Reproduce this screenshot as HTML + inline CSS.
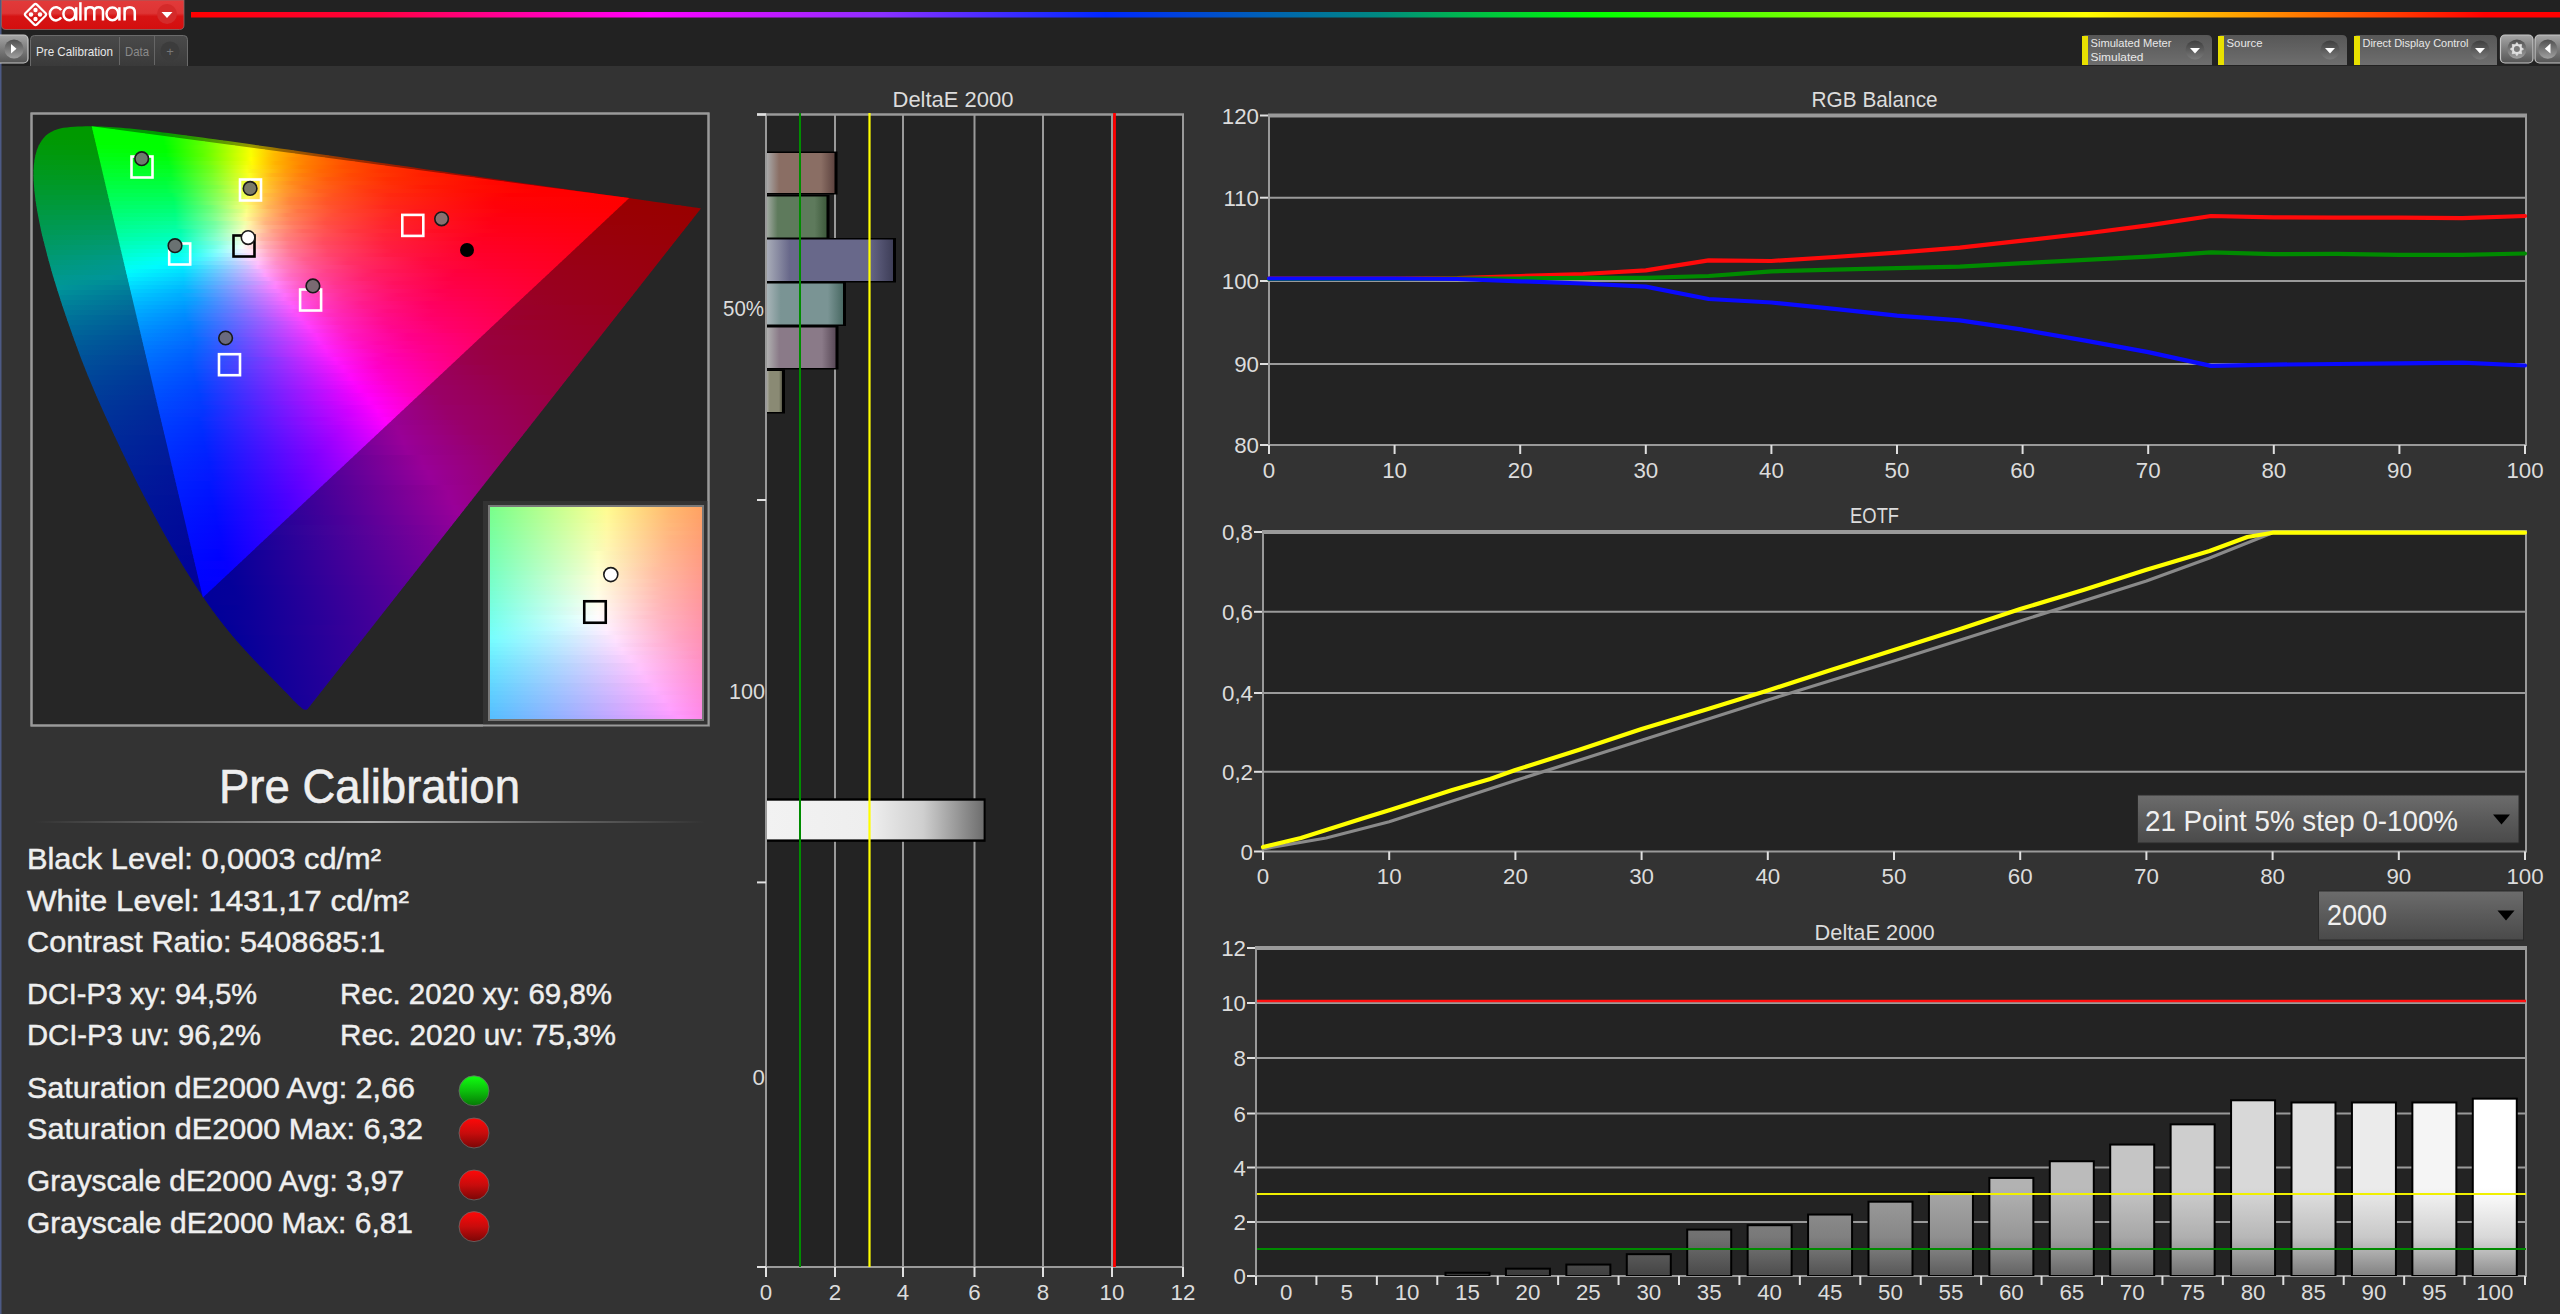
<!DOCTYPE html>
<html><head><meta charset="utf-8"><title>Calman</title>
<style>
html,body{margin:0;padding:0;background:#333;overflow:hidden;width:2560px;height:1314px}
svg{position:absolute;left:0;top:0;display:block}
text{font-family:"Liberation Sans", sans-serif}
</style></head><body>
<svg width="2560" height="1314" viewBox="0 0 2560 1314">
<defs><linearGradient id="rainbow" x1="0" x2="1" y1="0" y2="0">
<stop offset="0" stop-color="#ff0000"/><stop offset="0.08" stop-color="#ff0040"/><stop offset="0.194" stop-color="#ff00ff"/>
<stop offset="0.292" stop-color="#8a30ff"/><stop offset="0.386" stop-color="#0028ff"/><stop offset="0.502" stop-color="#008a80"/>
<stop offset="0.592" stop-color="#00ff00"/><stop offset="0.70" stop-color="#90ff00"/><stop offset="0.80" stop-color="#ffff00"/>
<stop offset="0.869" stop-color="#ff9a00"/><stop offset="0.968" stop-color="#ff0000"/><stop offset="1" stop-color="#ff0000"/></linearGradient><linearGradient id="redbtn" x1="0" x2="0" y1="0" y2="1">
<stop offset="0" stop-color="#e23a3a"/><stop offset="0.45" stop-color="#de3434"/><stop offset="0.55" stop-color="#d61414"/><stop offset="1" stop-color="#d40e0e"/></linearGradient><linearGradient id="btn" x1="0" x2="0" y1="0" y2="1">
<stop offset="0" stop-color="#a6a6a6"/><stop offset="0.5" stop-color="#7c7c7c"/><stop offset="1" stop-color="#555555"/></linearGradient>
<linearGradient id="btnc" x1="0" x2="0" y1="0" y2="1">
<stop offset="0" stop-color="#505050"/><stop offset="1" stop-color="#a0a0a0"/></linearGradient><linearGradient id="tabg" x1="0" x2="0" y1="0" y2="1">
<stop offset="0" stop-color="#4a4a4a"/><stop offset="1" stop-color="#3a3a3a"/></linearGradient><linearGradient id="dd" x1="0" x2="0" y1="0" y2="1">
<stop offset="0" stop-color="#575757"/><stop offset="1" stop-color="#6e6e6e"/></linearGradient><linearGradient id="ddc" x1="0" x2="0" y1="0" y2="1">
<stop offset="0" stop-color="#3e3e3e"/><stop offset="1" stop-color="#7a7a7a"/></linearGradient><linearGradient id="sep" x1="0" x2="1" y1="0" y2="0">
<stop offset="0" stop-color="#333" /><stop offset="0.5" stop-color="#a8a8a8"/><stop offset="1" stop-color="#333"/></linearGradient><linearGradient id="ballg" x1="0" x2="0" y1="0" y2="1">
<stop offset="0" stop-color="#10ff10"/><stop offset="0.5" stop-color="#0cc00c"/><stop offset="1" stop-color="#067806"/></linearGradient><linearGradient id="ballr" x1="0" x2="0" y1="0" y2="1">
<stop offset="0" stop-color="#ff0808"/><stop offset="0.5" stop-color="#c80c0c"/><stop offset="1" stop-color="#7a0606"/></linearGradient><linearGradient id="hb0" x1="0" x2="1" y1="0" y2="0">
<stop offset="0" stop-color="#a8a8a8"/><stop offset="0.18" stop-color="#8a6e64"/><stop offset="0.8" stop-color="#8a6e64"/><stop offset="1" stop-color="#5e4440"/></linearGradient><linearGradient id="hb1" x1="0" x2="1" y1="0" y2="0">
<stop offset="0" stop-color="#a0a8a0"/><stop offset="0.18" stop-color="#5e7a5c"/><stop offset="0.8" stop-color="#5e7a5c"/><stop offset="1" stop-color="#3e5a3c"/></linearGradient><linearGradient id="hb2" x1="0" x2="1" y1="0" y2="0">
<stop offset="0" stop-color="#a8acb8"/><stop offset="0.18" stop-color="#68688a"/><stop offset="0.8" stop-color="#68688a"/><stop offset="1" stop-color="#3e3e58"/></linearGradient><linearGradient id="hb3" x1="0" x2="1" y1="0" y2="0">
<stop offset="0" stop-color="#a8b4b8"/><stop offset="0.18" stop-color="#7a9494"/><stop offset="0.8" stop-color="#7a9494"/><stop offset="1" stop-color="#4a6a64"/></linearGradient><linearGradient id="hb4" x1="0" x2="1" y1="0" y2="0">
<stop offset="0" stop-color="#b0b0b0"/><stop offset="0.18" stop-color="#8a7a88"/><stop offset="0.8" stop-color="#8a7a88"/><stop offset="1" stop-color="#5a4a58"/></linearGradient><linearGradient id="hb5" x1="0" x2="1" y1="0" y2="0">
<stop offset="0" stop-color="#a8a8a0"/><stop offset="0.18" stop-color="#8a8a74"/><stop offset="0.8" stop-color="#8a8a74"/><stop offset="1" stop-color="#5a5a48"/></linearGradient><linearGradient id="hbw" x1="0" x2="1" y1="0" y2="0">
<stop offset="0" stop-color="#f2f2f2"/><stop offset="0.48" stop-color="#eeeeee"/><stop offset="0.72" stop-color="#cfcfcf"/><stop offset="1" stop-color="#6e6e6e"/></linearGradient><linearGradient id="sel" x1="0" x2="0" y1="0" y2="1">
<stop offset="0" stop-color="#6c6c6c"/><stop offset="0.5" stop-color="#5a5a5a"/><stop offset="1" stop-color="#4a4a4a"/></linearGradient><linearGradient id="vb3" gradientUnits="userSpaceOnUse" x1="0" x2="0" y1="1100" y2="1276">
<stop offset="0" stop-color="#626262"/><stop offset="0.5" stop-color="#626262"/><stop offset="0.78" stop-color="#535353"/><stop offset="1" stop-color="#363636"/></linearGradient><linearGradient id="vb4" gradientUnits="userSpaceOnUse" x1="0" x2="0" y1="1100" y2="1276">
<stop offset="0" stop-color="#6a6a6a"/><stop offset="0.5" stop-color="#6a6a6a"/><stop offset="0.78" stop-color="#5a5a5a"/><stop offset="1" stop-color="#3a3a3a"/></linearGradient><linearGradient id="vb5" gradientUnits="userSpaceOnUse" x1="0" x2="0" y1="1100" y2="1276">
<stop offset="0" stop-color="#737373"/><stop offset="0.5" stop-color="#737373"/><stop offset="0.78" stop-color="#626262"/><stop offset="1" stop-color="#3f3f3f"/></linearGradient><linearGradient id="vb6" gradientUnits="userSpaceOnUse" x1="0" x2="0" y1="1100" y2="1276">
<stop offset="0" stop-color="#7b7b7b"/><stop offset="0.5" stop-color="#7b7b7b"/><stop offset="0.78" stop-color="#696969"/><stop offset="1" stop-color="#444444"/></linearGradient><linearGradient id="vb7" gradientUnits="userSpaceOnUse" x1="0" x2="0" y1="1100" y2="1276">
<stop offset="0" stop-color="#848484"/><stop offset="0.5" stop-color="#848484"/><stop offset="0.78" stop-color="#707070"/><stop offset="1" stop-color="#494949"/></linearGradient><linearGradient id="vb8" gradientUnits="userSpaceOnUse" x1="0" x2="0" y1="1100" y2="1276">
<stop offset="0" stop-color="#8d8d8d"/><stop offset="0.5" stop-color="#8d8d8d"/><stop offset="0.78" stop-color="#787878"/><stop offset="1" stop-color="#4d4d4d"/></linearGradient><linearGradient id="vb9" gradientUnits="userSpaceOnUse" x1="0" x2="0" y1="1100" y2="1276">
<stop offset="0" stop-color="#969696"/><stop offset="0.5" stop-color="#969696"/><stop offset="0.78" stop-color="#808080"/><stop offset="1" stop-color="#525252"/></linearGradient><linearGradient id="vb10" gradientUnits="userSpaceOnUse" x1="0" x2="0" y1="1100" y2="1276">
<stop offset="0" stop-color="#9f9f9f"/><stop offset="0.5" stop-color="#9f9f9f"/><stop offset="0.78" stop-color="#878787"/><stop offset="1" stop-color="#575757"/></linearGradient><linearGradient id="vb11" gradientUnits="userSpaceOnUse" x1="0" x2="0" y1="1100" y2="1276">
<stop offset="0" stop-color="#a8a8a8"/><stop offset="0.5" stop-color="#a8a8a8"/><stop offset="0.78" stop-color="#8f8f8f"/><stop offset="1" stop-color="#5c5c5c"/></linearGradient><linearGradient id="vb12" gradientUnits="userSpaceOnUse" x1="0" x2="0" y1="1100" y2="1276">
<stop offset="0" stop-color="#b2b2b2"/><stop offset="0.5" stop-color="#b2b2b2"/><stop offset="0.78" stop-color="#979797"/><stop offset="1" stop-color="#626262"/></linearGradient><linearGradient id="vb13" gradientUnits="userSpaceOnUse" x1="0" x2="0" y1="1100" y2="1276">
<stop offset="0" stop-color="#bbbbbb"/><stop offset="0.5" stop-color="#bbbbbb"/><stop offset="0.78" stop-color="#9f9f9f"/><stop offset="1" stop-color="#676767"/></linearGradient><linearGradient id="vb14" gradientUnits="userSpaceOnUse" x1="0" x2="0" y1="1100" y2="1276">
<stop offset="0" stop-color="#c5c5c5"/><stop offset="0.5" stop-color="#c5c5c5"/><stop offset="0.78" stop-color="#a7a7a7"/><stop offset="1" stop-color="#6c6c6c"/></linearGradient><linearGradient id="vb15" gradientUnits="userSpaceOnUse" x1="0" x2="0" y1="1100" y2="1276">
<stop offset="0" stop-color="#cecece"/><stop offset="0.5" stop-color="#cecece"/><stop offset="0.78" stop-color="#afafaf"/><stop offset="1" stop-color="#717171"/></linearGradient><linearGradient id="vb16" gradientUnits="userSpaceOnUse" x1="0" x2="0" y1="1100" y2="1276">
<stop offset="0" stop-color="#d8d8d8"/><stop offset="0.5" stop-color="#d8d8d8"/><stop offset="0.78" stop-color="#b7b7b7"/><stop offset="1" stop-color="#767676"/></linearGradient><linearGradient id="vb17" gradientUnits="userSpaceOnUse" x1="0" x2="0" y1="1100" y2="1276">
<stop offset="0" stop-color="#e1e1e1"/><stop offset="0.5" stop-color="#e1e1e1"/><stop offset="0.78" stop-color="#bfbfbf"/><stop offset="1" stop-color="#7c7c7c"/></linearGradient><linearGradient id="vb18" gradientUnits="userSpaceOnUse" x1="0" x2="0" y1="1100" y2="1276">
<stop offset="0" stop-color="#ebebeb"/><stop offset="0.5" stop-color="#ebebeb"/><stop offset="0.78" stop-color="#c8c8c8"/><stop offset="1" stop-color="#818181"/></linearGradient><linearGradient id="vb19" gradientUnits="userSpaceOnUse" x1="0" x2="0" y1="1100" y2="1276">
<stop offset="0" stop-color="#f5f5f5"/><stop offset="0.5" stop-color="#f5f5f5"/><stop offset="0.78" stop-color="#d0d0d0"/><stop offset="1" stop-color="#868686"/></linearGradient><linearGradient id="vb20" gradientUnits="userSpaceOnUse" x1="0" x2="0" y1="1100" y2="1276">
<stop offset="0" stop-color="#ffffff"/><stop offset="0.5" stop-color="#ffffff"/><stop offset="0.78" stop-color="#d8d8d8"/><stop offset="1" stop-color="#8c8c8c"/></linearGradient><clipPath id="locus"><path d="M307.6,709.0 L307.3,709.2 L307.0,709.4 L306.7,709.6 L306.4,709.7 L306.1,709.8 L305.8,709.8 L305.5,709.8 L305.1,709.7 L304.7,709.7 L304.2,709.6 L303.6,709.4 L302.6,708.7 L301.4,707.8 L300.0,706.5 L298.2,704.9 L296.1,702.9 L293.6,700.4 L290.8,697.5 L287.6,694.1 L283.8,690.2 L279.2,685.5 L273.9,680.1 L268.6,674.7 L263.8,669.8 L260.0,666.0 L256.8,662.7 L253.7,659.4 L250.2,655.7 L246.3,651.5 L242.2,647.0 L237.9,642.2 L233.4,637.0 L228.8,631.4 L224.0,625.6 L218.9,619.1 L213.3,611.6 L207.2,603.0 L200.7,593.5 L193.8,583.0 L186.6,571.7 L179.1,559.4 L171.3,546.2 L163.2,532.1 L155.1,517.1 L146.7,501.2 L138.0,484.4 L129.4,466.9 L120.9,449.2 L112.4,431.2 L103.9,412.7 L95.6,394.1 L87.9,375.8 L80.8,357.7 L74.1,339.6 L67.9,322.0 L62.2,305.3 L57.1,289.3 L52.4,273.9 L48.3,259.3 L44.8,245.8 L41.7,233.4 L39.3,221.9 L37.3,211.4 L35.7,201.6 L34.6,192.8 L33.9,184.8 L33.5,177.6 L33.5,170.9 L33.9,164.7 L34.6,159.2 L35.7,154.3 L37.0,149.8 L38.6,145.7 L40.6,142.2 L42.8,139.0 L45.2,136.3 L47.8,134.1 L50.6,132.2 L53.7,130.7 L56.8,129.5 L60.1,128.5 L63.5,127.8 L67.0,127.4 L70.6,127.0 L74.3,126.7 L78.1,126.5 L81.9,126.4 L85.7,126.3 L89.5,126.3 L93.3,126.4 L97.2,126.4 L101.0,126.6 L105.0,126.7 L108.9,127.0 L112.9,127.2 L117.0,127.5 L121.2,127.8 L125.4,128.2 L129.8,128.6 L134.2,129.0 L138.8,129.5 L143.4,130.0 L148.1,130.6 L152.9,131.1 L157.9,131.7 L163.0,132.4 L168.1,133.0 L173.5,133.7 L179.0,134.4 L184.6,135.2 L190.4,135.9 L196.3,136.7 L202.3,137.6 L208.6,138.4 L214.9,139.3 L221.5,140.2 L228.2,141.1 L235.1,142.1 L242.2,143.1 L249.4,144.1 L256.8,145.2 L264.4,146.2 L272.1,147.3 L280.0,148.5 L288.2,149.6 L296.4,150.8 L304.9,152.0 L313.5,153.2 L322.3,154.5 L331.2,155.8 L340.3,157.1 L349.6,158.4 L358.9,159.7 L368.5,161.0 L378.1,162.4 L387.7,163.8 L397.5,165.2 L407.3,166.6 L417.2,168.0 L426.9,169.4 L436.5,170.8 L446.1,172.1 L455.5,173.5 L464.9,174.8 L474.3,176.1 L483.7,177.5 L492.9,178.8 L501.9,180.1 L510.6,181.3 L519.1,182.5 L527.4,183.7 L535.4,184.8 L543.2,185.9 L550.7,187.0 L558.0,188.0 L565.0,189.0 L571.7,190.0 L578.2,190.9 L584.3,191.8 L590.2,192.6 L595.9,193.4 L601.2,194.2 L606.4,194.9 L611.3,195.6 L616.1,196.3 L620.6,196.9 L624.9,197.5 L629.1,198.1 L633.2,198.7 L637.1,199.3 L640.9,199.8 L644.6,200.4 L647.8,200.8 L650.9,201.3 L654.0,201.7 L657.6,202.2 L662.1,202.8 L667.1,203.6 L672.0,204.3 L676.3,204.9 L679.7,205.3 L682.5,205.7 L685.0,206.1 L687.5,206.4 L690.1,206.8 L692.8,207.2 L695.2,207.5 L697.1,207.8 L698.6,208.0 L699.6,208.2 L700.4,208.3 L700.9,208.4 Z"/></clipPath><clipPath id="tri"><path d="M91.7,126.3 L629.2,198.1 L202.9,597.4 Z"/></clipPath><linearGradient id="c1" gradientUnits="userSpaceOnUse" x1="52" x2="147" y1="0" y2="0"><stop offset="0" stop-color="#009900"/><stop offset="1" stop-color="#009900"/></linearGradient><linearGradient id="c2" gradientUnits="userSpaceOnUse" x1="43" x2="187" y1="0" y2="0"><stop offset="0" stop-color="#009900"/><stop offset="0.83" stop-color="#009900"/><stop offset="1" stop-color="#219900"/></linearGradient><linearGradient id="c3" gradientUnits="userSpaceOnUse" x1="39" x2="223" y1="0" y2="0"><stop offset="0" stop-color="#009901"/><stop offset="0.65" stop-color="#009900"/><stop offset="0.76" stop-color="#149900"/><stop offset="1" stop-color="#5d9900"/></linearGradient><linearGradient id="c4" gradientUnits="userSpaceOnUse" x1="36" x2="259" y1="0" y2="0"><stop offset="0" stop-color="#009905"/><stop offset="0.58" stop-color="#019900"/><stop offset="0.85" stop-color="#629900"/><stop offset="0.94" stop-color="#8b9900"/><stop offset="1" stop-color="#998b00"/></linearGradient><linearGradient id="c5" gradientUnits="userSpaceOnUse" x1="33" x2="294" y1="0" y2="0"><stop offset="0" stop-color="#009909"/><stop offset="0.5" stop-color="#009900"/><stop offset="0.61" stop-color="#299900"/><stop offset="0.8" stop-color="#859900"/><stop offset="0.84" stop-color="#999600"/><stop offset="0.96" stop-color="#996500"/><stop offset="1" stop-color="#995800"/></linearGradient><linearGradient id="c6" gradientUnits="userSpaceOnUse" x1="32" x2="329" y1="0" y2="0"><stop offset="0" stop-color="#00990d"/><stop offset="0.44" stop-color="#009902"/><stop offset="0.51" stop-color="#179900"/><stop offset="0.67" stop-color="#6f9900"/><stop offset="0.74" stop-color="#999800"/><stop offset="0.84" stop-color="#996500"/><stop offset="1" stop-color="#993b00"/></linearGradient><linearGradient id="c7" gradientUnits="userSpaceOnUse" x1="31" x2="364" y1="0" y2="0"><stop offset="0" stop-color="#009911"/><stop offset="0.39" stop-color="#009907"/><stop offset="0.42" stop-color="#069906"/><stop offset="0.57" stop-color="#599900"/><stop offset="0.66" stop-color="#999900"/><stop offset="0.75" stop-color="#996500"/><stop offset="0.9" stop-color="#993900"/><stop offset="1" stop-color="#992800"/></linearGradient><linearGradient id="c8" gradientUnits="userSpaceOnUse" x1="30" x2="400" y1="0" y2="0"><stop offset="0" stop-color="#009915"/><stop offset="0.38" stop-color="#03990c"/><stop offset="0.51" stop-color="#579906"/><stop offset="0.59" stop-color="#979902"/><stop offset="0.68" stop-color="#996600"/><stop offset="0.81" stop-color="#993900"/><stop offset="1" stop-color="#991a00"/></linearGradient><linearGradient id="c9" gradientUnits="userSpaceOnUse" x1="30" x2="435" y1="0" y2="0"><stop offset="0" stop-color="#009919"/><stop offset="0.35" stop-color="#039911"/><stop offset="0.47" stop-color="#57990d"/><stop offset="0.54" stop-color="#989909"/><stop offset="0.62" stop-color="#996503"/><stop offset="0.74" stop-color="#993800"/><stop offset="0.96" stop-color="#991400"/><stop offset="1" stop-color="#991100"/></linearGradient><linearGradient id="c10" gradientUnits="userSpaceOnUse" x1="30" x2="470" y1="0" y2="0"><stop offset="0" stop-color="#00991e"/><stop offset="0.32" stop-color="#029917"/><stop offset="0.43" stop-color="#579913"/><stop offset="0.5" stop-color="#999911"/><stop offset="0.55" stop-color="#99720b"/><stop offset="0.64" stop-color="#994504"/><stop offset="0.77" stop-color="#992300"/><stop offset="1" stop-color="#990900"/></linearGradient><linearGradient id="c11" gradientUnits="userSpaceOnUse" x1="30" x2="505" y1="0" y2="0"><stop offset="0" stop-color="#009922"/><stop offset="0.29" stop-color="#01991d"/><stop offset="0.4" stop-color="#57991a"/><stop offset="0.46" stop-color="#999818"/><stop offset="0.51" stop-color="#997110"/><stop offset="0.59" stop-color="#994408"/><stop offset="0.72" stop-color="#992302"/><stop offset="0.97" stop-color="#990500"/><stop offset="1" stop-color="#990300"/></linearGradient><linearGradient id="c12" gradientUnits="userSpaceOnUse" x1="30" x2="540" y1="0" y2="0"><stop offset="0" stop-color="#009926"/><stop offset="0.27" stop-color="#009923"/><stop offset="0.37" stop-color="#579921"/><stop offset="0.43" stop-color="#99971f"/><stop offset="0.47" stop-color="#997016"/><stop offset="0.55" stop-color="#99430c"/><stop offset="0.69" stop-color="#991e04"/><stop offset="0.96" stop-color="#990000"/><stop offset="1" stop-color="#990000"/></linearGradient><linearGradient id="c13" gradientUnits="userSpaceOnUse" x1="30" x2="575" y1="0" y2="0"><stop offset="0" stop-color="#00992b"/><stop offset="0.26" stop-color="#009929"/><stop offset="0.33" stop-color="#439928"/><stop offset="0.4" stop-color="#999627"/><stop offset="0.44" stop-color="#996f1c"/><stop offset="0.51" stop-color="#994210"/><stop offset="0.66" stop-color="#991a05"/><stop offset="0.9" stop-color="#990000"/><stop offset="1" stop-color="#990000"/></linearGradient><linearGradient id="c14" gradientUnits="userSpaceOnUse" x1="31" x2="610" y1="0" y2="0"><stop offset="0" stop-color="#00992f"/><stop offset="0.24" stop-color="#00992f"/><stop offset="0.33" stop-color="#599930"/><stop offset="0.38" stop-color="#99932e"/><stop offset="0.41" stop-color="#996c22"/><stop offset="0.48" stop-color="#994114"/><stop offset="0.59" stop-color="#99200a"/><stop offset="0.79" stop-color="#990301"/><stop offset="1" stop-color="#990000"/></linearGradient><linearGradient id="c15" gradientUnits="userSpaceOnUse" x1="31" x2="646" y1="0" y2="0"><stop offset="0" stop-color="#009934"/><stop offset="0.23" stop-color="#009936"/><stop offset="0.29" stop-color="#459937"/><stop offset="0.34" stop-color="#879938"/><stop offset="0.36" stop-color="#999235"/><stop offset="0.39" stop-color="#996b28"/><stop offset="0.46" stop-color="#994019"/><stop offset="0.55" stop-color="#991f0d"/><stop offset="0.76" stop-color="#990103"/><stop offset="1" stop-color="#990000"/></linearGradient><linearGradient id="c16" gradientUnits="userSpaceOnUse" x1="32" x2="681" y1="0" y2="0"><stop offset="0" stop-color="#009938"/><stop offset="0.22" stop-color="#00993c"/><stop offset="0.28" stop-color="#46993e"/><stop offset="0.32" stop-color="#8a9940"/><stop offset="0.34" stop-color="#998e3c"/><stop offset="0.39" stop-color="#995b28"/><stop offset="0.45" stop-color="#99371a"/><stop offset="0.57" stop-color="#99140c"/><stop offset="0.76" stop-color="#990003"/><stop offset="1" stop-color="#990000"/></linearGradient><linearGradient id="c17" gradientUnits="userSpaceOnUse" x1="33" x2="703" y1="0" y2="0"><stop offset="0" stop-color="#00993d"/><stop offset="0.21" stop-color="#009943"/><stop offset="0.27" stop-color="#489946"/><stop offset="0.31" stop-color="#8e9949"/><stop offset="0.33" stop-color="#998b43"/><stop offset="0.36" stop-color="#996633"/><stop offset="0.42" stop-color="#993c20"/><stop offset="0.54" stop-color="#991610"/><stop offset="0.72" stop-color="#990005"/><stop offset="1" stop-color="#990000"/></linearGradient><linearGradient id="c18" gradientUnits="userSpaceOnUse" x1="34" x2="703" y1="0" y2="0"><stop offset="0" stop-color="#009942"/><stop offset="0.21" stop-color="#00994a"/><stop offset="0.27" stop-color="#4a994e"/><stop offset="0.31" stop-color="#919952"/><stop offset="0.34" stop-color="#997440"/><stop offset="0.39" stop-color="#994c2d"/><stop offset="0.46" stop-color="#99281c"/><stop offset="0.63" stop-color="#99070c"/><stop offset="0.79" stop-color="#990005"/><stop offset="1" stop-color="#990000"/></linearGradient><linearGradient id="c19" gradientUnits="userSpaceOnUse" x1="34" x2="699" y1="0" y2="0"><stop offset="0" stop-color="#009947"/><stop offset="0.21" stop-color="#009951"/><stop offset="0.27" stop-color="#4a9956"/><stop offset="0.32" stop-color="#92995b"/><stop offset="0.35" stop-color="#997247"/><stop offset="0.39" stop-color="#994b32"/><stop offset="0.47" stop-color="#99271f"/><stop offset="0.62" stop-color="#99080f"/><stop offset="0.77" stop-color="#990007"/><stop offset="1" stop-color="#990001"/></linearGradient><linearGradient id="c20" gradientUnits="userSpaceOnUse" x1="35" x2="695" y1="0" y2="0"><stop offset="0" stop-color="#00994c"/><stop offset="0.21" stop-color="#009959"/><stop offset="0.27" stop-color="#4c995f"/><stop offset="0.32" stop-color="#969965"/><stop offset="0.36" stop-color="#996044"/><stop offset="0.42" stop-color="#99382d"/><stop offset="0.53" stop-color="#991619"/><stop offset="0.71" stop-color="#99000b"/><stop offset="1" stop-color="#990002"/></linearGradient><linearGradient id="c21" gradientUnits="userSpaceOnUse" x1="36" x2="691" y1="0" y2="0"><stop offset="0" stop-color="#009951"/><stop offset="0.21" stop-color="#009960"/><stop offset="0.27" stop-color="#4e9968"/><stop offset="0.32" stop-color="#99986f"/><stop offset="0.35" stop-color="#996d53"/><stop offset="0.4" stop-color="#99463b"/><stop offset="0.49" stop-color="#992023"/><stop offset="0.67" stop-color="#990210"/><stop offset="1" stop-color="#990003"/></linearGradient><linearGradient id="c22" gradientUnits="userSpaceOnUse" x1="38" x2="687" y1="0" y2="0"><stop offset="0" stop-color="#009956"/><stop offset="0.22" stop-color="#029968"/><stop offset="0.28" stop-color="#529971"/><stop offset="0.31" stop-color="#849977"/><stop offset="0.32" stop-color="#999274"/><stop offset="0.35" stop-color="#996858"/><stop offset="0.42" stop-color="#993b39"/><stop offset="0.52" stop-color="#991720"/><stop offset="0.71" stop-color="#99000f"/><stop offset="1" stop-color="#990005"/></linearGradient><linearGradient id="c23" gradientUnits="userSpaceOnUse" x1="39" x2="683" y1="0" y2="0"><stop offset="0" stop-color="#00995c"/><stop offset="0.22" stop-color="#039971"/><stop offset="0.28" stop-color="#55997b"/><stop offset="0.31" stop-color="#889981"/><stop offset="0.33" stop-color="#998e7b"/><stop offset="0.36" stop-color="#99655e"/><stop offset="0.42" stop-color="#99393d"/><stop offset="0.53" stop-color="#991623"/><stop offset="0.7" stop-color="#990012"/><stop offset="1" stop-color="#990006"/></linearGradient><linearGradient id="c24" gradientUnits="userSpaceOnUse" x1="40" x2="680" y1="0" y2="0"><stop offset="0" stop-color="#009961"/><stop offset="0.22" stop-color="#039979"/><stop offset="0.28" stop-color="#579985"/><stop offset="0.31" stop-color="#8b998c"/><stop offset="0.33" stop-color="#998a83"/><stop offset="0.36" stop-color="#996363"/><stop offset="0.42" stop-color="#993741"/><stop offset="0.53" stop-color="#991526"/><stop offset="0.7" stop-color="#990014"/><stop offset="1" stop-color="#990007"/></linearGradient><linearGradient id="c25" gradientUnits="userSpaceOnUse" x1="41" x2="676" y1="0" y2="0"><stop offset="0" stop-color="#009967"/><stop offset="0.22" stop-color="#049982"/><stop offset="0.28" stop-color="#59998f"/><stop offset="0.31" stop-color="#8f9998"/><stop offset="0.33" stop-color="#99878a"/><stop offset="0.36" stop-color="#996069"/><stop offset="0.43" stop-color="#993645"/><stop offset="0.52" stop-color="#99172b"/><stop offset="0.69" stop-color="#990017"/><stop offset="1" stop-color="#990009"/></linearGradient><linearGradient id="c26" gradientUnits="userSpaceOnUse" x1="42" x2="672" y1="0" y2="0"><stop offset="0" stop-color="#00996c"/><stop offset="0.21" stop-color="#009988"/><stop offset="0.22" stop-color="#05998b"/><stop offset="0.3" stop-color="#729399"/><stop offset="0.32" stop-color="#8a8f99"/><stop offset="0.33" stop-color="#998391"/><stop offset="0.38" stop-color="#995063"/><stop offset="0.44" stop-color="#992d43"/><stop offset="0.57" stop-color="#990d26"/><stop offset="0.71" stop-color="#990017"/><stop offset="1" stop-color="#99000a"/></linearGradient><linearGradient id="c27" gradientUnits="userSpaceOnUse" x1="44" x2="668" y1="0" y2="0"><stop offset="0" stop-color="#009973"/><stop offset="0.21" stop-color="#009991"/><stop offset="0.22" stop-color="#079995"/><stop offset="0.34" stop-color="#997d96"/><stop offset="0.37" stop-color="#995973"/><stop offset="0.43" stop-color="#99314d"/><stop offset="0.54" stop-color="#99112e"/><stop offset="0.71" stop-color="#99001a"/><stop offset="1" stop-color="#99000b"/></linearGradient><linearGradient id="c28" gradientUnits="userSpaceOnUse" x1="45" x2="664" y1="0" y2="0"><stop offset="0" stop-color="#009979"/><stop offset="0.21" stop-color="#009799"/><stop offset="0.23" stop-color="#089499"/><stop offset="0.34" stop-color="#967799"/><stop offset="0.39" stop-color="#994a6c"/><stop offset="0.45" stop-color="#99294a"/><stop offset="0.58" stop-color="#990b2b"/><stop offset="0.71" stop-color="#99001c"/><stop offset="1" stop-color="#99000d"/></linearGradient><linearGradient id="c29" gradientUnits="userSpaceOnUse" x1="46" x2="660" y1="0" y2="0"><stop offset="0" stop-color="#00997f"/><stop offset="0.18" stop-color="#009699"/><stop offset="0.21" stop-color="#008e99"/><stop offset="0.23" stop-color="#088b99"/><stop offset="0.34" stop-color="#8f6f99"/><stop offset="0.36" stop-color="#99638e"/><stop offset="0.42" stop-color="#99355c"/><stop offset="0.54" stop-color="#991236"/><stop offset="0.68" stop-color="#990021"/><stop offset="1" stop-color="#99000e"/></linearGradient><linearGradient id="c30" gradientUnits="userSpaceOnUse" x1="48" x2="656" y1="0" y2="0"><stop offset="0" stop-color="#009985"/><stop offset="0.15" stop-color="#009499"/><stop offset="0.21" stop-color="#008699"/><stop offset="0.25" stop-color="#1c7f99"/><stop offset="0.35" stop-color="#8c6799"/><stop offset="0.36" stop-color="#995e93"/><stop offset="0.41" stop-color="#993a69"/><stop offset="0.51" stop-color="#991741"/><stop offset="0.67" stop-color="#990025"/><stop offset="1" stop-color="#990010"/></linearGradient><linearGradient id="c31" gradientUnits="userSpaceOnUse" x1="49" x2="652" y1="0" y2="0"><stop offset="0" stop-color="#00998c"/><stop offset="0.1" stop-color="#009599"/><stop offset="0.22" stop-color="#007e99"/><stop offset="0.25" stop-color="#1b7799"/><stop offset="0.36" stop-color="#995b99"/><stop offset="0.41" stop-color="#99386e"/><stop offset="0.51" stop-color="#991644"/><stop offset="0.68" stop-color="#990026"/><stop offset="1" stop-color="#990011"/></linearGradient><linearGradient id="c32" gradientUnits="userSpaceOnUse" x1="51" x2="648" y1="0" y2="0"><stop offset="0" stop-color="#009993"/><stop offset="0.12" stop-color="#008b99"/><stop offset="0.22" stop-color="#007799"/><stop offset="0.32" stop-color="#606199"/><stop offset="0.37" stop-color="#965599"/><stop offset="0.44" stop-color="#992e67"/><stop offset="0.54" stop-color="#991142"/><stop offset="0.69" stop-color="#990028"/><stop offset="1" stop-color="#990013"/></linearGradient><linearGradient id="c33" gradientUnits="userSpaceOnUse" x1="52" x2="644" y1="0" y2="0"><stop offset="0" stop-color="#009899"/><stop offset="0.22" stop-color="#007099"/><stop offset="0.37" stop-color="#904f99"/><stop offset="0.39" stop-color="#994790"/><stop offset="0.46" stop-color="#992663"/><stop offset="0.56" stop-color="#990d41"/><stop offset="0.69" stop-color="#99002a"/><stop offset="1" stop-color="#990014"/></linearGradient><linearGradient id="c34" gradientUnits="userSpaceOnUse" x1="54" x2="640" y1="0" y2="0"><stop offset="0" stop-color="#009199"/><stop offset="0.22" stop-color="#006a99"/><stop offset="0.38" stop-color="#8d4a99"/><stop offset="0.39" stop-color="#994394"/><stop offset="0.46" stop-color="#992366"/><stop offset="0.56" stop-color="#990b43"/><stop offset="0.68" stop-color="#99002e"/><stop offset="1" stop-color="#990016"/></linearGradient><linearGradient id="c35" gradientUnits="userSpaceOnUse" x1="55" x2="636" y1="0" y2="0"><stop offset="0" stop-color="#008b99"/><stop offset="0.22" stop-color="#006499"/><stop offset="0.4" stop-color="#994199"/><stop offset="0.46" stop-color="#992269"/><stop offset="0.57" stop-color="#990a46"/><stop offset="0.71" stop-color="#99002e"/><stop offset="1" stop-color="#990017"/></linearGradient><linearGradient id="c36" gradientUnits="userSpaceOnUse" x1="57" x2="632" y1="0" y2="0"><stop offset="0" stop-color="#008599"/><stop offset="0.23" stop-color="#015f99"/><stop offset="0.4" stop-color="#963c99"/><stop offset="0.49" stop-color="#991b64"/><stop offset="0.61" stop-color="#990440"/><stop offset="0.89" stop-color="#990020"/><stop offset="1" stop-color="#990019"/></linearGradient><linearGradient id="c37" gradientUnits="userSpaceOnUse" x1="59" x2="628" y1="0" y2="0"><stop offset="0" stop-color="#007f99"/><stop offset="0.23" stop-color="#035a99"/><stop offset="0.4" stop-color="#933899"/><stop offset="0.46" stop-color="#992378"/><stop offset="0.56" stop-color="#990a4f"/><stop offset="0.7" stop-color="#990034"/><stop offset="1" stop-color="#99001b"/></linearGradient><linearGradient id="c38" gradientUnits="userSpaceOnUse" x1="60" x2="625" y1="0" y2="0"><stop offset="0" stop-color="#007a99"/><stop offset="0.23" stop-color="#045599"/><stop offset="0.42" stop-color="#992f95"/><stop offset="0.5" stop-color="#99176a"/><stop offset="0.64" stop-color="#990041"/><stop offset="0.92" stop-color="#990021"/><stop offset="1" stop-color="#99001c"/></linearGradient><linearGradient id="c39" gradientUnits="userSpaceOnUse" x1="62" x2="621" y1="0" y2="0"><stop offset="0" stop-color="#007499"/><stop offset="0.21" stop-color="#005399"/><stop offset="0.25" stop-color="#124d99"/><stop offset="0.43" stop-color="#992c98"/><stop offset="0.5" stop-color="#99156d"/><stop offset="0.63" stop-color="#990147"/><stop offset="0.84" stop-color="#990029"/><stop offset="1" stop-color="#99001e"/></linearGradient><linearGradient id="c40" gradientUnits="userSpaceOnUse" x1="64" x2="617" y1="0" y2="0"><stop offset="0" stop-color="#007099"/><stop offset="0.22" stop-color="#004f99"/><stop offset="0.29" stop-color="#2c4399"/><stop offset="0.43" stop-color="#972999"/><stop offset="0.52" stop-color="#990f68"/><stop offset="0.67" stop-color="#990042"/><stop offset="0.94" stop-color="#990024"/><stop offset="1" stop-color="#990020"/></linearGradient><linearGradient id="c41" gradientUnits="userSpaceOnUse" x1="65" x2="613" y1="0" y2="0"><stop offset="0" stop-color="#006b99"/><stop offset="0.22" stop-color="#004b99"/><stop offset="0.31" stop-color="#373c99"/><stop offset="0.44" stop-color="#932699"/><stop offset="0.49" stop-color="#99167c"/><stop offset="0.6" stop-color="#990354"/><stop offset="0.82" stop-color="#990030"/><stop offset="1" stop-color="#990022"/></linearGradient><linearGradient id="c42" gradientUnits="userSpaceOnUse" x1="67" x2="609" y1="0" y2="0"><stop offset="0" stop-color="#006799"/><stop offset="0.22" stop-color="#004799"/><stop offset="0.39" stop-color="#692c99"/><stop offset="0.46" stop-color="#991e94"/><stop offset="0.55" stop-color="#990967"/><stop offset="0.68" stop-color="#990046"/><stop offset="0.94" stop-color="#990028"/><stop offset="1" stop-color="#990024"/></linearGradient><linearGradient id="c43" gradientUnits="userSpaceOnUse" x1="69" x2="605" y1="0" y2="0"><stop offset="0" stop-color="#006299"/><stop offset="0.22" stop-color="#004399"/><stop offset="0.43" stop-color="#812399"/><stop offset="0.47" stop-color="#991c97"/><stop offset="0.56" stop-color="#990869"/><stop offset="0.67" stop-color="#99004b"/><stop offset="0.93" stop-color="#99002a"/><stop offset="1" stop-color="#990026"/></linearGradient><linearGradient id="c44" gradientUnits="userSpaceOnUse" x1="71" x2="601" y1="0" y2="0"><stop offset="0" stop-color="#005e99"/><stop offset="0.23" stop-color="#004099"/><stop offset="0.47" stop-color="#981999"/><stop offset="0.57" stop-color="#99066b"/><stop offset="0.72" stop-color="#990046"/><stop offset="1" stop-color="#990028"/></linearGradient><linearGradient id="c45" gradientUnits="userSpaceOnUse" x1="73" x2="597" y1="0" y2="0"><stop offset="0" stop-color="#005a99"/><stop offset="0.23" stop-color="#013d99"/><stop offset="0.48" stop-color="#961799"/><stop offset="0.61" stop-color="#990061"/><stop offset="0.8" stop-color="#99003d"/><stop offset="1" stop-color="#99002a"/></linearGradient><linearGradient id="c46" gradientUnits="userSpaceOnUse" x1="74" x2="593" y1="0" y2="0"><stop offset="0" stop-color="#005799"/><stop offset="0.23" stop-color="#023a99"/><stop offset="0.48" stop-color="#921599"/><stop offset="0.52" stop-color="#990d89"/><stop offset="0.64" stop-color="#99005f"/><stop offset="0.83" stop-color="#99003c"/><stop offset="1" stop-color="#99002c"/></linearGradient><linearGradient id="c47" gradientUnits="userSpaceOnUse" x1="76" x2="589" y1="0" y2="0"><stop offset="0" stop-color="#005399"/><stop offset="0.23" stop-color="#033699"/><stop offset="0.51" stop-color="#990f96"/><stop offset="0.62" stop-color="#990066"/><stop offset="0.82" stop-color="#990040"/><stop offset="1" stop-color="#99002e"/></linearGradient><linearGradient id="c48" gradientUnits="userSpaceOnUse" x1="78" x2="585" y1="0" y2="0"><stop offset="0" stop-color="#005099"/><stop offset="0.24" stop-color="#043499"/><stop offset="0.51" stop-color="#990d99"/><stop offset="0.61" stop-color="#99006e"/><stop offset="0.79" stop-color="#990047"/><stop offset="1" stop-color="#990030"/></linearGradient><linearGradient id="c49" gradientUnits="userSpaceOnUse" x1="80" x2="581" y1="0" y2="0"><stop offset="0" stop-color="#004d99"/><stop offset="0.22" stop-color="#003399"/><stop offset="0.32" stop-color="#2d2799"/><stop offset="0.52" stop-color="#970b99"/><stop offset="0.64" stop-color="#99006a"/><stop offset="0.84" stop-color="#990043"/><stop offset="1" stop-color="#990032"/></linearGradient><linearGradient id="c50" gradientUnits="userSpaceOnUse" x1="82" x2="577" y1="0" y2="0"><stop offset="0" stop-color="#004a99"/><stop offset="0.22" stop-color="#003099"/><stop offset="0.46" stop-color="#741199"/><stop offset="0.53" stop-color="#950999"/><stop offset="0.63" stop-color="#990072"/><stop offset="0.81" stop-color="#99004a"/><stop offset="1" stop-color="#990034"/></linearGradient><linearGradient id="c51" gradientUnits="userSpaceOnUse" x1="84" x2="573" y1="0" y2="0"><stop offset="0" stop-color="#004799"/><stop offset="0.22" stop-color="#002e99"/><stop offset="0.51" stop-color="#880a99"/><stop offset="0.55" stop-color="#990495"/><stop offset="0.67" stop-color="#990068"/><stop offset="0.88" stop-color="#990043"/><stop offset="1" stop-color="#990037"/></linearGradient><linearGradient id="c52" gradientUnits="userSpaceOnUse" x1="86" x2="570" y1="0" y2="0"><stop offset="0" stop-color="#004499"/><stop offset="0.23" stop-color="#002b99"/><stop offset="0.56" stop-color="#990297"/><stop offset="0.68" stop-color="#99006a"/><stop offset="0.89" stop-color="#990045"/><stop offset="1" stop-color="#990039"/></linearGradient><linearGradient id="c53" gradientUnits="userSpaceOnUse" x1="88" x2="566" y1="0" y2="0"><stop offset="0" stop-color="#004199"/><stop offset="0.23" stop-color="#012999"/><stop offset="0.56" stop-color="#990199"/><stop offset="0.69" stop-color="#99006c"/><stop offset="0.9" stop-color="#990046"/><stop offset="1" stop-color="#99003b"/></linearGradient><linearGradient id="c54" gradientUnits="userSpaceOnUse" x1="90" x2="562" y1="0" y2="0"><stop offset="0" stop-color="#003f99"/><stop offset="0.23" stop-color="#022799"/><stop offset="0.57" stop-color="#970099"/><stop offset="0.72" stop-color="#990068"/><stop offset="0.97" stop-color="#990040"/><stop offset="1" stop-color="#99003e"/></linearGradient><linearGradient id="c55" gradientUnits="userSpaceOnUse" x1="93" x2="558" y1="0" y2="0"><stop offset="0" stop-color="#003c99"/><stop offset="0.24" stop-color="#042499"/><stop offset="0.58" stop-color="#960099"/><stop offset="0.75" stop-color="#990065"/><stop offset="1" stop-color="#990040"/></linearGradient><linearGradient id="c56" gradientUnits="userSpaceOnUse" x1="95" x2="554" y1="0" y2="0"><stop offset="0" stop-color="#003999"/><stop offset="0.22" stop-color="#002499"/><stop offset="0.52" stop-color="#770399"/><stop offset="0.61" stop-color="#990095"/><stop offset="0.76" stop-color="#990066"/><stop offset="1" stop-color="#990043"/></linearGradient><linearGradient id="c57" gradientUnits="userSpaceOnUse" x1="97" x2="550" y1="0" y2="0"><stop offset="0" stop-color="#003799"/><stop offset="0.22" stop-color="#002299"/><stop offset="0.55" stop-color="#7f0099"/><stop offset="0.62" stop-color="#990097"/><stop offset="0.75" stop-color="#99006d"/><stop offset="0.99" stop-color="#990046"/><stop offset="1" stop-color="#990046"/></linearGradient><linearGradient id="c58" gradientUnits="userSpaceOnUse" x1="99" x2="546" y1="0" y2="0"><stop offset="0" stop-color="#003599"/><stop offset="0.22" stop-color="#002099"/><stop offset="0.58" stop-color="#870099"/><stop offset="0.63" stop-color="#990098"/><stop offset="0.78" stop-color="#99006a"/><stop offset="1" stop-color="#990048"/></linearGradient><linearGradient id="c59" gradientUnits="userSpaceOnUse" x1="101" x2="542" y1="0" y2="0"><stop offset="0" stop-color="#003399"/><stop offset="0.23" stop-color="#001e99"/><stop offset="0.57" stop-color="#7d0099"/><stop offset="0.63" stop-color="#980099"/><stop offset="0.79" stop-color="#99006b"/><stop offset="1" stop-color="#99004b"/></linearGradient><linearGradient id="c60" gradientUnits="userSpaceOnUse" x1="104" x2="538" y1="0" y2="0"><stop offset="0" stop-color="#003099"/><stop offset="0.23" stop-color="#021c99"/><stop offset="0.58" stop-color="#7c0099"/><stop offset="0.65" stop-color="#970099"/><stop offset="0.83" stop-color="#990068"/><stop offset="1" stop-color="#99004e"/></linearGradient><linearGradient id="c61" gradientUnits="userSpaceOnUse" x1="106" x2="534" y1="0" y2="0"><stop offset="0" stop-color="#002e99"/><stop offset="0.23" stop-color="#031b99"/><stop offset="0.56" stop-color="#720099"/><stop offset="0.68" stop-color="#990094"/><stop offset="0.86" stop-color="#990065"/><stop offset="1" stop-color="#990051"/></linearGradient><linearGradient id="c62" gradientUnits="userSpaceOnUse" x1="108" x2="530" y1="0" y2="0"><stop offset="0" stop-color="#002c99"/><stop offset="0.24" stop-color="#041999"/><stop offset="0.57" stop-color="#710099"/><stop offset="0.69" stop-color="#990096"/><stop offset="0.85" stop-color="#99006b"/><stop offset="1" stop-color="#990054"/></linearGradient><linearGradient id="c63" gradientUnits="userSpaceOnUse" x1="111" x2="526" y1="0" y2="0"><stop offset="0" stop-color="#002a99"/><stop offset="0.22" stop-color="#001999"/><stop offset="0.55" stop-color="#690099"/><stop offset="0.7" stop-color="#990097"/><stop offset="0.87" stop-color="#99006c"/><stop offset="1" stop-color="#990057"/></linearGradient><linearGradient id="c64" gradientUnits="userSpaceOnUse" x1="113" x2="522" y1="0" y2="0"><stop offset="0" stop-color="#002899"/><stop offset="0.22" stop-color="#001799"/><stop offset="0.56" stop-color="#680099"/><stop offset="0.71" stop-color="#990099"/><stop offset="0.9" stop-color="#990069"/><stop offset="1" stop-color="#99005b"/></linearGradient><linearGradient id="c65" gradientUnits="userSpaceOnUse" x1="115" x2="518" y1="0" y2="0"><stop offset="0" stop-color="#002699"/><stop offset="0.22" stop-color="#001699"/><stop offset="0.55" stop-color="#600099"/><stop offset="0.72" stop-color="#970099"/><stop offset="0.94" stop-color="#990066"/><stop offset="1" stop-color="#99005e"/></linearGradient><linearGradient id="c66" gradientUnits="userSpaceOnUse" x1="118" x2="515" y1="0" y2="0"><stop offset="0" stop-color="#002599"/><stop offset="0.23" stop-color="#021499"/><stop offset="0.53" stop-color="#580099"/><stop offset="0.73" stop-color="#970099"/><stop offset="0.96" stop-color="#990067"/><stop offset="1" stop-color="#990061"/></linearGradient><linearGradient id="c67" gradientUnits="userSpaceOnUse" x1="120" x2="511" y1="0" y2="0"><stop offset="0" stop-color="#002399"/><stop offset="0.23" stop-color="#031399"/><stop offset="0.54" stop-color="#580099"/><stop offset="0.77" stop-color="#990095"/><stop offset="0.97" stop-color="#990069"/><stop offset="1" stop-color="#990065"/></linearGradient><linearGradient id="c68" gradientUnits="userSpaceOnUse" x1="123" x2="507" y1="0" y2="0"><stop offset="0" stop-color="#002199"/><stop offset="0.23" stop-color="#041199"/><stop offset="0.52" stop-color="#510099"/><stop offset="0.78" stop-color="#990096"/><stop offset="0.99" stop-color="#99006a"/><stop offset="1" stop-color="#990068"/></linearGradient><linearGradient id="c69" gradientUnits="userSpaceOnUse" x1="125" x2="503" y1="0" y2="0"><stop offset="0" stop-color="#001f99"/><stop offset="0.21" stop-color="#001199"/><stop offset="0.5" stop-color="#490099"/><stop offset="0.79" stop-color="#990098"/><stop offset="1" stop-color="#99006c"/></linearGradient><linearGradient id="c70" gradientUnits="userSpaceOnUse" x1="127" x2="499" y1="0" y2="0"><stop offset="0" stop-color="#001e99"/><stop offset="0.22" stop-color="#001099"/><stop offset="0.51" stop-color="#490099"/><stop offset="0.81" stop-color="#990099"/><stop offset="1" stop-color="#990070"/></linearGradient><linearGradient id="c71" gradientUnits="userSpaceOnUse" x1="130" x2="495" y1="0" y2="0"><stop offset="0" stop-color="#001c99"/><stop offset="0.22" stop-color="#010e99"/><stop offset="0.52" stop-color="#490099"/><stop offset="0.82" stop-color="#980099"/><stop offset="1" stop-color="#990074"/></linearGradient><linearGradient id="c72" gradientUnits="userSpaceOnUse" x1="132" x2="491" y1="0" y2="0"><stop offset="0" stop-color="#001b99"/><stop offset="0.22" stop-color="#020d99"/><stop offset="0.53" stop-color="#490099"/><stop offset="0.84" stop-color="#970099"/><stop offset="1" stop-color="#990078"/></linearGradient><linearGradient id="c73" gradientUnits="userSpaceOnUse" x1="135" x2="487" y1="0" y2="0"><stop offset="0" stop-color="#001999"/><stop offset="0.23" stop-color="#030c99"/><stop offset="0.51" stop-color="#430099"/><stop offset="0.88" stop-color="#990095"/><stop offset="1" stop-color="#99007c"/></linearGradient><linearGradient id="c74" gradientUnits="userSpaceOnUse" x1="137" x2="483" y1="0" y2="0"><stop offset="0" stop-color="#001899"/><stop offset="0.23" stop-color="#040b99"/><stop offset="0.49" stop-color="#3c0099"/><stop offset="0.9" stop-color="#990096"/><stop offset="1" stop-color="#990081"/></linearGradient><linearGradient id="c75" gradientUnits="userSpaceOnUse" x1="140" x2="479" y1="0" y2="0"><stop offset="0" stop-color="#001699"/><stop offset="0.21" stop-color="#000b99"/><stop offset="0.53" stop-color="#430099"/><stop offset="0.91" stop-color="#990097"/><stop offset="1" stop-color="#990085"/></linearGradient><linearGradient id="c76" gradientUnits="userSpaceOnUse" x1="143" x2="475" y1="0" y2="0"><stop offset="0" stop-color="#001599"/><stop offset="0.21" stop-color="#010a99"/><stop offset="0.51" stop-color="#3d0099"/><stop offset="0.93" stop-color="#990098"/><stop offset="1" stop-color="#99008a"/></linearGradient><linearGradient id="c77" gradientUnits="userSpaceOnUse" x1="145" x2="471" y1="0" y2="0"><stop offset="0" stop-color="#001499"/><stop offset="0.21" stop-color="#010899"/><stop offset="0.52" stop-color="#3d0099"/><stop offset="0.95" stop-color="#990099"/><stop offset="1" stop-color="#99008f"/></linearGradient><linearGradient id="c78" gradientUnits="userSpaceOnUse" x1="148" x2="467" y1="0" y2="0"><stop offset="0" stop-color="#001299"/><stop offset="0.22" stop-color="#030799"/><stop offset="0.56" stop-color="#440099"/><stop offset="0.97" stop-color="#980099"/><stop offset="1" stop-color="#990094"/></linearGradient><linearGradient id="c79" gradientUnits="userSpaceOnUse" x1="150" x2="463" y1="0" y2="0"><stop offset="0" stop-color="#001199"/><stop offset="0.22" stop-color="#030699"/><stop offset="0.61" stop-color="#4a0099"/><stop offset="1" stop-color="#990099"/></linearGradient><linearGradient id="c80" gradientUnits="userSpaceOnUse" x1="153" x2="460" y1="0" y2="0"><stop offset="0" stop-color="#001099"/><stop offset="0.2" stop-color="#000799"/><stop offset="0.49" stop-color="#330099"/><stop offset="1" stop-color="#940099"/></linearGradient><linearGradient id="c81" gradientUnits="userSpaceOnUse" x1="156" x2="456" y1="0" y2="0"><stop offset="0" stop-color="#000f99"/><stop offset="0.2" stop-color="#000599"/><stop offset="0.87" stop-color="#750099"/><stop offset="1" stop-color="#8f0099"/></linearGradient><linearGradient id="c82" gradientUnits="userSpaceOnUse" x1="159" x2="452" y1="0" y2="0"><stop offset="0" stop-color="#000d99"/><stop offset="0.2" stop-color="#020499"/><stop offset="1" stop-color="#8a0099"/></linearGradient><linearGradient id="c83" gradientUnits="userSpaceOnUse" x1="161" x2="448" y1="0" y2="0"><stop offset="0" stop-color="#000c99"/><stop offset="0.21" stop-color="#020399"/><stop offset="1" stop-color="#850099"/></linearGradient><linearGradient id="c84" gradientUnits="userSpaceOnUse" x1="164" x2="444" y1="0" y2="0"><stop offset="0" stop-color="#000b99"/><stop offset="0.21" stop-color="#040299"/><stop offset="1" stop-color="#800099"/></linearGradient><linearGradient id="c85" gradientUnits="userSpaceOnUse" x1="167" x2="440" y1="0" y2="0"><stop offset="0" stop-color="#000a99"/><stop offset="0.18" stop-color="#000399"/><stop offset="1" stop-color="#7c0099"/></linearGradient><linearGradient id="c86" gradientUnits="userSpaceOnUse" x1="170" x2="436" y1="0" y2="0"><stop offset="0" stop-color="#000999"/><stop offset="0.23" stop-color="#060099"/><stop offset="1" stop-color="#770099"/></linearGradient><linearGradient id="c87" gradientUnits="userSpaceOnUse" x1="173" x2="432" y1="0" y2="0"><stop offset="0" stop-color="#000899"/><stop offset="0.19" stop-color="#020099"/><stop offset="1" stop-color="#730099"/></linearGradient><linearGradient id="c88" gradientUnits="userSpaceOnUse" x1="176" x2="428" y1="0" y2="0"><stop offset="0" stop-color="#000799"/><stop offset="0.2" stop-color="#030099"/><stop offset="1" stop-color="#6f0099"/></linearGradient><linearGradient id="c89" gradientUnits="userSpaceOnUse" x1="179" x2="424" y1="0" y2="0"><stop offset="0" stop-color="#000699"/><stop offset="0.2" stop-color="#040099"/><stop offset="1" stop-color="#6b0099"/></linearGradient><linearGradient id="c90" gradientUnits="userSpaceOnUse" x1="182" x2="420" y1="0" y2="0"><stop offset="0" stop-color="#000499"/><stop offset="0.21" stop-color="#050099"/><stop offset="1" stop-color="#670099"/></linearGradient><linearGradient id="c91" gradientUnits="userSpaceOnUse" x1="185" x2="416" y1="0" y2="0"><stop offset="0" stop-color="#000399"/><stop offset="0.22" stop-color="#060099"/><stop offset="1" stop-color="#630099"/></linearGradient><linearGradient id="c92" gradientUnits="userSpaceOnUse" x1="188" x2="412" y1="0" y2="0"><stop offset="0" stop-color="#000299"/><stop offset="0.18" stop-color="#030099"/><stop offset="1" stop-color="#600099"/></linearGradient><linearGradient id="c93" gradientUnits="userSpaceOnUse" x1="192" x2="408" y1="0" y2="0"><stop offset="0" stop-color="#000199"/><stop offset="0.19" stop-color="#040099"/><stop offset="1" stop-color="#5c0099"/></linearGradient><linearGradient id="c94" gradientUnits="userSpaceOnUse" x1="195" x2="405" y1="0" y2="0"><stop offset="0" stop-color="#000099"/><stop offset="0.19" stop-color="#050099"/><stop offset="1" stop-color="#590099"/></linearGradient><linearGradient id="c95" gradientUnits="userSpaceOnUse" x1="198" x2="401" y1="0" y2="0"><stop offset="0" stop-color="#000099"/><stop offset="0.2" stop-color="#060099"/><stop offset="1" stop-color="#560099"/></linearGradient><linearGradient id="c96" gradientUnits="userSpaceOnUse" x1="202" x2="397" y1="0" y2="0"><stop offset="0" stop-color="#000099"/><stop offset="0.21" stop-color="#080099"/><stop offset="1" stop-color="#520099"/></linearGradient><linearGradient id="c97" gradientUnits="userSpaceOnUse" x1="205" x2="393" y1="0" y2="0"><stop offset="0" stop-color="#000099"/><stop offset="0.16" stop-color="#040099"/><stop offset="1" stop-color="#4f0099"/></linearGradient><linearGradient id="c98" gradientUnits="userSpaceOnUse" x1="209" x2="389" y1="0" y2="0"><stop offset="0" stop-color="#000099"/><stop offset="0.22" stop-color="#0a0099"/><stop offset="1" stop-color="#4c0099"/></linearGradient><linearGradient id="c99" gradientUnits="userSpaceOnUse" x1="212" x2="385" y1="0" y2="0"><stop offset="0" stop-color="#000099"/><stop offset="0.23" stop-color="#0b0099"/><stop offset="1" stop-color="#490099"/></linearGradient><linearGradient id="c100" gradientUnits="userSpaceOnUse" x1="216" x2="381" y1="0" y2="0"><stop offset="0" stop-color="#000099"/><stop offset="0.67" stop-color="#2c0099"/><stop offset="1" stop-color="#460099"/></linearGradient><linearGradient id="c101" gradientUnits="userSpaceOnUse" x1="220" x2="377" y1="0" y2="0"><stop offset="0" stop-color="#000099"/><stop offset="1" stop-color="#430099"/></linearGradient><linearGradient id="c102" gradientUnits="userSpaceOnUse" x1="224" x2="373" y1="0" y2="0"><stop offset="0" stop-color="#000099"/><stop offset="1" stop-color="#400099"/></linearGradient><linearGradient id="c103" gradientUnits="userSpaceOnUse" x1="228" x2="369" y1="0" y2="0"><stop offset="0" stop-color="#000099"/><stop offset="1" stop-color="#3d0099"/></linearGradient><linearGradient id="c104" gradientUnits="userSpaceOnUse" x1="233" x2="365" y1="0" y2="0"><stop offset="0" stop-color="#010099"/><stop offset="1" stop-color="#3a0099"/></linearGradient><linearGradient id="c105" gradientUnits="userSpaceOnUse" x1="237" x2="361" y1="0" y2="0"><stop offset="0" stop-color="#020099"/><stop offset="1" stop-color="#380099"/></linearGradient><linearGradient id="c106" gradientUnits="userSpaceOnUse" x1="241" x2="357" y1="0" y2="0"><stop offset="0" stop-color="#040099"/><stop offset="1" stop-color="#350099"/></linearGradient><linearGradient id="c107" gradientUnits="userSpaceOnUse" x1="246" x2="353" y1="0" y2="0"><stop offset="0" stop-color="#060099"/><stop offset="1" stop-color="#330099"/></linearGradient><linearGradient id="c108" gradientUnits="userSpaceOnUse" x1="251" x2="350" y1="0" y2="0"><stop offset="0" stop-color="#070099"/><stop offset="1" stop-color="#310099"/></linearGradient><linearGradient id="c109" gradientUnits="userSpaceOnUse" x1="256" x2="346" y1="0" y2="0"><stop offset="0" stop-color="#090099"/><stop offset="1" stop-color="#2e0099"/></linearGradient><linearGradient id="c110" gradientUnits="userSpaceOnUse" x1="260" x2="342" y1="0" y2="0"><stop offset="0" stop-color="#0a0099"/><stop offset="1" stop-color="#2c0099"/></linearGradient><linearGradient id="c111" gradientUnits="userSpaceOnUse" x1="265" x2="338" y1="0" y2="0"><stop offset="0" stop-color="#0c0099"/><stop offset="1" stop-color="#290099"/></linearGradient><linearGradient id="c112" gradientUnits="userSpaceOnUse" x1="270" x2="334" y1="0" y2="0"><stop offset="0" stop-color="#0d0099"/><stop offset="1" stop-color="#270099"/></linearGradient><linearGradient id="c113" gradientUnits="userSpaceOnUse" x1="275" x2="330" y1="0" y2="0"><stop offset="0" stop-color="#0f0099"/><stop offset="1" stop-color="#250099"/></linearGradient><linearGradient id="c114" gradientUnits="userSpaceOnUse" x1="280" x2="326" y1="0" y2="0"><stop offset="0" stop-color="#110099"/><stop offset="1" stop-color="#230099"/></linearGradient><linearGradient id="c115" gradientUnits="userSpaceOnUse" x1="285" x2="322" y1="0" y2="0"><stop offset="0" stop-color="#120099"/><stop offset="1" stop-color="#200099"/></linearGradient><linearGradient id="c116" gradientUnits="userSpaceOnUse" x1="290" x2="318" y1="0" y2="0"><stop offset="0" stop-color="#140099"/><stop offset="1" stop-color="#1e0099"/></linearGradient><linearGradient id="c117" gradientUnits="userSpaceOnUse" x1="295" x2="314" y1="0" y2="0"><stop offset="0" stop-color="#150099"/><stop offset="1" stop-color="#1c0099"/></linearGradient><linearGradient id="c118" gradientUnits="userSpaceOnUse" x1="88" x2="115" y1="0" y2="0"><stop offset="0" stop-color="#00ff00"/><stop offset="1" stop-color="#00ff00"/></linearGradient><linearGradient id="c119" gradientUnits="userSpaceOnUse" x1="89" x2="145" y1="0" y2="0"><stop offset="0" stop-color="#00ff00"/><stop offset="1" stop-color="#00ff00"/></linearGradient><linearGradient id="c120" gradientUnits="userSpaceOnUse" x1="90" x2="175" y1="0" y2="0"><stop offset="0" stop-color="#00ff00"/><stop offset="0.85" stop-color="#00ff00"/><stop offset="1" stop-color="#19ff00"/></linearGradient><linearGradient id="c121" gradientUnits="userSpaceOnUse" x1="91" x2="205" y1="0" y2="0"><stop offset="0" stop-color="#00ff00"/><stop offset="0.63" stop-color="#00ff00"/><stop offset="0.89" stop-color="#45ff00"/><stop offset="1" stop-color="#65ff00"/></linearGradient><linearGradient id="c122" gradientUnits="userSpaceOnUse" x1="92" x2="235" y1="0" y2="0"><stop offset="0" stop-color="#00ff01"/><stop offset="0.5" stop-color="#00ff00"/><stop offset="0.76" stop-color="#57ff00"/><stop offset="1" stop-color="#c2ff00"/></linearGradient><linearGradient id="c123" gradientUnits="userSpaceOnUse" x1="93" x2="265" y1="0" y2="0"><stop offset="0" stop-color="#00ff06"/><stop offset="0.42" stop-color="#00ff00"/><stop offset="0.66" stop-color="#6aff00"/><stop offset="0.87" stop-color="#deff00"/><stop offset="0.91" stop-color="#f4ff00"/><stop offset="0.94" stop-color="#fff400"/><stop offset="1" stop-color="#ffd400"/></linearGradient><linearGradient id="c124" gradientUnits="userSpaceOnUse" x1="94" x2="295" y1="0" y2="0"><stop offset="0" stop-color="#00ff0c"/><stop offset="0.36" stop-color="#00ff00"/><stop offset="0.57" stop-color="#6dff00"/><stop offset="0.75" stop-color="#e3ff00"/><stop offset="0.78" stop-color="#f9ff00"/><stop offset="0.87" stop-color="#ffca00"/><stop offset="1" stop-color="#ff9000"/></linearGradient><linearGradient id="c125" gradientUnits="userSpaceOnUse" x1="94" x2="325" y1="0" y2="0"><stop offset="0" stop-color="#00ff12"/><stop offset="0.31" stop-color="#00ff07"/><stop offset="0.47" stop-color="#5bff00"/><stop offset="0.62" stop-color="#ceff00"/><stop offset="0.68" stop-color="#faff00"/><stop offset="0.78" stop-color="#ffb900"/><stop offset="0.91" stop-color="#ff8100"/><stop offset="1" stop-color="#ff6600"/></linearGradient><linearGradient id="c126" gradientUnits="userSpaceOnUse" x1="95" x2="355" y1="0" y2="0"><stop offset="0" stop-color="#00ff18"/><stop offset="0.28" stop-color="#00ff0e"/><stop offset="0.44" stop-color="#6fff06"/><stop offset="0.58" stop-color="#e8ff00"/><stop offset="0.6" stop-color="#ffff00"/><stop offset="0.67" stop-color="#ffc500"/><stop offset="0.76" stop-color="#ff9100"/><stop offset="0.9" stop-color="#ff6100"/><stop offset="1" stop-color="#ff4900"/></linearGradient><linearGradient id="c127" gradientUnits="userSpaceOnUse" x1="96" x2="385" y1="0" y2="0"><stop offset="0" stop-color="#00ff1e"/><stop offset="0.25" stop-color="#01ff15"/><stop offset="0.39" stop-color="#72ff0e"/><stop offset="0.52" stop-color="#edff06"/><stop offset="0.54" stop-color="#fffa04"/><stop offset="0.62" stop-color="#ffb200"/><stop offset="0.73" stop-color="#ff7c00"/><stop offset="0.87" stop-color="#ff4e00"/><stop offset="1" stop-color="#ff3400"/></linearGradient><linearGradient id="c128" gradientUnits="userSpaceOnUse" x1="97" x2="415" y1="0" y2="0"><stop offset="0" stop-color="#00ff24"/><stop offset="0.23" stop-color="#02ff1c"/><stop offset="0.36" stop-color="#75ff16"/><stop offset="0.47" stop-color="#f2ff0f"/><stop offset="0.49" stop-color="#fff50d"/><stop offset="0.55" stop-color="#ffbd07"/><stop offset="0.64" stop-color="#ff8200"/><stop offset="0.77" stop-color="#ff5100"/><stop offset="0.96" stop-color="#ff2900"/><stop offset="1" stop-color="#ff2400"/></linearGradient><linearGradient id="c129" gradientUnits="userSpaceOnUse" x1="98" x2="445" y1="0" y2="0"><stop offset="0" stop-color="#00ff2b"/><stop offset="0.21" stop-color="#03ff24"/><stop offset="0.33" stop-color="#78ff1e"/><stop offset="0.41" stop-color="#dfff19"/><stop offset="0.43" stop-color="#f7ff18"/><stop offset="0.47" stop-color="#ffdb13"/><stop offset="0.54" stop-color="#ff9e0a"/><stop offset="0.64" stop-color="#ff6703"/><stop offset="0.81" stop-color="#ff3500"/><stop offset="1" stop-color="#ff1700"/></linearGradient><linearGradient id="c130" gradientUnits="userSpaceOnUse" x1="99" x2="475" y1="0" y2="0"><stop offset="0" stop-color="#00ff31"/><stop offset="0.19" stop-color="#04ff2b"/><stop offset="0.3" stop-color="#7aff27"/><stop offset="0.4" stop-color="#fcff22"/><stop offset="0.46" stop-color="#ffb515"/><stop offset="0.54" stop-color="#ff7c0b"/><stop offset="0.67" stop-color="#ff4803"/><stop offset="0.86" stop-color="#ff1f00"/><stop offset="1" stop-color="#ff0d00"/></linearGradient><linearGradient id="c131" gradientUnits="userSpaceOnUse" x1="100" x2="504" y1="0" y2="0"><stop offset="0" stop-color="#00ff37"/><stop offset="0.16" stop-color="#00ff34"/><stop offset="0.18" stop-color="#06ff33"/><stop offset="0.28" stop-color="#7dff30"/><stop offset="0.37" stop-color="#fffd2b"/><stop offset="0.42" stop-color="#ffc11f"/><stop offset="0.48" stop-color="#ff8d15"/><stop offset="0.56" stop-color="#ff5c0b"/><stop offset="0.71" stop-color="#ff2e02"/><stop offset="0.98" stop-color="#ff0700"/><stop offset="1" stop-color="#ff0500"/></linearGradient><linearGradient id="c132" gradientUnits="userSpaceOnUse" x1="101" x2="534" y1="0" y2="0"><stop offset="0" stop-color="#00ff3e"/><stop offset="0.15" stop-color="#00ff3b"/><stop offset="0.18" stop-color="#16ff3b"/><stop offset="0.26" stop-color="#80ff39"/><stop offset="0.33" stop-color="#eeff36"/><stop offset="0.35" stop-color="#fff834"/><stop offset="0.39" stop-color="#ffbd27"/><stop offset="0.44" stop-color="#ff8a1b"/><stop offset="0.53" stop-color="#ff5a10"/><stop offset="0.67" stop-color="#ff2d05"/><stop offset="0.9" stop-color="#ff0700"/><stop offset="1" stop-color="#ff0000"/></linearGradient><linearGradient id="c133" gradientUnits="userSpaceOnUse" x1="102" x2="564" y1="0" y2="0"><stop offset="0" stop-color="#00ff45"/><stop offset="0.14" stop-color="#00ff43"/><stop offset="0.17" stop-color="#18ff43"/><stop offset="0.25" stop-color="#84ff42"/><stop offset="0.31" stop-color="#f3ff41"/><stop offset="0.32" stop-color="#fff23d"/><stop offset="0.38" stop-color="#ffaa2a"/><stop offset="0.44" stop-color="#ff741c"/><stop offset="0.55" stop-color="#ff420f"/><stop offset="0.7" stop-color="#ff1b04"/><stop offset="0.92" stop-color="#ff0000"/><stop offset="1" stop-color="#ff0000"/></linearGradient><linearGradient id="c134" gradientUnits="userSpaceOnUse" x1="103" x2="594" y1="0" y2="0"><stop offset="0" stop-color="#00ff4c"/><stop offset="0.13" stop-color="#00ff4c"/><stop offset="0.16" stop-color="#19ff4c"/><stop offset="0.23" stop-color="#87ff4b"/><stop offset="0.29" stop-color="#f8ff4b"/><stop offset="0.32" stop-color="#ffd840"/><stop offset="0.37" stop-color="#ff9a2d"/><stop offset="0.44" stop-color="#ff621d"/><stop offset="0.55" stop-color="#ff340f"/><stop offset="0.75" stop-color="#ff0c03"/><stop offset="0.89" stop-color="#ff0000"/><stop offset="1" stop-color="#ff0000"/></linearGradient><linearGradient id="c135" gradientUnits="userSpaceOnUse" x1="104" x2="624" y1="0" y2="0"><stop offset="0" stop-color="#00ff53"/><stop offset="0.13" stop-color="#00ff54"/><stop offset="0.16" stop-color="#2cff55"/><stop offset="0.23" stop-color="#9fff55"/><stop offset="0.28" stop-color="#feff56"/><stop offset="0.31" stop-color="#ffc142"/><stop offset="0.36" stop-color="#ff8b30"/><stop offset="0.44" stop-color="#ff531e"/><stop offset="0.55" stop-color="#ff280f"/><stop offset="0.78" stop-color="#ff0002"/><stop offset="1" stop-color="#ff0000"/></linearGradient><linearGradient id="c136" gradientUnits="userSpaceOnUse" x1="105" x2="632" y1="0" y2="0"><stop offset="0" stop-color="#00ff5a"/><stop offset="0.13" stop-color="#00ff5d"/><stop offset="0.17" stop-color="#3fff5e"/><stop offset="0.24" stop-color="#baff60"/><stop offset="0.27" stop-color="#fffa60"/><stop offset="0.31" stop-color="#ffbd49"/><stop offset="0.35" stop-color="#ff8836"/><stop offset="0.42" stop-color="#ff5724"/><stop offset="0.54" stop-color="#ff2a14"/><stop offset="0.74" stop-color="#ff0306"/><stop offset="1" stop-color="#ff0000"/></linearGradient><linearGradient id="c137" gradientUnits="userSpaceOnUse" x1="106" x2="630" y1="0" y2="0"><stop offset="0" stop-color="#00ff62"/><stop offset="0.13" stop-color="#00ff66"/><stop offset="0.18" stop-color="#54ff68"/><stop offset="0.25" stop-color="#d6ff6c"/><stop offset="0.26" stop-color="#efff6c"/><stop offset="0.27" stop-color="#fff569"/><stop offset="0.31" stop-color="#ffb951"/><stop offset="0.35" stop-color="#ff853c"/><stop offset="0.42" stop-color="#ff5529"/><stop offset="0.54" stop-color="#ff2917"/><stop offset="0.74" stop-color="#ff0208"/><stop offset="1" stop-color="#ff0000"/></linearGradient><linearGradient id="c138" gradientUnits="userSpaceOnUse" x1="107" x2="625" y1="0" y2="0"><stop offset="0" stop-color="#00ff69"/><stop offset="0.13" stop-color="#00ff6f"/><stop offset="0.2" stop-color="#6bff73"/><stop offset="0.25" stop-color="#dbff77"/><stop offset="0.27" stop-color="#f5ff78"/><stop offset="0.28" stop-color="#ffef72"/><stop offset="0.31" stop-color="#ffb558"/><stop offset="0.36" stop-color="#ff8242"/><stop offset="0.43" stop-color="#ff532e"/><stop offset="0.54" stop-color="#ff271b"/><stop offset="0.75" stop-color="#ff010a"/><stop offset="1" stop-color="#ff0001"/></linearGradient><linearGradient id="c139" gradientUnits="userSpaceOnUse" x1="108" x2="621" y1="0" y2="0"><stop offset="0" stop-color="#00ff71"/><stop offset="0.13" stop-color="#00ff78"/><stop offset="0.2" stop-color="#6eff7d"/><stop offset="0.26" stop-color="#e0ff83"/><stop offset="0.27" stop-color="#faff84"/><stop offset="0.32" stop-color="#ffb060"/><stop offset="0.37" stop-color="#ff7544"/><stop offset="0.46" stop-color="#ff452d"/><stop offset="0.6" stop-color="#ff1a19"/><stop offset="0.78" stop-color="#ff000b"/><stop offset="1" stop-color="#ff0003"/></linearGradient><linearGradient id="c140" gradientUnits="userSpaceOnUse" x1="109" x2="617" y1="0" y2="0"><stop offset="0" stop-color="#00ff79"/><stop offset="0.13" stop-color="#01ff82"/><stop offset="0.21" stop-color="#86ff8a"/><stop offset="0.27" stop-color="#fffe90"/><stop offset="0.31" stop-color="#ffbd6f"/><stop offset="0.35" stop-color="#ff8653"/><stop offset="0.44" stop-color="#ff4e37"/><stop offset="0.58" stop-color="#ff1e1f"/><stop offset="0.77" stop-color="#ff000f"/><stop offset="1" stop-color="#ff0005"/></linearGradient><linearGradient id="c141" gradientUnits="userSpaceOnUse" x1="110" x2="613" y1="0" y2="0"><stop offset="0" stop-color="#00ff81"/><stop offset="0.13" stop-color="#03ff8b"/><stop offset="0.2" stop-color="#74ff93"/><stop offset="0.26" stop-color="#ebff9c"/><stop offset="0.27" stop-color="#fff899"/><stop offset="0.31" stop-color="#ffb877"/><stop offset="0.36" stop-color="#ff8259"/><stop offset="0.43" stop-color="#ff523f"/><stop offset="0.55" stop-color="#ff2627"/><stop offset="0.75" stop-color="#ff0113"/><stop offset="1" stop-color="#ff0007"/></linearGradient><linearGradient id="c142" gradientUnits="userSpaceOnUse" x1="111" x2="608" y1="0" y2="0"><stop offset="0" stop-color="#00ff89"/><stop offset="0.13" stop-color="#04ff96"/><stop offset="0.21" stop-color="#77ff9f"/><stop offset="0.27" stop-color="#f1ffa9"/><stop offset="0.28" stop-color="#fff2a3"/><stop offset="0.31" stop-color="#ffb47e"/><stop offset="0.36" stop-color="#ff7f5f"/><stop offset="0.43" stop-color="#ff5043"/><stop offset="0.56" stop-color="#ff242a"/><stop offset="0.77" stop-color="#ff0014"/><stop offset="1" stop-color="#ff0009"/></linearGradient><linearGradient id="c143" gradientUnits="userSpaceOnUse" x1="111" x2="604" y1="0" y2="0"><stop offset="0" stop-color="#00ff91"/><stop offset="0.13" stop-color="#03ffa0"/><stop offset="0.21" stop-color="#77ffaa"/><stop offset="0.27" stop-color="#f2ffb6"/><stop offset="0.28" stop-color="#fff1ae"/><stop offset="0.32" stop-color="#ffb287"/><stop offset="0.37" stop-color="#ff7e66"/><stop offset="0.44" stop-color="#ff4e49"/><stop offset="0.56" stop-color="#ff232e"/><stop offset="0.77" stop-color="#ff0018"/><stop offset="1" stop-color="#ff000b"/></linearGradient><linearGradient id="c144" gradientUnits="userSpaceOnUse" x1="112" x2="600" y1="0" y2="0"><stop offset="0" stop-color="#00ff9a"/><stop offset="0.14" stop-color="#04ffaa"/><stop offset="0.21" stop-color="#7affb7"/><stop offset="0.27" stop-color="#f8ffc4"/><stop offset="0.3" stop-color="#ffd4a8"/><stop offset="0.33" stop-color="#ff9f85"/><stop offset="0.39" stop-color="#ff6860"/><stop offset="0.49" stop-color="#ff3840"/><stop offset="0.66" stop-color="#ff0e24"/><stop offset="0.8" stop-color="#ff0018"/><stop offset="1" stop-color="#ff000d"/></linearGradient><linearGradient id="c145" gradientUnits="userSpaceOnUse" x1="113" x2="595" y1="0" y2="0"><stop offset="0" stop-color="#00ffa2"/><stop offset="0.12" stop-color="#00ffb3"/><stop offset="0.14" stop-color="#06ffb5"/><stop offset="0.21" stop-color="#7effc3"/><stop offset="0.26" stop-color="#e2ffcf"/><stop offset="0.27" stop-color="#feffd2"/><stop offset="0.31" stop-color="#ffbba2"/><stop offset="0.36" stop-color="#ff827a"/><stop offset="0.44" stop-color="#ff5056"/><stop offset="0.56" stop-color="#ff2337"/><stop offset="0.77" stop-color="#ff001d"/><stop offset="1" stop-color="#ff0010"/></linearGradient><linearGradient id="c146" gradientUnits="userSpaceOnUse" x1="114" x2="591" y1="0" y2="0"><stop offset="0" stop-color="#00ffab"/><stop offset="0.13" stop-color="#00ffbe"/><stop offset="0.14" stop-color="#07ffc0"/><stop offset="0.21" stop-color="#81ffd0"/><stop offset="0.28" stop-color="#fffadd"/><stop offset="0.31" stop-color="#ffb6aa"/><stop offset="0.36" stop-color="#ff7f80"/><stop offset="0.44" stop-color="#ff4d5b"/><stop offset="0.57" stop-color="#ff223a"/><stop offset="0.75" stop-color="#ff0122"/><stop offset="1" stop-color="#ff0012"/></linearGradient><linearGradient id="c147" gradientUnits="userSpaceOnUse" x1="115" x2="587" y1="0" y2="0"><stop offset="0" stop-color="#00ffb5"/><stop offset="0.13" stop-color="#00ffc9"/><stop offset="0.14" stop-color="#09ffcc"/><stop offset="0.22" stop-color="#85ffde"/><stop offset="0.27" stop-color="#edffec"/><stop offset="0.28" stop-color="#fff4e6"/><stop offset="0.32" stop-color="#ffb2b2"/><stop offset="0.37" stop-color="#ff7b86"/><stop offset="0.44" stop-color="#ff4b60"/><stop offset="0.57" stop-color="#ff203e"/><stop offset="0.78" stop-color="#ff0023"/><stop offset="1" stop-color="#ff0014"/></linearGradient><linearGradient id="c148" gradientUnits="userSpaceOnUse" x1="116" x2="583" y1="0" y2="0"><stop offset="0" stop-color="#00ffbe"/><stop offset="0.13" stop-color="#00ffd5"/><stop offset="0.14" stop-color="#0affd8"/><stop offset="0.21" stop-color="#71ffe8"/><stop offset="0.27" stop-color="#f4fffc"/><stop offset="0.28" stop-color="#ffeeef"/><stop offset="0.32" stop-color="#ffadb9"/><stop offset="0.37" stop-color="#ff788c"/><stop offset="0.45" stop-color="#ff4965"/><stop offset="0.58" stop-color="#ff1e41"/><stop offset="0.77" stop-color="#ff0027"/><stop offset="1" stop-color="#ff0017"/></linearGradient><linearGradient id="c149" gradientUnits="userSpaceOnUse" x1="117" x2="578" y1="0" y2="0"><stop offset="0" stop-color="#00ffc8"/><stop offset="0.13" stop-color="#00ffe1"/><stop offset="0.16" stop-color="#1fffe7"/><stop offset="0.22" stop-color="#8dfffa"/><stop offset="0.27" stop-color="#eef3ff"/><stop offset="0.29" stop-color="#ffe7f8"/><stop offset="0.33" stop-color="#ffa9c1"/><stop offset="0.38" stop-color="#ff7592"/><stop offset="0.46" stop-color="#ff4669"/><stop offset="0.6" stop-color="#ff1a42"/><stop offset="0.78" stop-color="#ff0029"/><stop offset="1" stop-color="#ff0019"/></linearGradient><linearGradient id="c150" gradientUnits="userSpaceOnUse" x1="118" x2="574" y1="0" y2="0"><stop offset="0" stop-color="#00ffd1"/><stop offset="0.13" stop-color="#00ffed"/><stop offset="0.16" stop-color="#21fff4"/><stop offset="0.21" stop-color="#76faff"/><stop offset="0.29" stop-color="#fde0ff"/><stop offset="0.33" stop-color="#ffa5c8"/><stop offset="0.38" stop-color="#ff7299"/><stop offset="0.46" stop-color="#ff446e"/><stop offset="0.59" stop-color="#ff1b48"/><stop offset="0.78" stop-color="#ff002d"/><stop offset="1" stop-color="#ff001c"/></linearGradient><linearGradient id="c151" gradientUnits="userSpaceOnUse" x1="119" x2="570" y1="0" y2="0"><stop offset="0" stop-color="#00ffdb"/><stop offset="0.13" stop-color="#00fffa"/><stop offset="0.2" stop-color="#5ff1ff"/><stop offset="0.29" stop-color="#f5d3ff"/><stop offset="0.31" stop-color="#ffc5f3"/><stop offset="0.35" stop-color="#ff91c1"/><stop offset="0.41" stop-color="#ff5d8d"/><stop offset="0.51" stop-color="#ff3364"/><stop offset="0.68" stop-color="#ff0b3d"/><stop offset="0.8" stop-color="#ff002e"/><stop offset="1" stop-color="#ff001e"/></linearGradient><linearGradient id="c152" gradientUnits="userSpaceOnUse" x1="120" x2="566" y1="0" y2="0"><stop offset="0" stop-color="#00ffe6"/><stop offset="0.12" stop-color="#00fbff"/><stop offset="0.13" stop-color="#00f8ff"/><stop offset="0.24" stop-color="#99d8ff"/><stop offset="0.31" stop-color="#ffc0fb"/><stop offset="0.35" stop-color="#ff8dc8"/><stop offset="0.42" stop-color="#ff5a92"/><stop offset="0.51" stop-color="#ff3168"/><stop offset="0.69" stop-color="#ff0a40"/><stop offset="0.82" stop-color="#ff002f"/><stop offset="1" stop-color="#ff0021"/></linearGradient><linearGradient id="c153" gradientUnits="userSpaceOnUse" x1="121" x2="561" y1="0" y2="0"><stop offset="0" stop-color="#00fff0"/><stop offset="0.08" stop-color="#00faff"/><stop offset="0.14" stop-color="#00ecff"/><stop offset="0.29" stop-color="#d1c0ff"/><stop offset="0.31" stop-color="#fbb7ff"/><stop offset="0.37" stop-color="#ff7dc1"/><stop offset="0.44" stop-color="#ff5090"/><stop offset="0.55" stop-color="#ff2764"/><stop offset="0.71" stop-color="#ff0741"/><stop offset="0.83" stop-color="#ff0031"/><stop offset="1" stop-color="#ff0023"/></linearGradient><linearGradient id="c154" gradientUnits="userSpaceOnUse" x1="122" x2="557" y1="0" y2="0"><stop offset="0" stop-color="#00fffb"/><stop offset="0.14" stop-color="#01e0ff"/><stop offset="0.29" stop-color="#cbb5ff"/><stop offset="0.32" stop-color="#f3adff"/><stop offset="0.33" stop-color="#ffa3f7"/><stop offset="0.39" stop-color="#ff6fbb"/><stop offset="0.47" stop-color="#ff4187"/><stop offset="0.59" stop-color="#ff1b5c"/><stop offset="0.77" stop-color="#ff003c"/><stop offset="1" stop-color="#ff0026"/></linearGradient><linearGradient id="c155" gradientUnits="userSpaceOnUse" x1="123" x2="553" y1="0" y2="0"><stop offset="0" stop-color="#00f8ff"/><stop offset="0.14" stop-color="#02d6ff"/><stop offset="0.32" stop-color="#eca3ff"/><stop offset="0.33" stop-color="#ff9ffe"/><stop offset="0.39" stop-color="#ff6bc1"/><stop offset="0.46" stop-color="#ff4493"/><stop offset="0.57" stop-color="#ff2067"/><stop offset="0.77" stop-color="#ff0040"/><stop offset="1" stop-color="#ff0029"/></linearGradient><linearGradient id="c156" gradientUnits="userSpaceOnUse" x1="124" x2="549" y1="0" y2="0"><stop offset="0" stop-color="#00eeff"/><stop offset="0.14" stop-color="#03ccff"/><stop offset="0.31" stop-color="#d39fff"/><stop offset="0.34" stop-color="#f996ff"/><stop offset="0.38" stop-color="#ff72d4"/><stop offset="0.45" stop-color="#ff489f"/><stop offset="0.56" stop-color="#ff216f"/><stop offset="0.76" stop-color="#ff0045"/><stop offset="1" stop-color="#ff002c"/></linearGradient><linearGradient id="c157" gradientUnits="userSpaceOnUse" x1="125" x2="544" y1="0" y2="0"><stop offset="0" stop-color="#00e4ff"/><stop offset="0.14" stop-color="#04c3ff"/><stop offset="0.32" stop-color="#ce96ff"/><stop offset="0.36" stop-color="#ff87fa"/><stop offset="0.42" stop-color="#ff5cc1"/><stop offset="0.5" stop-color="#ff358e"/><stop offset="0.64" stop-color="#ff115f"/><stop offset="0.79" stop-color="#ff0045"/><stop offset="1" stop-color="#ff002f"/></linearGradient><linearGradient id="c158" gradientUnits="userSpaceOnUse" x1="126" x2="540" y1="0" y2="0"><stop offset="0" stop-color="#00dbff"/><stop offset="0.13" stop-color="#00beff"/><stop offset="0.14" stop-color="#05baff"/><stop offset="0.33" stop-color="#da8aff"/><stop offset="0.36" stop-color="#fe82ff"/><stop offset="0.42" stop-color="#ff59c7"/><stop offset="0.51" stop-color="#ff3293"/><stop offset="0.64" stop-color="#ff1266"/><stop offset="0.78" stop-color="#ff004a"/><stop offset="1" stop-color="#ff0032"/></linearGradient><linearGradient id="c159" gradientUnits="userSpaceOnUse" x1="127" x2="536" y1="0" y2="0"><stop offset="0" stop-color="#00d2ff"/><stop offset="0.13" stop-color="#00b5ff"/><stop offset="0.15" stop-color="#06b2ff"/><stop offset="0.35" stop-color="#e67fff"/><stop offset="0.37" stop-color="#f77bff"/><stop offset="0.4" stop-color="#ff68e6"/><stop offset="0.47" stop-color="#ff40ae"/><stop offset="0.59" stop-color="#ff1c7a"/><stop offset="0.76" stop-color="#ff0052"/><stop offset="1" stop-color="#ff0035"/></linearGradient><linearGradient id="c160" gradientUnits="userSpaceOnUse" x1="128" x2="531" y1="0" y2="0"><stop offset="0" stop-color="#00caff"/><stop offset="0.13" stop-color="#00adff"/><stop offset="0.16" stop-color="#16a7ff"/><stop offset="0.36" stop-color="#e078ff"/><stop offset="0.39" stop-color="#ff6ffc"/><stop offset="0.45" stop-color="#ff4bc7"/><stop offset="0.54" stop-color="#ff2a95"/><stop offset="0.67" stop-color="#ff0c69"/><stop offset="0.8" stop-color="#ff0050"/><stop offset="1" stop-color="#ff0038"/></linearGradient><linearGradient id="c161" gradientUnits="userSpaceOnUse" x1="128" x2="527" y1="0" y2="0"><stop offset="0" stop-color="#00c2ff"/><stop offset="0.14" stop-color="#00a7ff"/><stop offset="0.17" stop-color="#14a0ff"/><stop offset="0.36" stop-color="#d872ff"/><stop offset="0.39" stop-color="#f96bff"/><stop offset="0.44" stop-color="#ff51d9"/><stop offset="0.53" stop-color="#ff2da1"/><stop offset="0.66" stop-color="#ff0e71"/><stop offset="0.8" stop-color="#ff0055"/><stop offset="1" stop-color="#ff003c"/></linearGradient><linearGradient id="c162" gradientUnits="userSpaceOnUse" x1="129" x2="523" y1="0" y2="0"><stop offset="0" stop-color="#00bbff"/><stop offset="0.14" stop-color="#00a0ff"/><stop offset="0.17" stop-color="#1599ff"/><stop offset="0.38" stop-color="#e369ff"/><stop offset="0.41" stop-color="#ff60fb"/><stop offset="0.49" stop-color="#ff3abe"/><stop offset="0.59" stop-color="#ff1b8c"/><stop offset="0.76" stop-color="#ff0060"/><stop offset="1" stop-color="#ff003f"/></linearGradient><linearGradient id="c163" gradientUnits="userSpaceOnUse" x1="130" x2="519" y1="0" y2="0"><stop offset="0" stop-color="#00b4ff"/><stop offset="0.14" stop-color="#0099ff"/><stop offset="0.2" stop-color="#308cff"/><stop offset="0.42" stop-color="#fd5cff"/><stop offset="0.49" stop-color="#ff38c3"/><stop offset="0.6" stop-color="#ff1990"/><stop offset="0.77" stop-color="#ff0063"/><stop offset="1" stop-color="#ff0042"/></linearGradient><linearGradient id="c164" gradientUnits="userSpaceOnUse" x1="131" x2="514" y1="0" y2="0"><stop offset="0" stop-color="#00adff"/><stop offset="0.14" stop-color="#0093ff"/><stop offset="0.3" stop-color="#8272ff"/><stop offset="0.42" stop-color="#f756ff"/><stop offset="0.45" stop-color="#ff48ea"/><stop offset="0.55" stop-color="#ff26ae"/><stop offset="0.67" stop-color="#ff0c7f"/><stop offset="0.8" stop-color="#ff0063"/><stop offset="1" stop-color="#ff0046"/></linearGradient><linearGradient id="c165" gradientUnits="userSpaceOnUse" x1="132" x2="510" y1="0" y2="0"><stop offset="0" stop-color="#00a7ff"/><stop offset="0.14" stop-color="#008cff"/><stop offset="0.33" stop-color="#9c66ff"/><stop offset="0.44" stop-color="#ff4dfd"/><stop offset="0.52" stop-color="#ff2dc3"/><stop offset="0.65" stop-color="#ff0f8c"/><stop offset="0.79" stop-color="#ff0068"/><stop offset="1" stop-color="#ff004a"/></linearGradient><linearGradient id="c166" gradientUnits="userSpaceOnUse" x1="133" x2="506" y1="0" y2="0"><stop offset="0" stop-color="#00a1ff"/><stop offset="0.14" stop-color="#0087ff"/><stop offset="0.34" stop-color="#9961ff"/><stop offset="0.45" stop-color="#fb49ff"/><stop offset="0.55" stop-color="#ff26bf"/><stop offset="0.68" stop-color="#ff0b8b"/><stop offset="0.79" stop-color="#ff006e"/><stop offset="1" stop-color="#ff004e"/></linearGradient><linearGradient id="c167" gradientUnits="userSpaceOnUse" x1="134" x2="502" y1="0" y2="0"><stop offset="0" stop-color="#009bff"/><stop offset="0.15" stop-color="#0081ff"/><stop offset="0.38" stop-color="#b156ff"/><stop offset="0.46" stop-color="#f645ff"/><stop offset="0.47" stop-color="#ff40fa"/><stop offset="0.55" stop-color="#ff24c3"/><stop offset="0.68" stop-color="#ff0a8e"/><stop offset="0.82" stop-color="#ff006e"/><stop offset="1" stop-color="#ff0051"/></linearGradient><linearGradient id="c168" gradientUnits="userSpaceOnUse" x1="135" x2="497" y1="0" y2="0"><stop offset="0" stop-color="#0095ff"/><stop offset="0.15" stop-color="#007cff"/><stop offset="0.4" stop-color="#bb4eff"/><stop offset="0.48" stop-color="#ff3dff"/><stop offset="0.58" stop-color="#ff1ebf"/><stop offset="0.71" stop-color="#ff068d"/><stop offset="0.86" stop-color="#ff006b"/><stop offset="1" stop-color="#ff0056"/></linearGradient><linearGradient id="c169" gradientUnits="userSpaceOnUse" x1="136" x2="493" y1="0" y2="0"><stop offset="0" stop-color="#0090ff"/><stop offset="0.15" stop-color="#0177ff"/><stop offset="0.42" stop-color="#c546ff"/><stop offset="0.49" stop-color="#fa39ff"/><stop offset="0.57" stop-color="#ff20cc"/><stop offset="0.71" stop-color="#ff0695"/><stop offset="0.86" stop-color="#ff0070"/><stop offset="1" stop-color="#ff005a"/></linearGradient><linearGradient id="c170" gradientUnits="userSpaceOnUse" x1="137" x2="489" y1="0" y2="0"><stop offset="0" stop-color="#008bff"/><stop offset="0.15" stop-color="#0272ff"/><stop offset="0.44" stop-color="#ce3fff"/><stop offset="0.51" stop-color="#ff31fc"/><stop offset="0.61" stop-color="#ff16bf"/><stop offset="0.77" stop-color="#ff008a"/><stop offset="1" stop-color="#ff005e"/></linearGradient><linearGradient id="c171" gradientUnits="userSpaceOnUse" x1="138" x2="484" y1="0" y2="0"><stop offset="0" stop-color="#0086ff"/><stop offset="0.16" stop-color="#026eff"/><stop offset="0.47" stop-color="#d738ff"/><stop offset="0.52" stop-color="#fd2eff"/><stop offset="0.62" stop-color="#ff14c3"/><stop offset="0.78" stop-color="#ff008d"/><stop offset="1" stop-color="#ff0063"/></linearGradient><linearGradient id="c172" gradientUnits="userSpaceOnUse" x1="139" x2="480" y1="0" y2="0"><stop offset="0" stop-color="#0081ff"/><stop offset="0.16" stop-color="#0369ff"/><stop offset="0.48" stop-color="#d335ff"/><stop offset="0.53" stop-color="#f92bff"/><stop offset="0.58" stop-color="#ff1ee2"/><stop offset="0.7" stop-color="#ff07ab"/><stop offset="0.83" stop-color="#ff0088"/><stop offset="1" stop-color="#ff0067"/></linearGradient><linearGradient id="c173" gradientUnits="userSpaceOnUse" x1="140" x2="476" y1="0" y2="0"><stop offset="0" stop-color="#007cff"/><stop offset="0.16" stop-color="#0465ff"/><stop offset="0.48" stop-color="#d031ff"/><stop offset="0.55" stop-color="#ff24fd"/><stop offset="0.66" stop-color="#ff0dc3"/><stop offset="0.79" stop-color="#ff0098"/><stop offset="1" stop-color="#ff006c"/></linearGradient><linearGradient id="c174" gradientUnits="userSpaceOnUse" x1="141" x2="472" y1="0" y2="0"><stop offset="0" stop-color="#0078ff"/><stop offset="0.15" stop-color="#0063ff"/><stop offset="0.22" stop-color="#2459ff"/><stop offset="0.54" stop-color="#f025ff"/><stop offset="0.56" stop-color="#fc22ff"/><stop offset="0.71" stop-color="#ff06b8"/><stop offset="0.87" stop-color="#ff0089"/><stop offset="1" stop-color="#ff0071"/></linearGradient><linearGradient id="c175" gradientUnits="userSpaceOnUse" x1="142" x2="467" y1="0" y2="0"><stop offset="0" stop-color="#0074ff"/><stop offset="0.15" stop-color="#005fff"/><stop offset="0.22" stop-color="#2455ff"/><stop offset="0.57" stop-color="#f81fff"/><stop offset="0.61" stop-color="#ff17ef"/><stop offset="0.76" stop-color="#ff00af"/><stop offset="0.96" stop-color="#ff007d"/><stop offset="1" stop-color="#ff0076"/></linearGradient><linearGradient id="c176" gradientUnits="userSpaceOnUse" x1="143" x2="463" y1="0" y2="0"><stop offset="0" stop-color="#0070ff"/><stop offset="0.15" stop-color="#005cff"/><stop offset="0.38" stop-color="#783cff"/><stop offset="0.6" stop-color="#ff19ff"/><stop offset="0.73" stop-color="#ff02c0"/><stop offset="0.9" stop-color="#ff008f"/><stop offset="1" stop-color="#ff007b"/></linearGradient><linearGradient id="c177" gradientUnits="userSpaceOnUse" x1="144" x2="459" y1="0" y2="0"><stop offset="0" stop-color="#006cff"/><stop offset="0.15" stop-color="#0058ff"/><stop offset="0.42" stop-color="#8c33ff"/><stop offset="0.61" stop-color="#fb16ff"/><stop offset="0.76" stop-color="#ff00bc"/><stop offset="0.97" stop-color="#ff0086"/><stop offset="1" stop-color="#ff0081"/></linearGradient><linearGradient id="c178" gradientUnits="userSpaceOnUse" x1="145" x2="455" y1="0" y2="0"><stop offset="0" stop-color="#0068ff"/><stop offset="0.15" stop-color="#0055ff"/><stop offset="0.46" stop-color="#9f2bff"/><stop offset="0.64" stop-color="#ff11fc"/><stop offset="0.75" stop-color="#ff00c7"/><stop offset="0.95" stop-color="#ff0090"/><stop offset="1" stop-color="#ff0086"/></linearGradient><linearGradient id="c179" gradientUnits="userSpaceOnUse" x1="145" x2="450" y1="0" y2="0"><stop offset="0" stop-color="#0065ff"/><stop offset="0.16" stop-color="#0052ff"/><stop offset="0.45" stop-color="#912bff"/><stop offset="0.65" stop-color="#fc0fff"/><stop offset="0.77" stop-color="#ff00cb"/><stop offset="0.96" stop-color="#ff0094"/><stop offset="1" stop-color="#ff008d"/></linearGradient><linearGradient id="c180" gradientUnits="userSpaceOnUse" x1="146" x2="446" y1="0" y2="0"><stop offset="0" stop-color="#0061ff"/><stop offset="0.16" stop-color="#004eff"/><stop offset="0.5" stop-color="#a323ff"/><stop offset="0.68" stop-color="#ff0afb"/><stop offset="0.8" stop-color="#ff00c8"/><stop offset="0.98" stop-color="#ff0097"/><stop offset="1" stop-color="#ff0093"/></linearGradient><linearGradient id="c181" gradientUnits="userSpaceOnUse" x1="147" x2="442" y1="0" y2="0"><stop offset="0" stop-color="#005eff"/><stop offset="0.16" stop-color="#004bff"/><stop offset="0.55" stop-color="#b51bff"/><stop offset="0.69" stop-color="#ff08ff"/><stop offset="0.81" stop-color="#ff00cb"/><stop offset="1" stop-color="#ff0099"/></linearGradient><linearGradient id="c182" gradientUnits="userSpaceOnUse" x1="148" x2="437" y1="0" y2="0"><stop offset="0" stop-color="#005aff"/><stop offset="0.17" stop-color="#0048ff"/><stop offset="0.62" stop-color="#d111ff"/><stop offset="0.71" stop-color="#fb06ff"/><stop offset="0.83" stop-color="#ff00ce"/><stop offset="1" stop-color="#ff00a0"/></linearGradient><linearGradient id="c183" gradientUnits="userSpaceOnUse" x1="149" x2="433" y1="0" y2="0"><stop offset="0" stop-color="#0057ff"/><stop offset="0.17" stop-color="#0045ff"/><stop offset="0.63" stop-color="#ce0eff"/><stop offset="0.74" stop-color="#ff01fd"/><stop offset="0.89" stop-color="#ff00c4"/><stop offset="1" stop-color="#ff00a7"/></linearGradient><linearGradient id="c184" gradientUnits="userSpaceOnUse" x1="150" x2="429" y1="0" y2="0"><stop offset="0" stop-color="#0054ff"/><stop offset="0.17" stop-color="#0142ff"/><stop offset="0.65" stop-color="#cb0cff"/><stop offset="0.75" stop-color="#fd00ff"/><stop offset="0.92" stop-color="#ff00c1"/><stop offset="1" stop-color="#ff00ad"/></linearGradient><linearGradient id="c185" gradientUnits="userSpaceOnUse" x1="151" x2="425" y1="0" y2="0"><stop offset="0" stop-color="#0051ff"/><stop offset="0.18" stop-color="#013fff"/><stop offset="0.7" stop-color="#dc05ff"/><stop offset="0.79" stop-color="#ff00fa"/><stop offset="0.96" stop-color="#ff00be"/><stop offset="1" stop-color="#ff00b5"/></linearGradient><linearGradient id="c186" gradientUnits="userSpaceOnUse" x1="152" x2="420" y1="0" y2="0"><stop offset="0" stop-color="#004eff"/><stop offset="0.18" stop-color="#023dff"/><stop offset="0.76" stop-color="#ec00ff"/><stop offset="0.81" stop-color="#ff00fe"/><stop offset="1" stop-color="#ff00bd"/></linearGradient><linearGradient id="c187" gradientUnits="userSpaceOnUse" x1="153" x2="416" y1="0" y2="0"><stop offset="0" stop-color="#004bff"/><stop offset="0.18" stop-color="#033aff"/><stop offset="0.68" stop-color="#c306ff"/><stop offset="0.82" stop-color="#fc00ff"/><stop offset="1" stop-color="#ff00c5"/></linearGradient><linearGradient id="c188" gradientUnits="userSpaceOnUse" x1="154" x2="412" y1="0" y2="0"><stop offset="0" stop-color="#0049ff"/><stop offset="0.19" stop-color="#0338ff"/><stop offset="0.77" stop-color="#dc00ff"/><stop offset="0.86" stop-color="#ff00fc"/><stop offset="1" stop-color="#ff00cd"/></linearGradient><linearGradient id="c189" gradientUnits="userSpaceOnUse" x1="155" x2="408" y1="0" y2="0"><stop offset="0" stop-color="#0046ff"/><stop offset="0.19" stop-color="#0435ff"/><stop offset="0.76" stop-color="#d000ff"/><stop offset="0.88" stop-color="#ff00ff"/><stop offset="1" stop-color="#ff00d6"/></linearGradient><linearGradient id="c190" gradientUnits="userSpaceOnUse" x1="156" x2="403" y1="0" y2="0"><stop offset="0" stop-color="#0043ff"/><stop offset="0.19" stop-color="#0433ff"/><stop offset="0.78" stop-color="#ce00ff"/><stop offset="0.9" stop-color="#fb00ff"/><stop offset="1" stop-color="#ff00e0"/></linearGradient><linearGradient id="c191" gradientUnits="userSpaceOnUse" x1="157" x2="399" y1="0" y2="0"><stop offset="0" stop-color="#0041ff"/><stop offset="0.17" stop-color="#0033ff"/><stop offset="0.69" stop-color="#a804ff"/><stop offset="0.94" stop-color="#ff00fd"/><stop offset="1" stop-color="#ff00ea"/></linearGradient><linearGradient id="c192" gradientUnits="userSpaceOnUse" x1="158" x2="395" y1="0" y2="0"><stop offset="0" stop-color="#003fff"/><stop offset="0.18" stop-color="#0030ff"/><stop offset="0.78" stop-color="#c000ff"/><stop offset="0.96" stop-color="#fe00ff"/><stop offset="1" stop-color="#ff00f3"/></linearGradient><linearGradient id="c193" gradientUnits="userSpaceOnUse" x1="159" x2="390" y1="0" y2="0"><stop offset="0" stop-color="#003cff"/><stop offset="0.18" stop-color="#002eff"/><stop offset="0.78" stop-color="#b500ff"/><stop offset="1" stop-color="#ff00ff"/></linearGradient><linearGradient id="c194" gradientUnits="userSpaceOnUse" x1="160" x2="386" y1="0" y2="0"><stop offset="0" stop-color="#003aff"/><stop offset="0.19" stop-color="#002cff"/><stop offset="0.8" stop-color="#b300ff"/><stop offset="1" stop-color="#f400ff"/></linearGradient><linearGradient id="c195" gradientUnits="userSpaceOnUse" x1="161" x2="382" y1="0" y2="0"><stop offset="0" stop-color="#0038ff"/><stop offset="0.19" stop-color="#002aff"/><stop offset="0.79" stop-color="#a900ff"/><stop offset="1" stop-color="#ea00ff"/></linearGradient><linearGradient id="c196" gradientUnits="userSpaceOnUse" x1="162" x2="378" y1="0" y2="0"><stop offset="0" stop-color="#0036ff"/><stop offset="0.19" stop-color="#0028ff"/><stop offset="0.78" stop-color="#9f00ff"/><stop offset="1" stop-color="#e000ff"/></linearGradient><linearGradient id="c197" gradientUnits="userSpaceOnUse" x1="162" x2="373" y1="0" y2="0"><stop offset="0" stop-color="#0034ff"/><stop offset="0.2" stop-color="#0026ff"/><stop offset="0.8" stop-color="#9c00ff"/><stop offset="1" stop-color="#d500ff"/></linearGradient><linearGradient id="c198" gradientUnits="userSpaceOnUse" x1="163" x2="369" y1="0" y2="0"><stop offset="0" stop-color="#0032ff"/><stop offset="0.2" stop-color="#0024ff"/><stop offset="0.79" stop-color="#9300ff"/><stop offset="1" stop-color="#cc00ff"/></linearGradient><linearGradient id="c199" gradientUnits="userSpaceOnUse" x1="164" x2="365" y1="0" y2="0"><stop offset="0" stop-color="#0030ff"/><stop offset="0.21" stop-color="#0123ff"/><stop offset="0.78" stop-color="#8a00ff"/><stop offset="1" stop-color="#c400ff"/></linearGradient><linearGradient id="c200" gradientUnits="userSpaceOnUse" x1="165" x2="361" y1="0" y2="0"><stop offset="0" stop-color="#002eff"/><stop offset="0.21" stop-color="#0121ff"/><stop offset="0.77" stop-color="#8100ff"/><stop offset="1" stop-color="#bb00ff"/></linearGradient><linearGradient id="c201" gradientUnits="userSpaceOnUse" x1="166" x2="356" y1="0" y2="0"><stop offset="0" stop-color="#002cff"/><stop offset="0.22" stop-color="#021fff"/><stop offset="0.79" stop-color="#8000ff"/><stop offset="1" stop-color="#b100ff"/></linearGradient><linearGradient id="c202" gradientUnits="userSpaceOnUse" x1="167" x2="352" y1="0" y2="0"><stop offset="0" stop-color="#002aff"/><stop offset="0.23" stop-color="#021dff"/><stop offset="0.81" stop-color="#7f00ff"/><stop offset="1" stop-color="#a900ff"/></linearGradient><linearGradient id="c203" gradientUnits="userSpaceOnUse" x1="168" x2="348" y1="0" y2="0"><stop offset="0" stop-color="#0028ff"/><stop offset="0.23" stop-color="#031cff"/><stop offset="0.8" stop-color="#7700ff"/><stop offset="1" stop-color="#a200ff"/></linearGradient><linearGradient id="c204" gradientUnits="userSpaceOnUse" x1="169" x2="343" y1="0" y2="0"><stop offset="0" stop-color="#0026ff"/><stop offset="0.24" stop-color="#031aff"/><stop offset="0.79" stop-color="#6f00ff"/><stop offset="1" stop-color="#9900ff"/></linearGradient><linearGradient id="c205" gradientUnits="userSpaceOnUse" x1="170" x2="339" y1="0" y2="0"><stop offset="0" stop-color="#0025ff"/><stop offset="0.25" stop-color="#0418ff"/><stop offset="0.78" stop-color="#6700ff"/><stop offset="1" stop-color="#9200ff"/></linearGradient><linearGradient id="c206" gradientUnits="userSpaceOnUse" x1="171" x2="335" y1="0" y2="0"><stop offset="0" stop-color="#0023ff"/><stop offset="0.26" stop-color="#0417ff"/><stop offset="0.8" stop-color="#6600ff"/><stop offset="1" stop-color="#8b00ff"/></linearGradient><linearGradient id="c207" gradientUnits="userSpaceOnUse" x1="172" x2="331" y1="0" y2="0"><stop offset="0" stop-color="#0021ff"/><stop offset="0.23" stop-color="#0017ff"/><stop offset="0.79" stop-color="#5f00ff"/><stop offset="1" stop-color="#8400ff"/></linearGradient><linearGradient id="c208" gradientUnits="userSpaceOnUse" x1="173" x2="326" y1="0" y2="0"><stop offset="0" stop-color="#0020ff"/><stop offset="0.24" stop-color="#0016ff"/><stop offset="0.78" stop-color="#5800ff"/><stop offset="1" stop-color="#7c00ff"/></linearGradient><linearGradient id="c209" gradientUnits="userSpaceOnUse" x1="174" x2="322" y1="0" y2="0"><stop offset="0" stop-color="#001eff"/><stop offset="0.24" stop-color="#0014ff"/><stop offset="0.81" stop-color="#5700ff"/><stop offset="1" stop-color="#7500ff"/></linearGradient><linearGradient id="c210" gradientUnits="userSpaceOnUse" x1="175" x2="318" y1="0" y2="0"><stop offset="0" stop-color="#001dff"/><stop offset="0.25" stop-color="#0013ff"/><stop offset="0.8" stop-color="#5000ff"/><stop offset="1" stop-color="#6f00ff"/></linearGradient><linearGradient id="c211" gradientUnits="userSpaceOnUse" x1="176" x2="314" y1="0" y2="0"><stop offset="0" stop-color="#001bff"/><stop offset="0.26" stop-color="#0011ff"/><stop offset="0.83" stop-color="#5000ff"/><stop offset="1" stop-color="#6900ff"/></linearGradient><linearGradient id="c212" gradientUnits="userSpaceOnUse" x1="177" x2="309" y1="0" y2="0"><stop offset="0" stop-color="#001aff"/><stop offset="0.27" stop-color="#0110ff"/><stop offset="0.82" stop-color="#4900ff"/><stop offset="1" stop-color="#6200ff"/></linearGradient><linearGradient id="c213" gradientUnits="userSpaceOnUse" x1="178" x2="305" y1="0" y2="0"><stop offset="0" stop-color="#0018ff"/><stop offset="0.28" stop-color="#010eff"/><stop offset="0.85" stop-color="#4900ff"/><stop offset="1" stop-color="#5c00ff"/></linearGradient><linearGradient id="c214" gradientUnits="userSpaceOnUse" x1="179" x2="301" y1="0" y2="0"><stop offset="0" stop-color="#0017ff"/><stop offset="0.3" stop-color="#020dff"/><stop offset="0.84" stop-color="#4200ff"/><stop offset="1" stop-color="#5600ff"/></linearGradient><linearGradient id="c215" gradientUnits="userSpaceOnUse" x1="179" x2="297" y1="0" y2="0"><stop offset="0" stop-color="#0016ff"/><stop offset="0.31" stop-color="#010cff"/><stop offset="0.92" stop-color="#4700ff"/><stop offset="1" stop-color="#5100ff"/></linearGradient><linearGradient id="c216" gradientUnits="userSpaceOnUse" x1="180" x2="292" y1="0" y2="0"><stop offset="0" stop-color="#0014ff"/><stop offset="0.32" stop-color="#020bff"/><stop offset="0.91" stop-color="#4100ff"/><stop offset="1" stop-color="#4b00ff"/></linearGradient><linearGradient id="c217" gradientUnits="userSpaceOnUse" x1="181" x2="288" y1="0" y2="0"><stop offset="0" stop-color="#0013ff"/><stop offset="0.34" stop-color="#020aff"/><stop offset="0.9" stop-color="#3b00ff"/><stop offset="1" stop-color="#4500ff"/></linearGradient><linearGradient id="c218" gradientUnits="userSpaceOnUse" x1="182" x2="284" y1="0" y2="0"><stop offset="0" stop-color="#0012ff"/><stop offset="0.35" stop-color="#0208ff"/><stop offset="1" stop-color="#4000ff"/></linearGradient><linearGradient id="c219" gradientUnits="userSpaceOnUse" x1="183" x2="279" y1="0" y2="0"><stop offset="0" stop-color="#0011ff"/><stop offset="0.38" stop-color="#0307ff"/><stop offset="1" stop-color="#3a00ff"/></linearGradient><linearGradient id="c220" gradientUnits="userSpaceOnUse" x1="184" x2="275" y1="0" y2="0"><stop offset="0" stop-color="#000fff"/><stop offset="0.4" stop-color="#0306ff"/><stop offset="1" stop-color="#3600ff"/></linearGradient><linearGradient id="c221" gradientUnits="userSpaceOnUse" x1="185" x2="271" y1="0" y2="0"><stop offset="0" stop-color="#000eff"/><stop offset="0.42" stop-color="#0405ff"/><stop offset="1" stop-color="#3100ff"/></linearGradient><linearGradient id="c222" gradientUnits="userSpaceOnUse" x1="186" x2="267" y1="0" y2="0"><stop offset="0" stop-color="#000dff"/><stop offset="0.44" stop-color="#0404ff"/><stop offset="1" stop-color="#2c00ff"/></linearGradient><linearGradient id="c223" gradientUnits="userSpaceOnUse" x1="187" x2="262" y1="0" y2="0"><stop offset="0" stop-color="#000cff"/><stop offset="0.48" stop-color="#0403ff"/><stop offset="1" stop-color="#2700ff"/></linearGradient><linearGradient id="c224" gradientUnits="userSpaceOnUse" x1="188" x2="258" y1="0" y2="0"><stop offset="0" stop-color="#000bff"/><stop offset="0.43" stop-color="#0003ff"/><stop offset="1" stop-color="#2200ff"/></linearGradient><linearGradient id="c225" gradientUnits="userSpaceOnUse" x1="189" x2="254" y1="0" y2="0"><stop offset="0" stop-color="#0009ff"/><stop offset="0.46" stop-color="#0002ff"/><stop offset="1" stop-color="#1e00ff"/></linearGradient><linearGradient id="c226" gradientUnits="userSpaceOnUse" x1="190" x2="250" y1="0" y2="0"><stop offset="0" stop-color="#0008ff"/><stop offset="0.5" stop-color="#0001ff"/><stop offset="1" stop-color="#1a00ff"/></linearGradient><linearGradient id="c227" gradientUnits="userSpaceOnUse" x1="191" x2="245" y1="0" y2="0"><stop offset="0" stop-color="#0007ff"/><stop offset="0.67" stop-color="#0600ff"/><stop offset="1" stop-color="#1500ff"/></linearGradient><linearGradient id="c228" gradientUnits="userSpaceOnUse" x1="192" x2="241" y1="0" y2="0"><stop offset="0" stop-color="#0006ff"/><stop offset="0.73" stop-color="#0600ff"/><stop offset="1" stop-color="#1100ff"/></linearGradient><linearGradient id="c229" gradientUnits="userSpaceOnUse" x1="193" x2="237" y1="0" y2="0"><stop offset="0" stop-color="#0005ff"/><stop offset="0.68" stop-color="#0200ff"/><stop offset="1" stop-color="#0d00ff"/></linearGradient><linearGradient id="c230" gradientUnits="userSpaceOnUse" x1="194" x2="232" y1="0" y2="0"><stop offset="0" stop-color="#0004ff"/><stop offset="0.79" stop-color="#0200ff"/><stop offset="1" stop-color="#0800ff"/></linearGradient><linearGradient id="c231" gradientUnits="userSpaceOnUse" x1="195" x2="228" y1="0" y2="0"><stop offset="0" stop-color="#0003ff"/><stop offset="1" stop-color="#0500ff"/></linearGradient><linearGradient id="c232" gradientUnits="userSpaceOnUse" x1="196" x2="224" y1="0" y2="0"><stop offset="0" stop-color="#0002ff"/><stop offset="1" stop-color="#0100ff"/></linearGradient><linearGradient id="c233" gradientUnits="userSpaceOnUse" x1="196" x2="220" y1="0" y2="0"><stop offset="0" stop-color="#0001ff"/><stop offset="1" stop-color="#0000ff"/></linearGradient><linearGradient id="c234" gradientUnits="userSpaceOnUse" x1="197" x2="215" y1="0" y2="0"><stop offset="0" stop-color="#0001ff"/><stop offset="1" stop-color="#0000ff"/></linearGradient><linearGradient id="c235" gradientUnits="userSpaceOnUse" x1="198" x2="211" y1="0" y2="0"><stop offset="0" stop-color="#0000ff"/><stop offset="1" stop-color="#0000ff"/></linearGradient><linearGradient id="c236" gradientUnits="userSpaceOnUse" x1="199" x2="207" y1="0" y2="0"><stop offset="0" stop-color="#0000ff"/><stop offset="1" stop-color="#0000ff"/></linearGradient><clipPath id="insclip"><rect x="490" y="507" width="212" height="212"/></clipPath><linearGradient id="c237" gradientUnits="userSpaceOnUse" x1="487" x2="705" y1="0" y2="0"><stop offset="0" stop-color="#75ff8a"/><stop offset="0.48" stop-color="#eeff92"/><stop offset="0.55" stop-color="#fffb91"/><stop offset="0.84" stop-color="#ffb96f"/><stop offset="1" stop-color="#ff9f62"/></linearGradient><linearGradient id="c238" gradientUnits="userSpaceOnUse" x1="487" x2="705" y1="0" y2="0"><stop offset="0" stop-color="#75ff8e"/><stop offset="0.48" stop-color="#eeff96"/><stop offset="0.55" stop-color="#fffb94"/><stop offset="0.84" stop-color="#ffb871"/><stop offset="1" stop-color="#ff9f64"/></linearGradient><linearGradient id="c239" gradientUnits="userSpaceOnUse" x1="487" x2="705" y1="0" y2="0"><stop offset="0" stop-color="#75ff91"/><stop offset="0.48" stop-color="#eeff99"/><stop offset="0.55" stop-color="#fffa98"/><stop offset="0.84" stop-color="#ffb874"/><stop offset="1" stop-color="#ff9e66"/></linearGradient><linearGradient id="c240" gradientUnits="userSpaceOnUse" x1="487" x2="705" y1="0" y2="0"><stop offset="0" stop-color="#75ff94"/><stop offset="0.44" stop-color="#e4ff9c"/><stop offset="0.55" stop-color="#fffa9b"/><stop offset="0.84" stop-color="#ffb777"/><stop offset="1" stop-color="#ff9e69"/></linearGradient><linearGradient id="c241" gradientUnits="userSpaceOnUse" x1="487" x2="705" y1="0" y2="0"><stop offset="0" stop-color="#75ff97"/><stop offset="0.48" stop-color="#efffa1"/><stop offset="0.55" stop-color="#fffa9f"/><stop offset="0.81" stop-color="#ffbe7d"/><stop offset="1" stop-color="#ff9d6b"/></linearGradient><linearGradient id="c242" gradientUnits="userSpaceOnUse" x1="487" x2="705" y1="0" y2="0"><stop offset="0" stop-color="#75ff9b"/><stop offset="0.48" stop-color="#efffa4"/><stop offset="0.55" stop-color="#fff9a2"/><stop offset="0.84" stop-color="#ffb67c"/><stop offset="1" stop-color="#ff9d6e"/></linearGradient><linearGradient id="c243" gradientUnits="userSpaceOnUse" x1="487" x2="705" y1="0" y2="0"><stop offset="0" stop-color="#74ff9e"/><stop offset="0.48" stop-color="#f0ffa8"/><stop offset="0.55" stop-color="#fff9a6"/><stop offset="0.81" stop-color="#ffbd83"/><stop offset="1" stop-color="#ff9d70"/></linearGradient><linearGradient id="c244" gradientUnits="userSpaceOnUse" x1="487" x2="705" y1="0" y2="0"><stop offset="0" stop-color="#74ffa1"/><stop offset="0.48" stop-color="#f0ffac"/><stop offset="0.55" stop-color="#fff8a9"/><stop offset="0.84" stop-color="#ffb581"/><stop offset="1" stop-color="#ff9c72"/></linearGradient><linearGradient id="c245" gradientUnits="userSpaceOnUse" x1="487" x2="705" y1="0" y2="0"><stop offset="0" stop-color="#74ffa5"/><stop offset="0.48" stop-color="#f0ffb0"/><stop offset="0.55" stop-color="#fff8ad"/><stop offset="0.84" stop-color="#ffb584"/><stop offset="1" stop-color="#ff9c75"/></linearGradient><linearGradient id="c246" gradientUnits="userSpaceOnUse" x1="487" x2="705" y1="0" y2="0"><stop offset="0" stop-color="#74ffa8"/><stop offset="0.48" stop-color="#f1ffb4"/><stop offset="0.55" stop-color="#fff7b0"/><stop offset="0.84" stop-color="#ffb587"/><stop offset="1" stop-color="#ff9b77"/></linearGradient><linearGradient id="c247" gradientUnits="userSpaceOnUse" x1="487" x2="705" y1="0" y2="0"><stop offset="0" stop-color="#74ffac"/><stop offset="0.48" stop-color="#f1ffb7"/><stop offset="0.55" stop-color="#fff7b4"/><stop offset="0.84" stop-color="#ffb48a"/><stop offset="1" stop-color="#ff9b7a"/></linearGradient><linearGradient id="c248" gradientUnits="userSpaceOnUse" x1="487" x2="705" y1="0" y2="0"><stop offset="0" stop-color="#74ffaf"/><stop offset="0.44" stop-color="#e7ffba"/><stop offset="0.51" stop-color="#fdffbc"/><stop offset="0.81" stop-color="#ffba91"/><stop offset="1" stop-color="#ff9a7c"/></linearGradient><linearGradient id="c249" gradientUnits="userSpaceOnUse" x1="487" x2="705" y1="0" y2="0"><stop offset="0" stop-color="#74ffb2"/><stop offset="0.44" stop-color="#e7ffbe"/><stop offset="0.51" stop-color="#fdffc0"/><stop offset="0.81" stop-color="#ffba94"/><stop offset="1" stop-color="#ff9a7f"/></linearGradient><linearGradient id="c250" gradientUnits="userSpaceOnUse" x1="487" x2="705" y1="0" y2="0"><stop offset="0" stop-color="#74ffb6"/><stop offset="0.44" stop-color="#e7ffc2"/><stop offset="0.51" stop-color="#fdffc4"/><stop offset="0.81" stop-color="#ffba96"/><stop offset="1" stop-color="#ff9981"/></linearGradient><linearGradient id="c251" gradientUnits="userSpaceOnUse" x1="487" x2="705" y1="0" y2="0"><stop offset="0" stop-color="#74ffb9"/><stop offset="0.44" stop-color="#e8ffc6"/><stop offset="0.51" stop-color="#feffc8"/><stop offset="0.81" stop-color="#ffb999"/><stop offset="1" stop-color="#ff9983"/></linearGradient><linearGradient id="c252" gradientUnits="userSpaceOnUse" x1="487" x2="705" y1="0" y2="0"><stop offset="0" stop-color="#74ffbd"/><stop offset="0.44" stop-color="#e8ffca"/><stop offset="0.51" stop-color="#feffcd"/><stop offset="0.77" stop-color="#ffc0a1"/><stop offset="1" stop-color="#ff9986"/></linearGradient><linearGradient id="c253" gradientUnits="userSpaceOnUse" x1="487" x2="705" y1="0" y2="0"><stop offset="0" stop-color="#73ffc1"/><stop offset="0.48" stop-color="#f3ffcf"/><stop offset="0.51" stop-color="#ffffd1"/><stop offset="0.77" stop-color="#ffbfa4"/><stop offset="1" stop-color="#ff9888"/></linearGradient><linearGradient id="c254" gradientUnits="userSpaceOnUse" x1="487" x2="705" y1="0" y2="0"><stop offset="0" stop-color="#73ffc4"/><stop offset="0.51" stop-color="#ffffd5"/><stop offset="0.77" stop-color="#ffbfa7"/><stop offset="1" stop-color="#ff988b"/></linearGradient><linearGradient id="c255" gradientUnits="userSpaceOnUse" x1="487" x2="705" y1="0" y2="0"><stop offset="0" stop-color="#73ffc8"/><stop offset="0.51" stop-color="#ffffd9"/><stop offset="0.81" stop-color="#ffb7a5"/><stop offset="1" stop-color="#ff978d"/></linearGradient><linearGradient id="c256" gradientUnits="userSpaceOnUse" x1="487" x2="705" y1="0" y2="0"><stop offset="0" stop-color="#73ffcb"/><stop offset="0.51" stop-color="#fffedc"/><stop offset="0.77" stop-color="#ffbead"/><stop offset="1" stop-color="#ff9790"/></linearGradient><linearGradient id="c257" gradientUnits="userSpaceOnUse" x1="487" x2="705" y1="0" y2="0"><stop offset="0" stop-color="#73ffcf"/><stop offset="0.51" stop-color="#fffee0"/><stop offset="0.81" stop-color="#ffb6ab"/><stop offset="1" stop-color="#ff9692"/></linearGradient><linearGradient id="c258" gradientUnits="userSpaceOnUse" x1="487" x2="705" y1="0" y2="0"><stop offset="0" stop-color="#73ffd3"/><stop offset="0.51" stop-color="#fffde4"/><stop offset="0.77" stop-color="#ffbdb3"/><stop offset="1" stop-color="#ff9695"/></linearGradient><linearGradient id="c259" gradientUnits="userSpaceOnUse" x1="487" x2="705" y1="0" y2="0"><stop offset="0" stop-color="#73ffd6"/><stop offset="0.44" stop-color="#eaffe7"/><stop offset="0.51" stop-color="#fffde8"/><stop offset="0.81" stop-color="#ffb5b0"/><stop offset="1" stop-color="#ff9597"/></linearGradient><linearGradient id="c260" gradientUnits="userSpaceOnUse" x1="487" x2="705" y1="0" y2="0"><stop offset="0" stop-color="#73ffda"/><stop offset="0.44" stop-color="#ebffeb"/><stop offset="0.51" stop-color="#fffcec"/><stop offset="0.77" stop-color="#ffbcb9"/><stop offset="1" stop-color="#ff959a"/></linearGradient><linearGradient id="c261" gradientUnits="userSpaceOnUse" x1="487" x2="705" y1="0" y2="0"><stop offset="0" stop-color="#73ffde"/><stop offset="0.44" stop-color="#ebffef"/><stop offset="0.51" stop-color="#fffcf0"/><stop offset="0.81" stop-color="#ffb4b6"/><stop offset="1" stop-color="#ff949d"/></linearGradient><linearGradient id="c262" gradientUnits="userSpaceOnUse" x1="487" x2="705" y1="0" y2="0"><stop offset="0" stop-color="#72ffe2"/><stop offset="0.51" stop-color="#fffbf4"/><stop offset="0.77" stop-color="#ffbbbf"/><stop offset="1" stop-color="#ff949f"/></linearGradient><linearGradient id="c263" gradientUnits="userSpaceOnUse" x1="487" x2="705" y1="0" y2="0"><stop offset="0" stop-color="#72ffe6"/><stop offset="0.51" stop-color="#fffbf8"/><stop offset="0.81" stop-color="#ffb3bc"/><stop offset="1" stop-color="#ff93a2"/></linearGradient><linearGradient id="c264" gradientUnits="userSpaceOnUse" x1="487" x2="705" y1="0" y2="0"><stop offset="0" stop-color="#72ffe9"/><stop offset="0.44" stop-color="#ecfffc"/><stop offset="0.51" stop-color="#fffbfc"/><stop offset="0.73" stop-color="#ffc2cc"/><stop offset="1" stop-color="#ff93a4"/></linearGradient><linearGradient id="c265" gradientUnits="userSpaceOnUse" x1="487" x2="705" y1="0" y2="0"><stop offset="0" stop-color="#72ffed"/><stop offset="0.48" stop-color="#f5fbff"/><stop offset="0.51" stop-color="#fef9ff"/><stop offset="0.81" stop-color="#ffb2c2"/><stop offset="1" stop-color="#ff93a7"/></linearGradient><linearGradient id="c266" gradientUnits="userSpaceOnUse" x1="487" x2="705" y1="0" y2="0"><stop offset="0" stop-color="#72fff1"/><stop offset="0.44" stop-color="#e7f9ff"/><stop offset="0.55" stop-color="#ffeffa"/><stop offset="0.81" stop-color="#ffb2c5"/><stop offset="1" stop-color="#ff92a9"/></linearGradient><linearGradient id="c267" gradientUnits="userSpaceOnUse" x1="487" x2="705" y1="0" y2="0"><stop offset="0" stop-color="#72fff5"/><stop offset="0.33" stop-color="#c8faff"/><stop offset="0.55" stop-color="#ffeefe"/><stop offset="0.81" stop-color="#ffb2c8"/><stop offset="1" stop-color="#ff92ac"/></linearGradient><linearGradient id="c268" gradientUnits="userSpaceOnUse" x1="487" x2="705" y1="0" y2="0"><stop offset="0" stop-color="#72fff9"/><stop offset="0.4" stop-color="#d7f2ff"/><stop offset="0.55" stop-color="#fcebff"/><stop offset="0.88" stop-color="#ffa4bf"/><stop offset="1" stop-color="#ff91af"/></linearGradient><linearGradient id="c269" gradientUnits="userSpaceOnUse" x1="487" x2="705" y1="0" y2="0"><stop offset="0" stop-color="#72fffd"/><stop offset="0.59" stop-color="#ffe3fc"/><stop offset="0.88" stop-color="#ffa3c2"/><stop offset="1" stop-color="#ff91b1"/></linearGradient><linearGradient id="c270" gradientUnits="userSpaceOnUse" x1="487" x2="705" y1="0" y2="0"><stop offset="0" stop-color="#71fdff"/><stop offset="0.59" stop-color="#fee1ff"/><stop offset="0.88" stop-color="#ffa3c5"/><stop offset="1" stop-color="#ff90b4"/></linearGradient><linearGradient id="c271" gradientUnits="userSpaceOnUse" x1="487" x2="705" y1="0" y2="0"><stop offset="0" stop-color="#6ff9ff"/><stop offset="0.59" stop-color="#fadeff"/><stop offset="0.77" stop-color="#ffb7db"/><stop offset="1" stop-color="#ff90b6"/></linearGradient><linearGradient id="c272" gradientUnits="userSpaceOnUse" x1="487" x2="705" y1="0" y2="0"><stop offset="0" stop-color="#6df5ff"/><stop offset="0.62" stop-color="#ffd8fe"/><stop offset="0.92" stop-color="#ff9cc5"/><stop offset="1" stop-color="#ff8fb9"/></linearGradient><linearGradient id="c273" gradientUnits="userSpaceOnUse" x1="487" x2="705" y1="0" y2="0"><stop offset="0" stop-color="#6bf2ff"/><stop offset="0.62" stop-color="#fcd5ff"/><stop offset="0.99" stop-color="#ff90bd"/><stop offset="1" stop-color="#ff8fbc"/></linearGradient><linearGradient id="c274" gradientUnits="userSpaceOnUse" x1="487" x2="705" y1="0" y2="0"><stop offset="0" stop-color="#69eeff"/><stop offset="0.66" stop-color="#ffcdfd"/><stop offset="0.95" stop-color="#ff95c5"/><stop offset="1" stop-color="#ff8ebe"/></linearGradient><linearGradient id="c275" gradientUnits="userSpaceOnUse" x1="487" x2="705" y1="0" y2="0"><stop offset="0" stop-color="#68eaff"/><stop offset="0.66" stop-color="#feccff"/><stop offset="1" stop-color="#ff8ec1"/></linearGradient><linearGradient id="c276" gradientUnits="userSpaceOnUse" x1="487" x2="705" y1="0" y2="0"><stop offset="0" stop-color="#66e7ff"/><stop offset="0.7" stop-color="#ffc4fb"/><stop offset="1" stop-color="#ff8dc4"/></linearGradient><linearGradient id="c277" gradientUnits="userSpaceOnUse" x1="487" x2="705" y1="0" y2="0"><stop offset="0" stop-color="#64e3ff"/><stop offset="0.7" stop-color="#ffc3fe"/><stop offset="1" stop-color="#ff8dc6"/></linearGradient><linearGradient id="c278" gradientUnits="userSpaceOnUse" x1="487" x2="705" y1="0" y2="0"><stop offset="0" stop-color="#63e0ff"/><stop offset="0.7" stop-color="#fcc1ff"/><stop offset="1" stop-color="#ff8cc9"/></linearGradient><linearGradient id="c279" gradientUnits="userSpaceOnUse" x1="487" x2="705" y1="0" y2="0"><stop offset="0" stop-color="#61ddff"/><stop offset="0.73" stop-color="#ffbafd"/><stop offset="1" stop-color="#ff8ccc"/></linearGradient><linearGradient id="c280" gradientUnits="userSpaceOnUse" x1="487" x2="705" y1="0" y2="0"><stop offset="0" stop-color="#60daff"/><stop offset="0.73" stop-color="#feb9ff"/><stop offset="1" stop-color="#ff8bce"/></linearGradient><linearGradient id="c281" gradientUnits="userSpaceOnUse" x1="487" x2="705" y1="0" y2="0"><stop offset="0" stop-color="#5ed6ff"/><stop offset="0.77" stop-color="#ffb2fb"/><stop offset="1" stop-color="#ff8bd1"/></linearGradient><linearGradient id="c282" gradientUnits="userSpaceOnUse" x1="487" x2="705" y1="0" y2="0"><stop offset="0" stop-color="#5dd3ff"/><stop offset="0.77" stop-color="#ffb1ff"/><stop offset="1" stop-color="#ff8ad4"/></linearGradient><linearGradient id="c283" gradientUnits="userSpaceOnUse" x1="487" x2="705" y1="0" y2="0"><stop offset="0" stop-color="#5bd0ff"/><stop offset="0.77" stop-color="#fcafff"/><stop offset="1" stop-color="#ff8ad7"/></linearGradient><linearGradient id="c284" gradientUnits="userSpaceOnUse" x1="487" x2="705" y1="0" y2="0"><stop offset="0" stop-color="#5acdff"/><stop offset="0.81" stop-color="#ffa9fd"/><stop offset="1" stop-color="#ff89d9"/></linearGradient><linearGradient id="c285" gradientUnits="userSpaceOnUse" x1="487" x2="705" y1="0" y2="0"><stop offset="0" stop-color="#59cbff"/><stop offset="0.81" stop-color="#fea8ff"/><stop offset="1" stop-color="#ff89dc"/></linearGradient><linearGradient id="c286" gradientUnits="userSpaceOnUse" x1="487" x2="705" y1="0" y2="0"><stop offset="0" stop-color="#57c8ff"/><stop offset="0.84" stop-color="#ffa1fc"/><stop offset="1" stop-color="#ff88df"/></linearGradient><linearGradient id="c287" gradientUnits="userSpaceOnUse" x1="487" x2="705" y1="0" y2="0"><stop offset="0" stop-color="#56c5ff"/><stop offset="0.84" stop-color="#ffa1ff"/><stop offset="1" stop-color="#ff88e2"/></linearGradient><linearGradient id="c288" gradientUnits="userSpaceOnUse" x1="487" x2="705" y1="0" y2="0"><stop offset="0" stop-color="#55c2ff"/><stop offset="0.84" stop-color="#fc9eff"/><stop offset="1" stop-color="#ff87e4"/></linearGradient><linearGradient id="c289" gradientUnits="userSpaceOnUse" x1="487" x2="705" y1="0" y2="0"><stop offset="0" stop-color="#53c0ff"/><stop offset="0.88" stop-color="#ff99fe"/><stop offset="1" stop-color="#ff87e7"/></linearGradient></defs>
<rect x="0" y="0" width="2560" height="1314" fill="#333333" />
<rect x="0" y="0" width="2560" height="66" fill="#222222" />
<rect x="0" y="0" width="1.5" height="1314" fill="#4d5a85" />
<rect x="191" y="12" width="2369" height="5.5" fill="url(#rainbow)" />
<path d="M1.5,0 H184 V25 Q184,29.5 179.5,29.5 H6 Q1.5,29.5 1.5,25 Z" fill="url(#redbtn)" stroke="#8a6a6a" stroke-width="0.8"/>
<g transform="translate(35.5,14.5) rotate(45)" fill="none" stroke="#ffffff" stroke-width="2.2"><rect x="-8" y="-8" width="16" height="16" rx="2"/></g>
<g fill="#ffffff"><circle cx="35.5" cy="10" r="2.2"/><circle cx="31" cy="14.5" r="2.2"/><circle cx="40" cy="14.5" r="2.2"/><circle cx="35.5" cy="19" r="2.2"/></g>
<g fill="none" stroke="#ffffff" stroke-width="2.5" stroke-linecap="butt"><path d="M61.2,10.2 A6.2,6.6 0 1 0 61.2,17.4"/><ellipse cx="69.3" cy="13.8" rx="5.9" ry="6.4"/><path d="M76.2,7.2 V20.6"/><path d="M80.4,2.2 V20.6"/><path d="M85.6,20.6 V11.5 Q85.6,7.3 90,7.3 Q94.3,7.3 94.3,11.5 V20.6 M94.3,11.5 Q94.3,7.3 98.6,7.3 Q103,7.3 103,11.5 V20.6 M85.6,7.2 V12"/><ellipse cx="112.4" cy="13.8" rx="5.9" ry="6.4"/><path d="M119.4,7.2 V20.6"/><path d="M124.6,20.6 V7.2 M124.6,12.5 Q124.6,7.3 129.7,7.3 Q134.8,7.3 134.8,12.5 V20.6"/></g>
<circle cx="167" cy="14" r="10" fill="#d42a2a"/>
<path d="M161.5,12 H172.5 L167,18 Z" fill="#ffffff"/>
<rect x="-4" y="35" width="32" height="28" rx="4.5" fill="url(#btn)" stroke="#c8c8c8" stroke-width="1.2"/>
<circle cx="14" cy="49" r="9.6" fill="url(#btnc)"/>
<path d="M11,44 L16.5,48.8 L11,53.5 Z" fill="#ffffff"/>
<path d="M30.5,66 V39.5 Q30.5,35.5 34.5,35.5 H183.5 Q187.5,35.5 187.5,39.5 V66" fill="url(#tabg)" stroke="#6a6a6a" stroke-width="1"/>
<line x1="119.5" y1="37" x2="119.5" y2="65" stroke="#666666" stroke-width="1" />
<line x1="154.5" y1="36" x2="154.5" y2="65" stroke="#666666" stroke-width="1" />
<text x="36" y="55.5" font-size="13.5" fill="#e8e8e8" text-anchor="start" textLength="77" lengthAdjust="spacingAndGlyphs" >Pre Calibration</text>
<text x="125" y="55.5" font-size="13.5" fill="#8a8a8a" text-anchor="start" textLength="24" lengthAdjust="spacingAndGlyphs" >Data</text>
<circle cx="170" cy="51" r="9.5" fill="#3c3c3c"/>
<text x="170" y="56" font-size="13" fill="#777777" text-anchor="middle" >+</text>
<path d="M2082,65 V39 Q2082,35 2086,35 H2207 Q2212,35 2212,40 V65 Z" fill="url(#dd)"/>
<rect x="2082" y="36" width="6" height="29" fill="#e8e000" />
<text x="2090.5" y="46.5" font-size="10.8" fill="#e8e8e8" text-anchor="start" textLength="81" lengthAdjust="spacingAndGlyphs" >Simulated Meter</text>
<text x="2090.5" y="61" font-size="10.8" fill="#e8e8e8" text-anchor="start" textLength="53" lengthAdjust="spacingAndGlyphs" >Simulated</text>
<circle cx="2195" cy="50" r="9.5" fill="url(#ddc)"/>
<path d="M2190,48 H2200 L2195,53.5 Z" fill="#ffffff"/>
<path d="M2218,65 V39 Q2218,35 2222,35 H2342 Q2347,35 2347,40 V65 Z" fill="url(#dd)"/>
<rect x="2218" y="36" width="6" height="29" fill="#e8e000" />
<text x="2226.5" y="46.5" font-size="10.8" fill="#e8e8e8" text-anchor="start" textLength="36" lengthAdjust="spacingAndGlyphs" >Source</text>
<circle cx="2330" cy="50" r="9.5" fill="url(#ddc)"/>
<path d="M2325,48 H2335 L2330,53.5 Z" fill="#ffffff"/>
<path d="M2354,65 V39 Q2354,35 2358,35 H2492 Q2497,35 2497,40 V65 Z" fill="url(#dd)"/>
<rect x="2354" y="36" width="6" height="29" fill="#e8e000" />
<text x="2362.5" y="46.5" font-size="10.8" fill="#e8e8e8" text-anchor="start" textLength="106" lengthAdjust="spacingAndGlyphs" >Direct Display Control</text>
<circle cx="2480" cy="50" r="9.5" fill="url(#ddc)"/>
<path d="M2475,48 H2485 L2480,53.5 Z" fill="#ffffff"/>
<rect x="2500.5" y="35" width="32.5" height="28" rx="4.5" fill="url(#btn)" stroke="#c8c8c8" stroke-width="1.2"/>
<circle cx="2516.9" cy="49.1" r="9.6" fill="url(#btnc)"/>
<path d="M2516.90,42.50 L2518.66,44.85 L2521.57,44.43 L2521.15,47.34 L2523.50,49.10 L2521.15,50.86 L2521.57,53.77 L2518.66,53.35 L2516.90,55.70 L2515.14,53.35 L2512.23,53.77 L2512.65,50.86 L2510.30,49.10 L2512.65,47.34 L2512.23,44.43 L2515.14,44.85 Z" fill="#e0e0e0" stroke="#e0e0e0" stroke-width="0.8" stroke-linejoin="round"/>
<circle cx="2516.9" cy="49.1" r="3" fill="#7a7a7a"/>
<rect x="2535" y="35" width="30" height="28" rx="4.5" fill="url(#btn)" stroke="#c8c8c8" stroke-width="1.2"/>
<circle cx="2547.8" cy="49.1" r="9.6" fill="url(#btnc)"/>
<path d="M2544.8,48.8 L2550.5,43.5 L2550.5,53.5 Z" fill="#ffffff"/>
<rect x="31.5" y="113.5" width="677" height="612" fill="#262626" stroke="#9a9a9a" stroke-width="2"/>
<text x="369.5" y="802.5" font-size="47.5" fill="#efefef" text-anchor="middle" textLength="301" lengthAdjust="spacingAndGlyphs" stroke="#efefef" stroke-width="0.6">Pre Calibration</text>
<rect x="35" y="821" width="670" height="2" fill="url(#sep)" />
<text x="27" y="868.8" font-size="29" fill="#efefef" text-anchor="start" textLength="354" lengthAdjust="spacingAndGlyphs" stroke="#efefef" stroke-width="0.45">Black Level: 0,0003 cd/m²</text>
<text x="27" y="911" font-size="29" fill="#efefef" text-anchor="start" textLength="382" lengthAdjust="spacingAndGlyphs" stroke="#efefef" stroke-width="0.45">White Level: 1431,17 cd/m²</text>
<text x="27" y="951.5" font-size="29" fill="#efefef" text-anchor="start" textLength="358" lengthAdjust="spacingAndGlyphs" stroke="#efefef" stroke-width="0.45">Contrast Ratio: 5408685:1</text>
<text x="27" y="1004.3" font-size="29" fill="#efefef" text-anchor="start" textLength="230" lengthAdjust="spacingAndGlyphs" stroke="#efefef" stroke-width="0.45">DCI-P3 xy: 94,5%</text>
<text x="340" y="1004.3" font-size="29" fill="#efefef" text-anchor="start" textLength="272" lengthAdjust="spacingAndGlyphs" stroke="#efefef" stroke-width="0.45">Rec. 2020 xy: 69,8%</text>
<text x="27" y="1045" font-size="29" fill="#efefef" text-anchor="start" textLength="234" lengthAdjust="spacingAndGlyphs" stroke="#efefef" stroke-width="0.45">DCI-P3 uv: 96,2%</text>
<text x="340" y="1045" font-size="29" fill="#efefef" text-anchor="start" textLength="276" lengthAdjust="spacingAndGlyphs" stroke="#efefef" stroke-width="0.45">Rec. 2020 uv: 75,3%</text>
<text x="27" y="1097.8" font-size="29" fill="#efefef" text-anchor="start" textLength="388" lengthAdjust="spacingAndGlyphs" stroke="#efefef" stroke-width="0.45">Saturation dE2000 Avg: 2,66</text>
<text x="27" y="1139.4" font-size="29" fill="#efefef" text-anchor="start" textLength="396" lengthAdjust="spacingAndGlyphs" stroke="#efefef" stroke-width="0.45">Saturation dE2000 Max: 6,32</text>
<text x="27" y="1190.6" font-size="29" fill="#efefef" text-anchor="start" textLength="377" lengthAdjust="spacingAndGlyphs" stroke="#efefef" stroke-width="0.45">Grayscale dE2000 Avg: 3,97</text>
<text x="27" y="1233.4" font-size="29" fill="#efefef" text-anchor="start" textLength="386" lengthAdjust="spacingAndGlyphs" stroke="#efefef" stroke-width="0.45">Grayscale dE2000 Max: 6,81</text>
<circle cx="474" cy="1090.8" r="15" fill="url(#ballg)" stroke="#6a6a6a" stroke-width="0.8"/>
<circle cx="474" cy="1133" r="15" fill="url(#ballr)" stroke="#6a6a6a" stroke-width="0.8"/>
<circle cx="474" cy="1185" r="15" fill="url(#ballr)" stroke="#6a6a6a" stroke-width="0.8"/>
<circle cx="474" cy="1226.6" r="15" fill="url(#ballr)" stroke="#6a6a6a" stroke-width="0.8"/>
<rect x="766" y="114.5" width="417" height="1152.5" fill="#232323" />
<text x="953" y="106.8" font-size="22.6" fill="#dcdcdc" text-anchor="middle" textLength="121" lengthAdjust="spacingAndGlyphs" >DeltaE 2000</text>
<line x1="835" y1="114.5" x2="835" y2="1267" stroke="#9a9a9a" stroke-width="2" />
<line x1="903" y1="114.5" x2="903" y2="1267" stroke="#9a9a9a" stroke-width="2" />
<line x1="974.5" y1="114.5" x2="974.5" y2="1267" stroke="#9a9a9a" stroke-width="2" />
<line x1="1043" y1="114.5" x2="1043" y2="1267" stroke="#9a9a9a" stroke-width="2" />
<line x1="1112" y1="114.5" x2="1112" y2="1267" stroke="#9a9a9a" stroke-width="2" />
<line x1="1183" y1="114.5" x2="1183" y2="1267" stroke="#9a9a9a" stroke-width="2" />
<line x1="766" y1="113.5" x2="766" y2="1267" stroke="#9a9a9a" stroke-width="2" />
<line x1="757" y1="114.5" x2="1184" y2="114.5" stroke="#9a9a9a" stroke-width="2.5" />
<line x1="757" y1="114.5" x2="766" y2="114.5" stroke="#e0e0e0" stroke-width="2.5" />
<line x1="765" y1="1267" x2="1184" y2="1267" stroke="#9a9a9a" stroke-width="2" />
<line x1="757" y1="500" x2="766" y2="500" stroke="#e0e0e0" stroke-width="2" />
<line x1="757" y1="882.4" x2="766" y2="882.4" stroke="#e0e0e0" stroke-width="2" />
<line x1="757" y1="1267" x2="766" y2="1267" stroke="#e0e0e0" stroke-width="2" />
<line x1="766" y1="1267" x2="766" y2="1277" stroke="#e0e0e0" stroke-width="2" />
<text x="766" y="1299.6" font-size="22.3" fill="#dcdcdc" text-anchor="middle" >0</text>
<line x1="835" y1="1267" x2="835" y2="1277" stroke="#e0e0e0" stroke-width="2" />
<text x="835" y="1299.6" font-size="22.3" fill="#dcdcdc" text-anchor="middle" >2</text>
<line x1="903" y1="1267" x2="903" y2="1277" stroke="#e0e0e0" stroke-width="2" />
<text x="903" y="1299.6" font-size="22.3" fill="#dcdcdc" text-anchor="middle" >4</text>
<line x1="974.5" y1="1267" x2="974.5" y2="1277" stroke="#e0e0e0" stroke-width="2" />
<text x="974.5" y="1299.6" font-size="22.3" fill="#dcdcdc" text-anchor="middle" >6</text>
<line x1="1043" y1="1267" x2="1043" y2="1277" stroke="#e0e0e0" stroke-width="2" />
<text x="1043" y="1299.6" font-size="22.3" fill="#dcdcdc" text-anchor="middle" >8</text>
<line x1="1112" y1="1267" x2="1112" y2="1277" stroke="#e0e0e0" stroke-width="2" />
<text x="1112" y="1299.6" font-size="22.3" fill="#dcdcdc" text-anchor="middle" >10</text>
<line x1="1183" y1="1267" x2="1183" y2="1277" stroke="#e0e0e0" stroke-width="2" />
<text x="1183" y="1299.6" font-size="22.3" fill="#dcdcdc" text-anchor="middle" >12</text>
<text x="764" y="316.3" font-size="22.3" fill="#dcdcdc" text-anchor="end" textLength="41" lengthAdjust="spacingAndGlyphs" >50%</text>
<text x="765" y="699.4" font-size="22.3" fill="#dcdcdc" text-anchor="end" textLength="36" lengthAdjust="spacingAndGlyphs" >100</text>
<text x="765" y="1084.8" font-size="22.3" fill="#dcdcdc" text-anchor="end" >0</text>
<rect x="767" y="151.5" width="70.5" height="43" fill="#000000" />
<rect x="767" y="153" width="67.5" height="40" fill="url(#hb0)" />
<rect x="767" y="195" width="62.5" height="44" fill="#000000" />
<rect x="767" y="196.5" width="59.5" height="41" fill="url(#hb1)" />
<rect x="767" y="238" width="129" height="44.5" fill="#000000" />
<rect x="767" y="239.5" width="126" height="41.5" fill="url(#hb2)" />
<rect x="767" y="282" width="79" height="44" fill="#000000" />
<rect x="767" y="283.5" width="76" height="41" fill="url(#hb3)" />
<rect x="767" y="326" width="71.5" height="43.5" fill="#000000" />
<rect x="767" y="327.5" width="68.5" height="40.5" fill="url(#hb4)" />
<rect x="767" y="369.5" width="18" height="44" fill="#000000" />
<rect x="767" y="371" width="15" height="41" fill="url(#hb5)" />
<rect x="767" y="798.3" width="218.6" height="43.5" fill="#000000" />
<rect x="767" y="800.7" width="216.6" height="38.7" fill="url(#hbw)" />
<line x1="800" y1="113" x2="800" y2="1267" stroke="#008c00" stroke-width="2" />
<line x1="869.5" y1="113" x2="869.5" y2="1267" stroke="#ffff00" stroke-width="2.2" />
<line x1="1114.5" y1="113" x2="1114.5" y2="1267" stroke="#ff0000" stroke-width="2.8" />
<rect x="1269" y="115.5" width="1257" height="329.5" fill="#232323" />
<text x="1874.6" y="106.8" font-size="22.6" fill="#dcdcdc" text-anchor="middle" textLength="126" lengthAdjust="spacingAndGlyphs" >RGB Balance</text>
<line x1="1260" y1="115.5" x2="1269" y2="115.5" stroke="#e0e0e0" stroke-width="2" />
<text x="1259" y="123.5" font-size="22.3" fill="#dcdcdc" text-anchor="end" >120</text>
<line x1="1269" y1="197.7" x2="2526" y2="197.7" stroke="#9a9a9a" stroke-width="2" />
<line x1="1260" y1="197.7" x2="1269" y2="197.7" stroke="#e0e0e0" stroke-width="2" />
<text x="1259" y="205.7" font-size="22.3" fill="#dcdcdc" text-anchor="end" >110</text>
<line x1="1269" y1="281" x2="2526" y2="281" stroke="#9a9a9a" stroke-width="2" />
<line x1="1260" y1="281" x2="1269" y2="281" stroke="#e0e0e0" stroke-width="2" />
<text x="1259" y="289" font-size="22.3" fill="#dcdcdc" text-anchor="end" >100</text>
<line x1="1269" y1="364" x2="2526" y2="364" stroke="#9a9a9a" stroke-width="2" />
<line x1="1260" y1="364" x2="1269" y2="364" stroke="#e0e0e0" stroke-width="2" />
<text x="1259" y="372" font-size="22.3" fill="#dcdcdc" text-anchor="end" >90</text>
<line x1="1260" y1="445" x2="1269" y2="445" stroke="#e0e0e0" stroke-width="2" />
<text x="1259" y="453" font-size="22.3" fill="#dcdcdc" text-anchor="end" >80</text>
<line x1="1268" y1="115.5" x2="2527" y2="115.5" stroke="#9a9a9a" stroke-width="4" />
<line x1="2526" y1="115.5" x2="2526" y2="445" stroke="#9a9a9a" stroke-width="2" />
<line x1="1269" y1="115.5" x2="1269" y2="446" stroke="#9a9a9a" stroke-width="2" />
<line x1="1268" y1="445" x2="2527" y2="445" stroke="#9a9a9a" stroke-width="2" />
<line x1="1269" y1="445" x2="1269" y2="454" stroke="#e0e0e0" stroke-width="2" />
<text x="1269" y="478" font-size="22.3" fill="#dcdcdc" text-anchor="middle" >0</text>
<line x1="1394.6" y1="445" x2="1394.6" y2="454" stroke="#e0e0e0" stroke-width="2" />
<text x="1394.6" y="478" font-size="22.3" fill="#dcdcdc" text-anchor="middle" >10</text>
<line x1="1520.2" y1="445" x2="1520.2" y2="454" stroke="#e0e0e0" stroke-width="2" />
<text x="1520.2" y="478" font-size="22.3" fill="#dcdcdc" text-anchor="middle" >20</text>
<line x1="1645.8" y1="445" x2="1645.8" y2="454" stroke="#e0e0e0" stroke-width="2" />
<text x="1645.8" y="478" font-size="22.3" fill="#dcdcdc" text-anchor="middle" >30</text>
<line x1="1771.4" y1="445" x2="1771.4" y2="454" stroke="#e0e0e0" stroke-width="2" />
<text x="1771.4" y="478" font-size="22.3" fill="#dcdcdc" text-anchor="middle" >40</text>
<line x1="1897" y1="445" x2="1897" y2="454" stroke="#e0e0e0" stroke-width="2" />
<text x="1897" y="478" font-size="22.3" fill="#dcdcdc" text-anchor="middle" >50</text>
<line x1="2022.6" y1="445" x2="2022.6" y2="454" stroke="#e0e0e0" stroke-width="2" />
<text x="2022.6" y="478" font-size="22.3" fill="#dcdcdc" text-anchor="middle" >60</text>
<line x1="2148.2" y1="445" x2="2148.2" y2="454" stroke="#e0e0e0" stroke-width="2" />
<text x="2148.2" y="478" font-size="22.3" fill="#dcdcdc" text-anchor="middle" >70</text>
<line x1="2273.8" y1="445" x2="2273.8" y2="454" stroke="#e0e0e0" stroke-width="2" />
<text x="2273.8" y="478" font-size="22.3" fill="#dcdcdc" text-anchor="middle" >80</text>
<line x1="2399.4" y1="445" x2="2399.4" y2="454" stroke="#e0e0e0" stroke-width="2" />
<text x="2399.4" y="478" font-size="22.3" fill="#dcdcdc" text-anchor="middle" >90</text>
<line x1="2525" y1="445" x2="2525" y2="454" stroke="#e0e0e0" stroke-width="2" />
<text x="2525" y="478" font-size="22.3" fill="#dcdcdc" text-anchor="middle" >100</text>
<polyline points="1269,278.5 1331.8,278.5 1394.6,278.5 1457.4,278 1520.2,276 1583,274 1645.8,270.4 1708.6,260.4 1771.4,261 1834.2,257 1897,252.6 1959.8,247.6 2022.6,240.7 2085.4,233.5 2148.2,225.4 2211,216 2273.8,217.3 2336.6,217.6 2399.4,217.6 2462.2,218.2 2525,216" fill="none" stroke="#ff0a0a" stroke-width="4.2" stroke-linejoin="round" stroke-linecap="round" />
<polyline points="1269,279 1331.8,279 1394.6,279 1457.4,278.5 1520.2,278.5 1583,277.9 1645.8,277.9 1708.6,276 1771.4,271.3 1834.2,269.7 1897,268.2 1959.8,266.6 2022.6,263.2 2085.4,259.8 2148.2,256.6 2211,252.3 2273.8,254.1 2336.6,253.8 2399.4,254.8 2462.2,254.8 2525,253.5" fill="none" stroke="#008a00" stroke-width="4.2" stroke-linejoin="round" stroke-linecap="round" />
<polyline points="1269,278.5 1331.8,278.5 1394.6,278.5 1457.4,279 1520.2,281.3 1583,283.5 1645.8,286.6 1708.6,299 1771.4,302.5 1834.2,308.8 1897,315.6 1959.8,320.3 2022.6,329.7 2085.4,340.6 2148.2,352.1 2211,365.9 2273.8,364.6 2336.6,364 2399.4,363.4 2462.2,362.7 2525,365.5" fill="none" stroke="#0a0aff" stroke-width="4.2" stroke-linejoin="round" stroke-linecap="round" />
<rect x="1263" y="532" width="1263" height="319.5" fill="#232323" />
<text x="1874.6" y="522.8" font-size="22.6" fill="#dcdcdc" text-anchor="middle" textLength="49" lengthAdjust="spacingAndGlyphs" >EOTF</text>
<line x1="1254" y1="532" x2="1263" y2="532" stroke="#e0e0e0" stroke-width="2" />
<text x="1253" y="540" font-size="22.3" fill="#dcdcdc" text-anchor="end" >0,8</text>
<line x1="1263" y1="611.8" x2="2526" y2="611.8" stroke="#9a9a9a" stroke-width="2" />
<line x1="1254" y1="611.8" x2="1263" y2="611.8" stroke="#e0e0e0" stroke-width="2" />
<text x="1253" y="619.8" font-size="22.3" fill="#dcdcdc" text-anchor="end" >0,6</text>
<line x1="1263" y1="693" x2="2526" y2="693" stroke="#9a9a9a" stroke-width="2" />
<line x1="1254" y1="693" x2="1263" y2="693" stroke="#e0e0e0" stroke-width="2" />
<text x="1253" y="701" font-size="22.3" fill="#dcdcdc" text-anchor="end" >0,4</text>
<line x1="1263" y1="771.8" x2="2526" y2="771.8" stroke="#9a9a9a" stroke-width="2" />
<line x1="1254" y1="771.8" x2="1263" y2="771.8" stroke="#e0e0e0" stroke-width="2" />
<text x="1253" y="779.8" font-size="22.3" fill="#dcdcdc" text-anchor="end" >0,2</text>
<line x1="1254" y1="851.5" x2="1263" y2="851.5" stroke="#e0e0e0" stroke-width="2" />
<text x="1253" y="859.5" font-size="22.3" fill="#dcdcdc" text-anchor="end" >0</text>
<line x1="1262" y1="532" x2="2527" y2="532" stroke="#9a9a9a" stroke-width="4" />
<line x1="2526" y1="532" x2="2526" y2="851.5" stroke="#9a9a9a" stroke-width="2" />
<line x1="1263" y1="532" x2="1263" y2="852.5" stroke="#9a9a9a" stroke-width="2" />
<line x1="1262" y1="851.5" x2="2527" y2="851.5" stroke="#9a9a9a" stroke-width="2" />
<line x1="1263" y1="851.5" x2="1263" y2="860" stroke="#e0e0e0" stroke-width="2" />
<text x="1263" y="884" font-size="22.3" fill="#dcdcdc" text-anchor="middle" >0</text>
<line x1="1389.2" y1="851.5" x2="1389.2" y2="860" stroke="#e0e0e0" stroke-width="2" />
<text x="1389.2" y="884" font-size="22.3" fill="#dcdcdc" text-anchor="middle" >10</text>
<line x1="1515.4" y1="851.5" x2="1515.4" y2="860" stroke="#e0e0e0" stroke-width="2" />
<text x="1515.4" y="884" font-size="22.3" fill="#dcdcdc" text-anchor="middle" >20</text>
<line x1="1641.6" y1="851.5" x2="1641.6" y2="860" stroke="#e0e0e0" stroke-width="2" />
<text x="1641.6" y="884" font-size="22.3" fill="#dcdcdc" text-anchor="middle" >30</text>
<line x1="1767.8" y1="851.5" x2="1767.8" y2="860" stroke="#e0e0e0" stroke-width="2" />
<text x="1767.8" y="884" font-size="22.3" fill="#dcdcdc" text-anchor="middle" >40</text>
<line x1="1894" y1="851.5" x2="1894" y2="860" stroke="#e0e0e0" stroke-width="2" />
<text x="1894" y="884" font-size="22.3" fill="#dcdcdc" text-anchor="middle" >50</text>
<line x1="2020.2" y1="851.5" x2="2020.2" y2="860" stroke="#e0e0e0" stroke-width="2" />
<text x="2020.2" y="884" font-size="22.3" fill="#dcdcdc" text-anchor="middle" >60</text>
<line x1="2146.4" y1="851.5" x2="2146.4" y2="860" stroke="#e0e0e0" stroke-width="2" />
<text x="2146.4" y="884" font-size="22.3" fill="#dcdcdc" text-anchor="middle" >70</text>
<line x1="2272.6" y1="851.5" x2="2272.6" y2="860" stroke="#e0e0e0" stroke-width="2" />
<text x="2272.6" y="884" font-size="22.3" fill="#dcdcdc" text-anchor="middle" >80</text>
<line x1="2398.8" y1="851.5" x2="2398.8" y2="860" stroke="#e0e0e0" stroke-width="2" />
<text x="2398.8" y="884" font-size="22.3" fill="#dcdcdc" text-anchor="middle" >90</text>
<line x1="2525" y1="851.5" x2="2525" y2="860" stroke="#e0e0e0" stroke-width="2" />
<text x="2525" y="884" font-size="22.3" fill="#dcdcdc" text-anchor="middle" >100</text>
<polyline points="1263,848.8 1326.1,838 1389.2,821.8 1515.4,780.5 1641.6,740.3 1767.8,700 1894,661 2020.2,621 2146.4,581 2209.5,558 2272.6,532.7 2525,532.7" fill="none" stroke="#8a8a8a" stroke-width="3.2" stroke-linejoin="round" stroke-linecap="round" />
<polyline points="1263,847 1300.86,838 1326.1,830 1363.96,818 1389.2,810.3 1452.3,790 1490.16,779 1515.4,770 1578.5,750 1641.6,729 1704.7,710 1767.8,690.5 1830.9,670 1894,650 1957.1,630 2020.2,609 2083.3,590 2146.4,569.8 2209.5,551 2247.36,537 2272.6,532.7 2525,532.7" fill="none" stroke="#ffff00" stroke-width="4.2" stroke-linejoin="round" stroke-linecap="round" />
<rect x="2137.5" y="795" width="381.5" height="48" fill="url(#sel)" stroke="#2a2a2a" stroke-width="1"/>
<text x="2145" y="830.6" font-size="29.5" fill="#f0f0f0" text-anchor="start" textLength="313" lengthAdjust="spacingAndGlyphs" >21 Point 5% step 0-100%</text>
<path d="M2493,814.5 H2510 L2501.5,824.5 Z" fill="#000000"/>
<rect x="2318.5" y="891" width="205" height="49" fill="url(#sel)" stroke="#2a2a2a" stroke-width="1"/>
<text x="2327" y="925.4" font-size="29.5" fill="#f0f0f0" text-anchor="start" textLength="60" lengthAdjust="spacingAndGlyphs" >2000</text>
<path d="M2497.5,910.5 H2514.5 L2506,920.5 Z" fill="#000000"/>
<rect x="1256" y="948" width="1270" height="328" fill="#232323" />
<text x="1874.6" y="939.6" font-size="22.6" fill="#dcdcdc" text-anchor="middle" textLength="120" lengthAdjust="spacingAndGlyphs" >DeltaE 2000</text>
<line x1="1247" y1="948" x2="1256" y2="948" stroke="#e0e0e0" stroke-width="2" />
<text x="1246" y="956" font-size="22.3" fill="#dcdcdc" text-anchor="end" >12</text>
<line x1="1256" y1="1003" x2="2526" y2="1003" stroke="#9a9a9a" stroke-width="2" />
<line x1="1247" y1="1003" x2="1256" y2="1003" stroke="#e0e0e0" stroke-width="2" />
<text x="1246" y="1011" font-size="22.3" fill="#dcdcdc" text-anchor="end" >10</text>
<line x1="1256" y1="1058" x2="2526" y2="1058" stroke="#9a9a9a" stroke-width="2" />
<line x1="1247" y1="1058" x2="1256" y2="1058" stroke="#e0e0e0" stroke-width="2" />
<text x="1246" y="1066" font-size="22.3" fill="#dcdcdc" text-anchor="end" >8</text>
<line x1="1256" y1="1113.5" x2="2526" y2="1113.5" stroke="#9a9a9a" stroke-width="2" />
<line x1="1247" y1="1113.5" x2="1256" y2="1113.5" stroke="#e0e0e0" stroke-width="2" />
<text x="1246" y="1121.5" font-size="22.3" fill="#dcdcdc" text-anchor="end" >6</text>
<line x1="1256" y1="1167.5" x2="2526" y2="1167.5" stroke="#9a9a9a" stroke-width="2" />
<line x1="1247" y1="1167.5" x2="1256" y2="1167.5" stroke="#e0e0e0" stroke-width="2" />
<text x="1246" y="1175.5" font-size="22.3" fill="#dcdcdc" text-anchor="end" >4</text>
<line x1="1256" y1="1222" x2="2526" y2="1222" stroke="#9a9a9a" stroke-width="2" />
<line x1="1247" y1="1222" x2="1256" y2="1222" stroke="#e0e0e0" stroke-width="2" />
<text x="1246" y="1230" font-size="22.3" fill="#dcdcdc" text-anchor="end" >2</text>
<line x1="1247" y1="1276" x2="1256" y2="1276" stroke="#e0e0e0" stroke-width="2" />
<text x="1246" y="1284" font-size="22.3" fill="#dcdcdc" text-anchor="end" >0</text>
<line x1="1255" y1="948" x2="2527" y2="948" stroke="#9a9a9a" stroke-width="4" />
<line x1="2526" y1="948" x2="2526" y2="1276" stroke="#9a9a9a" stroke-width="2" />
<line x1="1256" y1="948" x2="1256" y2="1277" stroke="#9a9a9a" stroke-width="2" />
<line x1="1255" y1="1276" x2="2527" y2="1276" stroke="#9a9a9a" stroke-width="2" />
<line x1="1256" y1="1276" x2="1256" y2="1285" stroke="#e0e0e0" stroke-width="2" />
<line x1="1316.43" y1="1276" x2="1316.43" y2="1285" stroke="#e0e0e0" stroke-width="2" />
<line x1="1376.86" y1="1276" x2="1376.86" y2="1285" stroke="#e0e0e0" stroke-width="2" />
<line x1="1437.29" y1="1276" x2="1437.29" y2="1285" stroke="#e0e0e0" stroke-width="2" />
<line x1="1497.71" y1="1276" x2="1497.71" y2="1285" stroke="#e0e0e0" stroke-width="2" />
<line x1="1558.14" y1="1276" x2="1558.14" y2="1285" stroke="#e0e0e0" stroke-width="2" />
<line x1="1618.57" y1="1276" x2="1618.57" y2="1285" stroke="#e0e0e0" stroke-width="2" />
<line x1="1679" y1="1276" x2="1679" y2="1285" stroke="#e0e0e0" stroke-width="2" />
<line x1="1739.43" y1="1276" x2="1739.43" y2="1285" stroke="#e0e0e0" stroke-width="2" />
<line x1="1799.86" y1="1276" x2="1799.86" y2="1285" stroke="#e0e0e0" stroke-width="2" />
<line x1="1860.29" y1="1276" x2="1860.29" y2="1285" stroke="#e0e0e0" stroke-width="2" />
<line x1="1920.71" y1="1276" x2="1920.71" y2="1285" stroke="#e0e0e0" stroke-width="2" />
<line x1="1981.14" y1="1276" x2="1981.14" y2="1285" stroke="#e0e0e0" stroke-width="2" />
<line x1="2041.57" y1="1276" x2="2041.57" y2="1285" stroke="#e0e0e0" stroke-width="2" />
<line x1="2102" y1="1276" x2="2102" y2="1285" stroke="#e0e0e0" stroke-width="2" />
<line x1="2162.43" y1="1276" x2="2162.43" y2="1285" stroke="#e0e0e0" stroke-width="2" />
<line x1="2222.86" y1="1276" x2="2222.86" y2="1285" stroke="#e0e0e0" stroke-width="2" />
<line x1="2283.29" y1="1276" x2="2283.29" y2="1285" stroke="#e0e0e0" stroke-width="2" />
<line x1="2343.71" y1="1276" x2="2343.71" y2="1285" stroke="#e0e0e0" stroke-width="2" />
<line x1="2404.14" y1="1276" x2="2404.14" y2="1285" stroke="#e0e0e0" stroke-width="2" />
<line x1="2464.57" y1="1276" x2="2464.57" y2="1285" stroke="#e0e0e0" stroke-width="2" />
<line x1="2525" y1="1276" x2="2525" y2="1285" stroke="#e0e0e0" stroke-width="2" />
<text x="1286.21" y="1300" font-size="22.3" fill="#dcdcdc" text-anchor="middle" >0</text>
<text x="1346.64" y="1300" font-size="22.3" fill="#dcdcdc" text-anchor="middle" >5</text>
<text x="1407.07" y="1300" font-size="22.3" fill="#dcdcdc" text-anchor="middle" >10</text>
<text x="1467.5" y="1300" font-size="22.3" fill="#dcdcdc" text-anchor="middle" >15</text>
<rect x="1444.5" y="1271.77" width="46" height="4.23" fill="#000000" />
<rect x="1446.5" y="1273.77" width="42" height="1.23" fill="url(#vb3)" />
<text x="1527.93" y="1300" font-size="22.3" fill="#dcdcdc" text-anchor="middle" >20</text>
<rect x="1504.93" y="1267.67" width="46" height="8.33" fill="#000000" />
<rect x="1506.93" y="1269.67" width="42" height="5.33" fill="url(#vb4)" />
<text x="1588.36" y="1300" font-size="22.3" fill="#dcdcdc" text-anchor="middle" >25</text>
<rect x="1565.36" y="1263.57" width="46" height="12.43" fill="#000000" />
<rect x="1567.36" y="1265.57" width="42" height="9.43" fill="url(#vb5)" />
<text x="1648.79" y="1300" font-size="22.3" fill="#dcdcdc" text-anchor="middle" >30</text>
<rect x="1625.79" y="1253.18" width="46" height="22.82" fill="#000000" />
<rect x="1627.79" y="1255.18" width="42" height="19.82" fill="url(#vb6)" />
<text x="1709.21" y="1300" font-size="22.3" fill="#dcdcdc" text-anchor="middle" >35</text>
<rect x="1686.21" y="1228.58" width="46" height="47.42" fill="#000000" />
<rect x="1688.21" y="1230.58" width="42" height="44.42" fill="url(#vb7)" />
<text x="1769.64" y="1300" font-size="22.3" fill="#dcdcdc" text-anchor="middle" >40</text>
<rect x="1746.64" y="1224.21" width="46" height="51.79" fill="#000000" />
<rect x="1748.64" y="1226.21" width="42" height="48.79" fill="url(#vb8)" />
<text x="1830.07" y="1300" font-size="22.3" fill="#dcdcdc" text-anchor="middle" >45</text>
<rect x="1807.07" y="1213.55" width="46" height="62.45" fill="#000000" />
<rect x="1809.07" y="1215.55" width="42" height="59.45" fill="url(#vb9)" />
<text x="1890.5" y="1300" font-size="22.3" fill="#dcdcdc" text-anchor="middle" >50</text>
<rect x="1867.5" y="1200.7" width="46" height="75.3" fill="#000000" />
<rect x="1869.5" y="1202.7" width="42" height="72.3" fill="url(#vb10)" />
<text x="1950.93" y="1300" font-size="22.3" fill="#dcdcdc" text-anchor="middle" >55</text>
<rect x="1927.93" y="1191.41" width="46" height="84.59" fill="#000000" />
<rect x="1929.93" y="1193.41" width="42" height="81.59" fill="url(#vb11)" />
<text x="2011.36" y="1300" font-size="22.3" fill="#dcdcdc" text-anchor="middle" >60</text>
<rect x="1988.36" y="1176.92" width="46" height="99.08" fill="#000000" />
<rect x="1990.36" y="1178.92" width="42" height="96.08" fill="url(#vb12)" />
<text x="2071.79" y="1300" font-size="22.3" fill="#dcdcdc" text-anchor="middle" >65</text>
<rect x="2048.79" y="1160.25" width="46" height="115.75" fill="#000000" />
<rect x="2050.79" y="1162.25" width="42" height="112.75" fill="url(#vb13)" />
<text x="2132.21" y="1300" font-size="22.3" fill="#dcdcdc" text-anchor="middle" >70</text>
<rect x="2109.21" y="1143.57" width="46" height="132.43" fill="#000000" />
<rect x="2111.21" y="1145.57" width="42" height="129.43" fill="url(#vb14)" />
<text x="2192.64" y="1300" font-size="22.3" fill="#dcdcdc" text-anchor="middle" >75</text>
<rect x="2169.64" y="1123.35" width="46" height="152.65" fill="#000000" />
<rect x="2171.64" y="1125.35" width="42" height="149.65" fill="url(#vb15)" />
<text x="2253.07" y="1300" font-size="22.3" fill="#dcdcdc" text-anchor="middle" >80</text>
<rect x="2230.07" y="1099.29" width="46" height="176.71" fill="#000000" />
<rect x="2232.07" y="1101.29" width="42" height="173.71" fill="url(#vb16)" />
<text x="2313.5" y="1300" font-size="22.3" fill="#dcdcdc" text-anchor="middle" >85</text>
<rect x="2290.5" y="1101.48" width="46" height="174.52" fill="#000000" />
<rect x="2292.5" y="1103.48" width="42" height="171.52" fill="url(#vb17)" />
<text x="2373.93" y="1300" font-size="22.3" fill="#dcdcdc" text-anchor="middle" >90</text>
<rect x="2350.93" y="1101.48" width="46" height="174.52" fill="#000000" />
<rect x="2352.93" y="1103.48" width="42" height="171.52" fill="url(#vb18)" />
<text x="2434.36" y="1300" font-size="22.3" fill="#dcdcdc" text-anchor="middle" >95</text>
<rect x="2411.36" y="1101.48" width="46" height="174.52" fill="#000000" />
<rect x="2413.36" y="1103.48" width="42" height="171.52" fill="url(#vb19)" />
<text x="2494.79" y="1300" font-size="22.3" fill="#dcdcdc" text-anchor="middle" >100</text>
<rect x="2471.79" y="1097.65" width="46" height="178.35" fill="#000000" />
<rect x="2473.79" y="1099.65" width="42" height="175.35" fill="url(#vb20)" />
<line x1="1257" y1="1001" x2="2526" y2="1001" stroke="#ff1010" stroke-width="2.5" />
<line x1="1257" y1="1194" x2="2526" y2="1194" stroke="#f0f000" stroke-width="2.2" />
<line x1="1257" y1="1249" x2="2526" y2="1249" stroke="#008a00" stroke-width="2.2" />
<g><g clip-path="url(#locus)"><rect x="52" y="125" width="95" height="5.6" fill="url(#c1)"/><rect x="43" y="130" width="144" height="5.6" fill="url(#c2)"/><rect x="39" y="135" width="184" height="5.6" fill="url(#c3)"/><rect x="36" y="140" width="223" height="5.6" fill="url(#c4)"/><rect x="33" y="145" width="261" height="5.6" fill="url(#c5)"/><rect x="32" y="150" width="297" height="5.6" fill="url(#c6)"/><rect x="31" y="155" width="333" height="5.6" fill="url(#c7)"/><rect x="30" y="160" width="370" height="5.6" fill="url(#c8)"/><rect x="30" y="165" width="405" height="5.6" fill="url(#c9)"/><rect x="30" y="170" width="440" height="5.6" fill="url(#c10)"/><rect x="30" y="175" width="475" height="5.6" fill="url(#c11)"/><rect x="30" y="180" width="510" height="5.6" fill="url(#c12)"/><rect x="30" y="185" width="545" height="5.6" fill="url(#c13)"/><rect x="31" y="190" width="579" height="5.6" fill="url(#c14)"/><rect x="31" y="195" width="615" height="5.6" fill="url(#c15)"/><rect x="32" y="200" width="649" height="5.6" fill="url(#c16)"/><rect x="33" y="205" width="670" height="5.6" fill="url(#c17)"/><rect x="34" y="210" width="669" height="5.6" fill="url(#c18)"/><rect x="34" y="215" width="665" height="5.6" fill="url(#c19)"/><rect x="35" y="220" width="660" height="5.6" fill="url(#c20)"/><rect x="36" y="225" width="655" height="5.6" fill="url(#c21)"/><rect x="38" y="230" width="649" height="5.6" fill="url(#c22)"/><rect x="39" y="235" width="644" height="5.6" fill="url(#c23)"/><rect x="40" y="240" width="640" height="5.6" fill="url(#c24)"/><rect x="41" y="245" width="635" height="5.6" fill="url(#c25)"/><rect x="42" y="250" width="630" height="5.6" fill="url(#c26)"/><rect x="44" y="255" width="624" height="5.6" fill="url(#c27)"/><rect x="45" y="260" width="619" height="5.6" fill="url(#c28)"/><rect x="46" y="265" width="614" height="5.6" fill="url(#c29)"/><rect x="48" y="270" width="608" height="5.6" fill="url(#c30)"/><rect x="49" y="275" width="603" height="5.6" fill="url(#c31)"/><rect x="51" y="280" width="597" height="5.6" fill="url(#c32)"/><rect x="52" y="285" width="592" height="5.6" fill="url(#c33)"/><rect x="54" y="290" width="586" height="5.6" fill="url(#c34)"/><rect x="55" y="295" width="581" height="5.6" fill="url(#c35)"/><rect x="57" y="300" width="575" height="5.6" fill="url(#c36)"/><rect x="59" y="305" width="569" height="5.6" fill="url(#c37)"/><rect x="60" y="310" width="565" height="5.6" fill="url(#c38)"/><rect x="62" y="315" width="559" height="5.6" fill="url(#c39)"/><rect x="64" y="320" width="553" height="5.6" fill="url(#c40)"/><rect x="65" y="325" width="548" height="5.6" fill="url(#c41)"/><rect x="67" y="330" width="542" height="5.6" fill="url(#c42)"/><rect x="69" y="335" width="536" height="5.6" fill="url(#c43)"/><rect x="71" y="340" width="530" height="5.6" fill="url(#c44)"/><rect x="73" y="345" width="524" height="5.6" fill="url(#c45)"/><rect x="74" y="350" width="519" height="5.6" fill="url(#c46)"/><rect x="76" y="355" width="513" height="5.6" fill="url(#c47)"/><rect x="78" y="360" width="507" height="5.6" fill="url(#c48)"/><rect x="80" y="365" width="501" height="5.6" fill="url(#c49)"/><rect x="82" y="370" width="495" height="5.6" fill="url(#c50)"/><rect x="84" y="375" width="489" height="5.6" fill="url(#c51)"/><rect x="86" y="380" width="484" height="5.6" fill="url(#c52)"/><rect x="88" y="385" width="478" height="5.6" fill="url(#c53)"/><rect x="90" y="390" width="472" height="5.6" fill="url(#c54)"/><rect x="93" y="395" width="465" height="5.6" fill="url(#c55)"/><rect x="95" y="400" width="459" height="5.6" fill="url(#c56)"/><rect x="97" y="405" width="453" height="5.6" fill="url(#c57)"/><rect x="99" y="410" width="447" height="5.6" fill="url(#c58)"/><rect x="101" y="415" width="441" height="5.6" fill="url(#c59)"/><rect x="104" y="420" width="434" height="5.6" fill="url(#c60)"/><rect x="106" y="425" width="428" height="5.6" fill="url(#c61)"/><rect x="108" y="430" width="422" height="5.6" fill="url(#c62)"/><rect x="111" y="435" width="415" height="5.6" fill="url(#c63)"/><rect x="113" y="440" width="409" height="5.6" fill="url(#c64)"/><rect x="115" y="445" width="403" height="5.6" fill="url(#c65)"/><rect x="118" y="450" width="397" height="5.6" fill="url(#c66)"/><rect x="120" y="455" width="391" height="5.6" fill="url(#c67)"/><rect x="123" y="460" width="384" height="5.6" fill="url(#c68)"/><rect x="125" y="465" width="378" height="5.6" fill="url(#c69)"/><rect x="127" y="470" width="372" height="5.6" fill="url(#c70)"/><rect x="130" y="475" width="365" height="5.6" fill="url(#c71)"/><rect x="132" y="480" width="359" height="5.6" fill="url(#c72)"/><rect x="135" y="485" width="352" height="5.6" fill="url(#c73)"/><rect x="137" y="490" width="346" height="5.6" fill="url(#c74)"/><rect x="140" y="495" width="339" height="5.6" fill="url(#c75)"/><rect x="143" y="500" width="332" height="5.6" fill="url(#c76)"/><rect x="145" y="505" width="326" height="5.6" fill="url(#c77)"/><rect x="148" y="510" width="319" height="5.6" fill="url(#c78)"/><rect x="150" y="515" width="313" height="5.6" fill="url(#c79)"/><rect x="153" y="520" width="307" height="5.6" fill="url(#c80)"/><rect x="156" y="525" width="300" height="5.6" fill="url(#c81)"/><rect x="159" y="530" width="293" height="5.6" fill="url(#c82)"/><rect x="161" y="535" width="287" height="5.6" fill="url(#c83)"/><rect x="164" y="540" width="280" height="5.6" fill="url(#c84)"/><rect x="167" y="545" width="273" height="5.6" fill="url(#c85)"/><rect x="170" y="550" width="266" height="5.6" fill="url(#c86)"/><rect x="173" y="555" width="259" height="5.6" fill="url(#c87)"/><rect x="176" y="560" width="252" height="5.6" fill="url(#c88)"/><rect x="179" y="565" width="245" height="5.6" fill="url(#c89)"/><rect x="182" y="570" width="238" height="5.6" fill="url(#c90)"/><rect x="185" y="575" width="231" height="5.6" fill="url(#c91)"/><rect x="188" y="580" width="224" height="5.6" fill="url(#c92)"/><rect x="192" y="585" width="216" height="5.6" fill="url(#c93)"/><rect x="195" y="590" width="210" height="5.6" fill="url(#c94)"/><rect x="198" y="595" width="203" height="5.6" fill="url(#c95)"/><rect x="202" y="600" width="195" height="5.6" fill="url(#c96)"/><rect x="205" y="605" width="188" height="5.6" fill="url(#c97)"/><rect x="209" y="610" width="180" height="5.6" fill="url(#c98)"/><rect x="212" y="615" width="173" height="5.6" fill="url(#c99)"/><rect x="216" y="620" width="165" height="5.6" fill="url(#c100)"/><rect x="220" y="625" width="157" height="5.6" fill="url(#c101)"/><rect x="224" y="630" width="149" height="5.6" fill="url(#c102)"/><rect x="228" y="635" width="141" height="5.6" fill="url(#c103)"/><rect x="233" y="640" width="132" height="5.6" fill="url(#c104)"/><rect x="237" y="645" width="124" height="5.6" fill="url(#c105)"/><rect x="241" y="650" width="116" height="5.6" fill="url(#c106)"/><rect x="246" y="655" width="107" height="5.6" fill="url(#c107)"/><rect x="251" y="660" width="99" height="5.6" fill="url(#c108)"/><rect x="256" y="665" width="90" height="5.6" fill="url(#c109)"/><rect x="260" y="670" width="82" height="5.6" fill="url(#c110)"/><rect x="265" y="675" width="73" height="5.6" fill="url(#c111)"/><rect x="270" y="680" width="64" height="5.6" fill="url(#c112)"/><rect x="275" y="685" width="55" height="5.6" fill="url(#c113)"/><rect x="280" y="690" width="46" height="5.6" fill="url(#c114)"/><rect x="285" y="695" width="37" height="5.6" fill="url(#c115)"/><rect x="290" y="700" width="28" height="5.6" fill="url(#c116)"/><rect x="295" y="705" width="19" height="5.6" fill="url(#c117)"/></g><g clip-path="url(#tri)"><rect x="88" y="125" width="27" height="4.6" fill="url(#c118)"/><rect x="89" y="129" width="56" height="4.6" fill="url(#c119)"/><rect x="90" y="133" width="85" height="4.6" fill="url(#c120)"/><rect x="91" y="137" width="114" height="4.6" fill="url(#c121)"/><rect x="92" y="141" width="143" height="4.6" fill="url(#c122)"/><rect x="93" y="145" width="172" height="4.6" fill="url(#c123)"/><rect x="94" y="149" width="201" height="4.6" fill="url(#c124)"/><rect x="94" y="153" width="231" height="4.6" fill="url(#c125)"/><rect x="95" y="157" width="260" height="4.6" fill="url(#c126)"/><rect x="96" y="161" width="289" height="4.6" fill="url(#c127)"/><rect x="97" y="165" width="318" height="4.6" fill="url(#c128)"/><rect x="98" y="169" width="347" height="4.6" fill="url(#c129)"/><rect x="99" y="173" width="376" height="4.6" fill="url(#c130)"/><rect x="100" y="177" width="404" height="4.6" fill="url(#c131)"/><rect x="101" y="181" width="433" height="4.6" fill="url(#c132)"/><rect x="102" y="185" width="462" height="4.6" fill="url(#c133)"/><rect x="103" y="189" width="491" height="4.6" fill="url(#c134)"/><rect x="104" y="193" width="520" height="4.6" fill="url(#c135)"/><rect x="105" y="197" width="527" height="4.6" fill="url(#c136)"/><rect x="106" y="201" width="524" height="4.6" fill="url(#c137)"/><rect x="107" y="205" width="518" height="4.6" fill="url(#c138)"/><rect x="108" y="209" width="513" height="4.6" fill="url(#c139)"/><rect x="109" y="213" width="508" height="4.6" fill="url(#c140)"/><rect x="110" y="217" width="503" height="4.6" fill="url(#c141)"/><rect x="111" y="221" width="497" height="4.6" fill="url(#c142)"/><rect x="111" y="225" width="493" height="4.6" fill="url(#c143)"/><rect x="112" y="229" width="488" height="4.6" fill="url(#c144)"/><rect x="113" y="233" width="482" height="4.6" fill="url(#c145)"/><rect x="114" y="237" width="477" height="4.6" fill="url(#c146)"/><rect x="115" y="241" width="472" height="4.6" fill="url(#c147)"/><rect x="116" y="245" width="467" height="4.6" fill="url(#c148)"/><rect x="117" y="249" width="461" height="4.6" fill="url(#c149)"/><rect x="118" y="253" width="456" height="4.6" fill="url(#c150)"/><rect x="119" y="257" width="451" height="4.6" fill="url(#c151)"/><rect x="120" y="261" width="446" height="4.6" fill="url(#c152)"/><rect x="121" y="265" width="440" height="4.6" fill="url(#c153)"/><rect x="122" y="269" width="435" height="4.6" fill="url(#c154)"/><rect x="123" y="273" width="430" height="4.6" fill="url(#c155)"/><rect x="124" y="277" width="425" height="4.6" fill="url(#c156)"/><rect x="125" y="281" width="419" height="4.6" fill="url(#c157)"/><rect x="126" y="285" width="414" height="4.6" fill="url(#c158)"/><rect x="127" y="289" width="409" height="4.6" fill="url(#c159)"/><rect x="128" y="293" width="403" height="4.6" fill="url(#c160)"/><rect x="128" y="297" width="399" height="4.6" fill="url(#c161)"/><rect x="129" y="301" width="394" height="4.6" fill="url(#c162)"/><rect x="130" y="305" width="389" height="4.6" fill="url(#c163)"/><rect x="131" y="309" width="383" height="4.6" fill="url(#c164)"/><rect x="132" y="313" width="378" height="4.6" fill="url(#c165)"/><rect x="133" y="317" width="373" height="4.6" fill="url(#c166)"/><rect x="134" y="321" width="368" height="4.6" fill="url(#c167)"/><rect x="135" y="325" width="362" height="4.6" fill="url(#c168)"/><rect x="136" y="329" width="357" height="4.6" fill="url(#c169)"/><rect x="137" y="333" width="352" height="4.6" fill="url(#c170)"/><rect x="138" y="337" width="346" height="4.6" fill="url(#c171)"/><rect x="139" y="341" width="341" height="4.6" fill="url(#c172)"/><rect x="140" y="345" width="336" height="4.6" fill="url(#c173)"/><rect x="141" y="349" width="331" height="4.6" fill="url(#c174)"/><rect x="142" y="353" width="325" height="4.6" fill="url(#c175)"/><rect x="143" y="357" width="320" height="4.6" fill="url(#c176)"/><rect x="144" y="361" width="315" height="4.6" fill="url(#c177)"/><rect x="145" y="365" width="310" height="4.6" fill="url(#c178)"/><rect x="145" y="369" width="305" height="4.6" fill="url(#c179)"/><rect x="146" y="373" width="300" height="4.6" fill="url(#c180)"/><rect x="147" y="377" width="295" height="4.6" fill="url(#c181)"/><rect x="148" y="381" width="289" height="4.6" fill="url(#c182)"/><rect x="149" y="385" width="284" height="4.6" fill="url(#c183)"/><rect x="150" y="389" width="279" height="4.6" fill="url(#c184)"/><rect x="151" y="393" width="274" height="4.6" fill="url(#c185)"/><rect x="152" y="397" width="268" height="4.6" fill="url(#c186)"/><rect x="153" y="401" width="263" height="4.6" fill="url(#c187)"/><rect x="154" y="405" width="258" height="4.6" fill="url(#c188)"/><rect x="155" y="409" width="253" height="4.6" fill="url(#c189)"/><rect x="156" y="413" width="247" height="4.6" fill="url(#c190)"/><rect x="157" y="417" width="242" height="4.6" fill="url(#c191)"/><rect x="158" y="421" width="237" height="4.6" fill="url(#c192)"/><rect x="159" y="425" width="231" height="4.6" fill="url(#c193)"/><rect x="160" y="429" width="226" height="4.6" fill="url(#c194)"/><rect x="161" y="433" width="221" height="4.6" fill="url(#c195)"/><rect x="162" y="437" width="216" height="4.6" fill="url(#c196)"/><rect x="162" y="441" width="211" height="4.6" fill="url(#c197)"/><rect x="163" y="445" width="206" height="4.6" fill="url(#c198)"/><rect x="164" y="449" width="201" height="4.6" fill="url(#c199)"/><rect x="165" y="453" width="196" height="4.6" fill="url(#c200)"/><rect x="166" y="457" width="190" height="4.6" fill="url(#c201)"/><rect x="167" y="461" width="185" height="4.6" fill="url(#c202)"/><rect x="168" y="465" width="180" height="4.6" fill="url(#c203)"/><rect x="169" y="469" width="174" height="4.6" fill="url(#c204)"/><rect x="170" y="473" width="169" height="4.6" fill="url(#c205)"/><rect x="171" y="477" width="164" height="4.6" fill="url(#c206)"/><rect x="172" y="481" width="159" height="4.6" fill="url(#c207)"/><rect x="173" y="485" width="153" height="4.6" fill="url(#c208)"/><rect x="174" y="489" width="148" height="4.6" fill="url(#c209)"/><rect x="175" y="493" width="143" height="4.6" fill="url(#c210)"/><rect x="176" y="497" width="138" height="4.6" fill="url(#c211)"/><rect x="177" y="501" width="132" height="4.6" fill="url(#c212)"/><rect x="178" y="505" width="127" height="4.6" fill="url(#c213)"/><rect x="179" y="509" width="122" height="4.6" fill="url(#c214)"/><rect x="179" y="513" width="118" height="4.6" fill="url(#c215)"/><rect x="180" y="517" width="112" height="4.6" fill="url(#c216)"/><rect x="181" y="521" width="107" height="4.6" fill="url(#c217)"/><rect x="182" y="525" width="102" height="4.6" fill="url(#c218)"/><rect x="183" y="529" width="96" height="4.6" fill="url(#c219)"/><rect x="184" y="533" width="91" height="4.6" fill="url(#c220)"/><rect x="185" y="537" width="86" height="4.6" fill="url(#c221)"/><rect x="186" y="541" width="81" height="4.6" fill="url(#c222)"/><rect x="187" y="545" width="75" height="4.6" fill="url(#c223)"/><rect x="188" y="549" width="70" height="4.6" fill="url(#c224)"/><rect x="189" y="553" width="65" height="4.6" fill="url(#c225)"/><rect x="190" y="557" width="60" height="4.6" fill="url(#c226)"/><rect x="191" y="561" width="54" height="4.6" fill="url(#c227)"/><rect x="192" y="565" width="49" height="4.6" fill="url(#c228)"/><rect x="193" y="569" width="44" height="4.6" fill="url(#c229)"/><rect x="194" y="573" width="38" height="4.6" fill="url(#c230)"/><rect x="195" y="577" width="33" height="4.6" fill="url(#c231)"/><rect x="196" y="581" width="28" height="4.6" fill="url(#c232)"/><rect x="196" y="585" width="24" height="4.6" fill="url(#c233)"/><rect x="197" y="589" width="18" height="4.6" fill="url(#c234)"/><rect x="198" y="593" width="13" height="4.6" fill="url(#c235)"/><rect x="199" y="597" width="8" height="4.6" fill="url(#c236)"/></g></g>
<rect x="483" y="501" width="226" height="226" fill="#333333" />
<rect x="488" y="505" width="216" height="216" fill="#787878" />
<g clip-path="url(#insclip)"><rect x="487" y="507" width="218" height="4.6" fill="url(#c237)"/><rect x="487" y="511" width="218" height="4.6" fill="url(#c238)"/><rect x="487" y="515" width="218" height="4.6" fill="url(#c239)"/><rect x="487" y="519" width="218" height="4.6" fill="url(#c240)"/><rect x="487" y="523" width="218" height="4.6" fill="url(#c241)"/><rect x="487" y="527" width="218" height="4.6" fill="url(#c242)"/><rect x="487" y="531" width="218" height="4.6" fill="url(#c243)"/><rect x="487" y="535" width="218" height="4.6" fill="url(#c244)"/><rect x="487" y="539" width="218" height="4.6" fill="url(#c245)"/><rect x="487" y="543" width="218" height="4.6" fill="url(#c246)"/><rect x="487" y="547" width="218" height="4.6" fill="url(#c247)"/><rect x="487" y="551" width="218" height="4.6" fill="url(#c248)"/><rect x="487" y="555" width="218" height="4.6" fill="url(#c249)"/><rect x="487" y="559" width="218" height="4.6" fill="url(#c250)"/><rect x="487" y="563" width="218" height="4.6" fill="url(#c251)"/><rect x="487" y="567" width="218" height="4.6" fill="url(#c252)"/><rect x="487" y="571" width="218" height="4.6" fill="url(#c253)"/><rect x="487" y="575" width="218" height="4.6" fill="url(#c254)"/><rect x="487" y="579" width="218" height="4.6" fill="url(#c255)"/><rect x="487" y="583" width="218" height="4.6" fill="url(#c256)"/><rect x="487" y="587" width="218" height="4.6" fill="url(#c257)"/><rect x="487" y="591" width="218" height="4.6" fill="url(#c258)"/><rect x="487" y="595" width="218" height="4.6" fill="url(#c259)"/><rect x="487" y="599" width="218" height="4.6" fill="url(#c260)"/><rect x="487" y="603" width="218" height="4.6" fill="url(#c261)"/><rect x="487" y="607" width="218" height="4.6" fill="url(#c262)"/><rect x="487" y="611" width="218" height="4.6" fill="url(#c263)"/><rect x="487" y="615" width="218" height="4.6" fill="url(#c264)"/><rect x="487" y="619" width="218" height="4.6" fill="url(#c265)"/><rect x="487" y="623" width="218" height="4.6" fill="url(#c266)"/><rect x="487" y="627" width="218" height="4.6" fill="url(#c267)"/><rect x="487" y="631" width="218" height="4.6" fill="url(#c268)"/><rect x="487" y="635" width="218" height="4.6" fill="url(#c269)"/><rect x="487" y="639" width="218" height="4.6" fill="url(#c270)"/><rect x="487" y="643" width="218" height="4.6" fill="url(#c271)"/><rect x="487" y="647" width="218" height="4.6" fill="url(#c272)"/><rect x="487" y="651" width="218" height="4.6" fill="url(#c273)"/><rect x="487" y="655" width="218" height="4.6" fill="url(#c274)"/><rect x="487" y="659" width="218" height="4.6" fill="url(#c275)"/><rect x="487" y="663" width="218" height="4.6" fill="url(#c276)"/><rect x="487" y="667" width="218" height="4.6" fill="url(#c277)"/><rect x="487" y="671" width="218" height="4.6" fill="url(#c278)"/><rect x="487" y="675" width="218" height="4.6" fill="url(#c279)"/><rect x="487" y="679" width="218" height="4.6" fill="url(#c280)"/><rect x="487" y="683" width="218" height="4.6" fill="url(#c281)"/><rect x="487" y="687" width="218" height="4.6" fill="url(#c282)"/><rect x="487" y="691" width="218" height="4.6" fill="url(#c283)"/><rect x="487" y="695" width="218" height="4.6" fill="url(#c284)"/><rect x="487" y="699" width="218" height="4.6" fill="url(#c285)"/><rect x="487" y="703" width="218" height="4.6" fill="url(#c286)"/><rect x="487" y="707" width="218" height="4.6" fill="url(#c287)"/><rect x="487" y="711" width="218" height="4.6" fill="url(#c288)"/><rect x="487" y="715" width="218" height="4.6" fill="url(#c289)"/></g>
<rect x="31.5" y="113.5" width="677" height="612" fill="none" stroke="#9a9a9a" stroke-width="2"/>
<rect x="131.5" y="156.5" width="21" height="21" fill="none" stroke="#ffffff" stroke-width="2.6"/>
<rect x="240" y="179.5" width="21" height="21" fill="none" stroke="#ffffff" stroke-width="2.6"/>
<rect x="169.2" y="243.5" width="21" height="21" fill="none" stroke="#ffffff" stroke-width="2.6"/>
<rect x="402.3" y="214.9" width="21" height="21" fill="none" stroke="#ffffff" stroke-width="2.6"/>
<rect x="300.1" y="289.5" width="21" height="21" fill="none" stroke="#ffffff" stroke-width="2.6"/>
<rect x="219" y="354.2" width="21" height="21" fill="none" stroke="#ffffff" stroke-width="2.6"/>
<rect x="233.5" y="235.5" width="21" height="21" fill="none" stroke="#000000" stroke-width="2.6"/>
<circle cx="141.7" cy="158.7" r="6.8" fill="#6e7a6e" stroke="#1a1a1a" stroke-width="1.6"/>
<circle cx="250.1" cy="188.4" r="6.8" fill="#7a7a68" stroke="#1a1a1a" stroke-width="1.6"/>
<circle cx="175" cy="245.7" r="6.8" fill="#6a7272" stroke="#1a1a1a" stroke-width="1.6"/>
<circle cx="248.1" cy="237.6" r="6.8" fill="#ffffff" stroke="#1a1a1a" stroke-width="1.6"/>
<circle cx="441.6" cy="218.8" r="6.8" fill="#887070" stroke="#1a1a1a" stroke-width="1.6"/>
<circle cx="312.9" cy="285.9" r="6.8" fill="#7a6a72" stroke="#1a1a1a" stroke-width="1.6"/>
<circle cx="225.6" cy="338" r="6.8" fill="#6a6a7e" stroke="#1a1a1a" stroke-width="1.6"/>
<circle cx="467" cy="250" r="7" fill="#000000"/>
<rect x="584.25" y="601.25" width="21.5" height="21.5" fill="none" stroke="#000000" stroke-width="2.6"/>
<circle cx="610.8" cy="574.6" r="7" fill="#ffffff" stroke="#1a1a1a" stroke-width="1.6"/>
</svg>
</body></html>
